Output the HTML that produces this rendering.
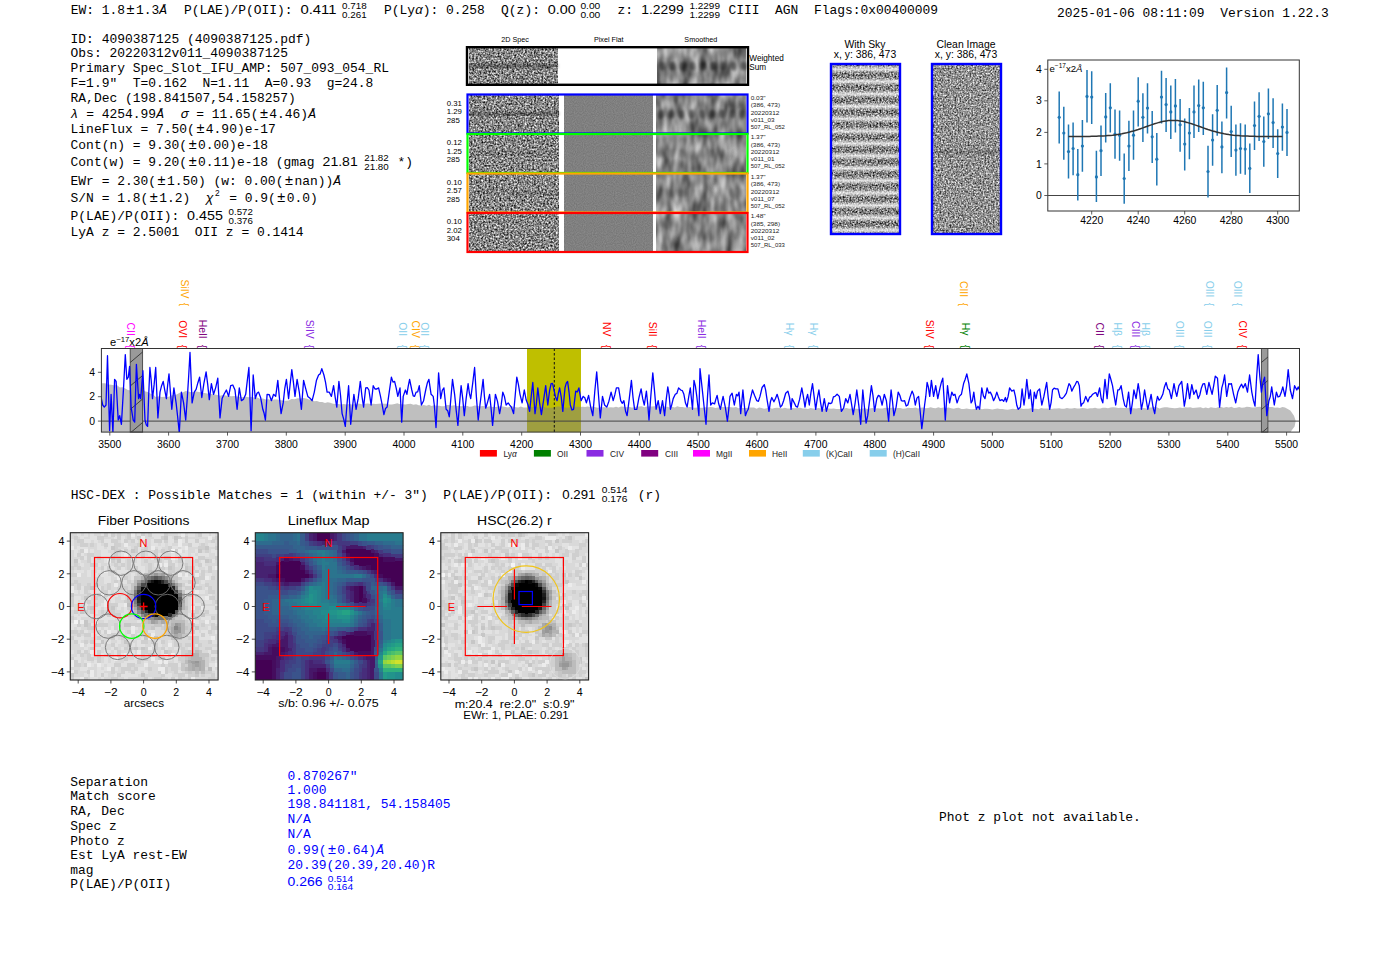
<!DOCTYPE html><html><head><meta charset="utf-8"><style>html,body{margin:0;padding:0;background:#fff;width:1400px;height:953px;overflow:hidden}svg{display:block}</style></head><body>
<svg width="1400" height="953" viewBox="0 0 1400 953">
<defs>
<filter id="nz" x="0" y="0" width="100%" height="100%" color-interpolation-filters="sRGB">
 <feTurbulence type="fractalNoise" baseFrequency="0.55" numOctaves="2" seed="3"/>
 <feGaussianBlur stdDeviation="0.45"/>
 <feColorMatrix type="matrix" values="1.45 0 0 0 -0.2  1.45 0 0 0 -0.2  1.45 0 0 0 -0.2  0 0 0 0 1"/>
</filter>
<filter id="nz2" x="0" y="0" width="100%" height="100%" color-interpolation-filters="sRGB">
 <feTurbulence type="fractalNoise" baseFrequency="0.55" numOctaves="2" seed="8"/>
 <feGaussianBlur stdDeviation="0.45"/>
 <feColorMatrix type="matrix" values="1.45 0 0 0 -0.2  1.45 0 0 0 -0.2  1.45 0 0 0 -0.2  0 0 0 0 1"/>
</filter>
<filter id="smooth" x="0" y="0" width="100%" height="100%" color-interpolation-filters="sRGB">
 <feTurbulence type="fractalNoise" baseFrequency="0.11 0.05" numOctaves="2" seed="5"/>
 <feColorMatrix type="matrix" values="0.8 0 0 0 0.13  0.8 0 0 0 0.13  0.8 0 0 0 0.13  0 0 0 0 1"/>
</filter>
<filter id="flat" x="0" y="0" width="100%" height="100%" color-interpolation-filters="sRGB">
 <feTurbulence type="fractalNoise" baseFrequency="0.9" numOctaves="1" seed="9"/>
 <feColorMatrix type="matrix" values="0.15 0 0 0 0.425  0.15 0 0 0 0.425  0.15 0 0 0 0.425  0 0 0 0 1"/>
</filter>
<filter id="bg" x="0" y="0" width="100%" height="100%" color-interpolation-filters="sRGB">
 <feTurbulence type="fractalNoise" baseFrequency="0.3" numOctaves="1" seed="11"/>
 <feColorMatrix type="matrix" values="0.5 0 0 0 0.6  0.5 0 0 0 0.6  0.5 0 0 0 0.6  0 0 0 0 1"/>
</filter>
<filter id="nzc" x="0" y="0" width="100%" height="100%" color-interpolation-filters="sRGB">
 <feTurbulence type="fractalNoise" baseFrequency="0.6" numOctaves="2" seed="13"/>
 <feGaussianBlur stdDeviation="0.5"/>
 <feColorMatrix type="matrix" values="1.3 0 0 0 -0.08  1.3 0 0 0 -0.08  1.3 0 0 0 -0.08  0 0 0 0 1"/>
</filter>
<filter id="nzs" x="0" y="0" width="100%" height="100%" color-interpolation-filters="sRGB">
 <feTurbulence type="fractalNoise" baseFrequency="0.6" numOctaves="2" seed="17"/>
 <feGaussianBlur stdDeviation="0.4"/>
 <feColorMatrix type="matrix" values="1.5 0 0 0 -0.27  1.5 0 0 0 -0.27  1.5 0 0 0 -0.27  0 0 0 0 1"/>
</filter>
<linearGradient id="stripe" x1="0" y1="0" x2="0" y2="1">
 <stop offset="0" stop-color="#fff" stop-opacity="0"/>
 <stop offset="0.3" stop-color="#fff" stop-opacity="0.05"/>
 <stop offset="0.65" stop-color="#fff" stop-opacity="0.8"/>
 <stop offset="1" stop-color="#fff" stop-opacity="0"/>
</linearGradient>
<pattern id="stripes" patternUnits="userSpaceOnUse" x="832" y="61.2" width="67" height="12.38">
 <rect x="0" y="0" width="67" height="12.38" fill="url(#stripe)"/>
</pattern>
<filter id="blur2s" x="-10%" y="-50%" width="120%" height="200%"><feGaussianBlur stdDeviation="1.6"/></filter>
<filter id="blur1"><feGaussianBlur stdDeviation="1.5"/></filter>
<filter id="blur2"><feGaussianBlur stdDeviation="2.5"/></filter>
<filter id="blur4"><feGaussianBlur stdDeviation="4"/></filter>
<filter id="blur6"><feGaussianBlur stdDeviation="6"/></filter>
<pattern id="hatch" patternUnits="userSpaceOnUse" width="12" height="12">
 <path d="M-3,15 L15,-3" stroke="#222" stroke-width="1"/>
</pattern>
</defs>
<text y="14.00" font-size="12.95" font-family='"Liberation Mono", monospace' fill="#000" xml:space="preserve"><tspan x="70.70">EW: 1.8</tspan><tspan x="130.55" text-anchor="middle" font-family='"Liberation Sans", sans-serif' font-size="14.50">±</tspan><tspan x="135.93">1.3</tspan><tspan x="159.27" font-style="italic">Å</tspan></text>
<text x="183.90" y="14.00" font-size="12.95" font-family='"Liberation Mono", monospace' fill="#000" text-anchor="start" >P(LAE)/P(OII):</text>
<text x="300.40" y="14.00" font-size="12.9" font-family='"Liberation Sans", sans-serif' fill="#000" text-anchor="start" textLength="36" lengthAdjust="spacingAndGlyphs" >0.411</text>
<text x="342.10" y="8.60" font-size="9.4" font-family='"Liberation Sans", sans-serif' fill="#000" text-anchor="start" textLength="24.6" lengthAdjust="spacingAndGlyphs" >0.718</text>
<text x="342.10" y="17.60" font-size="9.4" font-family='"Liberation Sans", sans-serif' fill="#000" text-anchor="start" textLength="24.6" lengthAdjust="spacingAndGlyphs" >0.261</text>
<text x="383.90" y="14.00" font-size="12.95" font-family='"Liberation Mono", monospace' fill="#000" text-anchor="start" >P(Ly<tspan font-style="italic">α</tspan>): 0.258</text>
<text x="501.10" y="14.00" font-size="12.95" font-family='"Liberation Mono", monospace' fill="#000" text-anchor="start" >Q(z):</text>
<text x="547.80" y="14.00" font-size="12.9" font-family='"Liberation Sans", sans-serif' fill="#000" text-anchor="start" textLength="27.9" lengthAdjust="spacingAndGlyphs" >0.00</text>
<text x="580.40" y="8.60" font-size="9.4" font-family='"Liberation Sans", sans-serif' fill="#000" text-anchor="start" textLength="19.9" lengthAdjust="spacingAndGlyphs" >0.00</text>
<text x="580.40" y="17.60" font-size="9.4" font-family='"Liberation Sans", sans-serif' fill="#000" text-anchor="start" textLength="19.9" lengthAdjust="spacingAndGlyphs" >0.00</text>
<text x="617.50" y="14.00" font-size="12.95" font-family='"Liberation Mono", monospace' fill="#000" text-anchor="start" >z:</text>
<text x="641.30" y="14.00" font-size="12.9" font-family='"Liberation Sans", sans-serif' fill="#000" text-anchor="start" textLength="42.4" lengthAdjust="spacingAndGlyphs" >1.2299</text>
<text x="689.40" y="8.60" font-size="9.4" font-family='"Liberation Sans", sans-serif' fill="#000" text-anchor="start" textLength="30.6" lengthAdjust="spacingAndGlyphs" >1.2299</text>
<text x="689.40" y="17.60" font-size="9.4" font-family='"Liberation Sans", sans-serif' fill="#000" text-anchor="start" textLength="30.6" lengthAdjust="spacingAndGlyphs" >1.2299</text>
<text x="728.50" y="14.00" font-size="12.95" font-family='"Liberation Mono", monospace' fill="#000" text-anchor="start" xml:space="preserve">CIII  AGN  Flags:0x00400009</text>
<text x="1057.10" y="16.70" font-size="12.95" font-family='"Liberation Mono", monospace' fill="#000" text-anchor="start" xml:space="preserve">2025-01-06 08:11:09  Version 1.22.3</text>
<text y="42.70" font-size="12.95" font-family='"Liberation Mono", monospace' fill="#000" xml:space="preserve"><tspan x="70.60">ID: 4090387125 (4090387125.pdf)</tspan></text>
<text y="56.80" font-size="12.95" font-family='"Liberation Mono", monospace' fill="#000" xml:space="preserve"><tspan x="70.60">Obs: 20220312v011_4090387125</tspan></text>
<text y="72.20" font-size="12.95" font-family='"Liberation Mono", monospace' fill="#000" xml:space="preserve"><tspan x="70.60">Primary Spec_Slot_IFU_AMP: 507_093_054_RL</tspan></text>
<text y="86.70" font-size="12.95" font-family='"Liberation Mono", monospace' fill="#000" xml:space="preserve"><tspan x="70.60">F=1.9"  T=0.162  N=1.11  A=0.93  g=24.8</tspan></text>
<text y="101.70" font-size="12.95" font-family='"Liberation Mono", monospace' fill="#000" xml:space="preserve"><tspan x="70.60">RA,Dec (198.841507,54.158257)</tspan></text>
<text y="117.90" font-size="12.95" font-family='"Liberation Mono", monospace' fill="#000" xml:space="preserve"><tspan x="70.60" font-style="italic">λ</tspan><tspan x="78.38"> = 4254.99</tspan><tspan x="156.18" font-style="italic">Å</tspan><tspan x="165.18">  </tspan><tspan x="180.74" font-style="italic">σ</tspan><tspan x="188.52"> = 11.65(</tspan><tspan x="263.93" text-anchor="middle" font-family='"Liberation Sans", sans-serif' font-size="14.50">±</tspan><tspan x="269.31">4.46)</tspan><tspan x="308.21" font-style="italic">Å</tspan></text>
<text y="133.30" font-size="12.95" font-family='"Liberation Mono", monospace' fill="#000" xml:space="preserve"><tspan x="70.60">LineFlux = 7.50(</tspan><tspan x="200.47" text-anchor="middle" font-family='"Liberation Sans", sans-serif' font-size="14.50">±</tspan><tspan x="205.85">4.90)e-17</tspan></text>
<text y="148.60" font-size="12.95" font-family='"Liberation Mono", monospace' fill="#000" xml:space="preserve"><tspan x="70.60">Cont(n) = 9.30(</tspan><tspan x="192.69" text-anchor="middle" font-family='"Liberation Sans", sans-serif' font-size="14.50">±</tspan><tspan x="198.07">0.00)e-18</tspan></text>
<text y="165.70" font-size="12.95" font-family='"Liberation Mono", monospace' fill="#000" xml:space="preserve"><tspan x="70.60">Cont(w) = 9.20(</tspan><tspan x="192.69" text-anchor="middle" font-family='"Liberation Sans", sans-serif' font-size="14.50">±</tspan><tspan x="198.07">0.11)e-18 (gmag</tspan></text>
<text y="184.60" font-size="12.95" font-family='"Liberation Mono", monospace' fill="#000" xml:space="preserve"><tspan x="70.60">EWr = 2.30(</tspan><tspan x="161.56" text-anchor="middle" font-family='"Liberation Sans", sans-serif' font-size="14.50">±</tspan><tspan x="166.95">1.50) (w: 0.00(</tspan><tspan x="289.03" text-anchor="middle" font-family='"Liberation Sans", sans-serif' font-size="14.50">±</tspan><tspan x="294.42">nan))</tspan><tspan x="333.32" font-style="italic">Å</tspan></text>
<text y="201.90" font-size="12.95" font-family='"Liberation Mono", monospace' fill="#000" xml:space="preserve"><tspan x="70.60">S/N = 1.8(</tspan><tspan x="153.78" text-anchor="middle" font-family='"Liberation Sans", sans-serif' font-size="14.50">±</tspan><tspan x="159.17">1.2)  </tspan><tspan x="205.85" font-style="italic">χ</tspan></text>
<text y="220.00" font-size="12.95" font-family='"Liberation Mono", monospace' fill="#000" xml:space="preserve"><tspan x="70.60">P(LAE)/P(OII):</tspan></text>
<text y="236.00" font-size="12.95" font-family='"Liberation Mono", monospace' fill="#000" xml:space="preserve"><tspan x="70.60">LyA z = 2.5001  OII z = 0.1414</tspan></text>
<text y="201.90" font-size="12.95" font-family='"Liberation Mono", monospace' fill="#000" xml:space="preserve"><tspan x="229.20">= 0.9(</tspan><tspan x="281.26" text-anchor="middle" font-family='"Liberation Sans", sans-serif' font-size="14.50">±</tspan><tspan x="286.65">0.0)</tspan></text>
<text x="215.00" y="196.00" font-size="8.4" font-family='"Liberation Sans", sans-serif' fill="#000" text-anchor="start" >2</text>
<text x="322.60" y="165.70" font-size="12.9" font-family='"Liberation Sans", sans-serif' fill="#000" text-anchor="start" textLength="35.1" lengthAdjust="spacingAndGlyphs" >21.81</text>
<text x="364.30" y="160.50" font-size="9.4" font-family='"Liberation Sans", sans-serif' fill="#000" text-anchor="start" textLength="24.4" lengthAdjust="spacingAndGlyphs" >21.82</text>
<text x="364.30" y="169.50" font-size="9.4" font-family='"Liberation Sans", sans-serif' fill="#000" text-anchor="start" textLength="24.4" lengthAdjust="spacingAndGlyphs" >21.80</text>
<text x="397.40" y="165.70" font-size="12.95" font-family='"Liberation Mono", monospace' fill="#000" text-anchor="start" >*)</text>
<text x="187.10" y="220.00" font-size="12.9" font-family='"Liberation Sans", sans-serif' fill="#000" text-anchor="start" textLength="35.8" lengthAdjust="spacingAndGlyphs" >0.455</text>
<text x="228.60" y="214.50" font-size="9.4" font-family='"Liberation Sans", sans-serif' fill="#000" text-anchor="start" textLength="24.3" lengthAdjust="spacingAndGlyphs" >0.572</text>
<text x="228.60" y="223.50" font-size="9.4" font-family='"Liberation Sans", sans-serif' fill="#000" text-anchor="start" textLength="24.3" lengthAdjust="spacingAndGlyphs" >0.376</text>
<rect x="469" y="47" width="89" height="37" filter="url(#nz)"/>
<rect x="657" y="47" width="89" height="37" filter="url(#smooth)"/>
<rect x="469" y="64" width="89" height="4" fill="#000" opacity="0.35" filter="url(#blur1)"/>
<g filter="url(#blur2s)"><ellipse cx="662.0" cy="66" rx="3.2" ry="4.5" fill="#000" opacity="0.45"/><ellipse cx="672.2" cy="66" rx="3.2" ry="4.5" fill="#000" opacity="0.45"/><ellipse cx="682.4" cy="66" rx="3.2" ry="4.5" fill="#000" opacity="0.45"/><ellipse cx="692.6" cy="66" rx="3.2" ry="4.5" fill="#000" opacity="0.45"/><ellipse cx="702.8" cy="66" rx="3.2" ry="4.5" fill="#000" opacity="0.45"/><ellipse cx="713.0" cy="66" rx="3.2" ry="4.5" fill="#000" opacity="0.45"/><ellipse cx="723.2" cy="66" rx="3.2" ry="4.5" fill="#000" opacity="0.45"/><ellipse cx="733.4" cy="66" rx="3.2" ry="4.5" fill="#000" opacity="0.45"/><ellipse cx="743.6" cy="66" rx="3.2" ry="4.5" fill="#000" opacity="0.45"/></g>
<rect x="467" y="47.2" width="281" height="37.6" fill="none" stroke="#000" stroke-width="2.4"/>
<text x="515.00" y="41.75" font-size="7.2" font-family='"Liberation Sans", sans-serif' fill="#000" text-anchor="middle" >2D Spec</text>
<text x="608.75" y="41.75" font-size="7.2" font-family='"Liberation Sans", sans-serif' fill="#000" text-anchor="middle" >Pixel Flat</text>
<text x="700.75" y="41.75" font-size="7.2" font-family='"Liberation Sans", sans-serif' fill="#000" text-anchor="middle" >Smoothed</text>
<text x="749.30" y="61.25" font-size="8.2" font-family='"Liberation Sans", sans-serif' fill="#000" text-anchor="start" >Weighted</text>
<text x="749.30" y="69.50" font-size="8.2" font-family='"Liberation Sans", sans-serif' fill="#000" text-anchor="start" >Sum</text>
<rect x="469" y="95" width="90" height="38" filter="url(#nz)"/>
<rect x="564" y="95" width="89" height="38" filter="url(#flat)"/>
<rect x="656" y="95" width="90" height="38" filter="url(#smooth)" transform="translate(0,0)"/>
<rect x="469" y="112" width="90" height="3.5" fill="#000" opacity="0.35" filter="url(#blur1)"/>
<g filter="url(#blur2s)"><ellipse cx="661.0" cy="114" rx="3.2" ry="4.5" fill="#000" opacity="0.42"/><ellipse cx="671.2" cy="114" rx="3.2" ry="4.5" fill="#000" opacity="0.42"/><ellipse cx="681.4" cy="114" rx="3.2" ry="4.5" fill="#000" opacity="0.42"/><ellipse cx="691.6" cy="114" rx="3.2" ry="4.5" fill="#000" opacity="0.42"/><ellipse cx="701.8" cy="114" rx="3.2" ry="4.5" fill="#000" opacity="0.42"/><ellipse cx="712.0" cy="114" rx="3.2" ry="4.5" fill="#000" opacity="0.42"/><ellipse cx="722.2" cy="114" rx="3.2" ry="4.5" fill="#000" opacity="0.42"/><ellipse cx="732.4" cy="114" rx="3.2" ry="4.5" fill="#000" opacity="0.42"/><ellipse cx="742.6" cy="114" rx="3.2" ry="4.5" fill="#000" opacity="0.42"/></g>
<rect x="467.5" y="94.5" width="280" height="39" fill="none" stroke="#0000ff" stroke-width="2.2"/>
<text x="446.75" y="105.75" font-size="7.8" font-family='"Liberation Sans", sans-serif' fill="#000" text-anchor="start" >0.31</text>
<text x="446.75" y="114.35" font-size="7.8" font-family='"Liberation Sans", sans-serif' fill="#000" text-anchor="start" >1.29</text>
<text x="446.75" y="122.95" font-size="7.8" font-family='"Liberation Sans", sans-serif' fill="#000" text-anchor="start" >285</text>
<text x="750.70" y="99.50" font-size="5.9" font-family='"Liberation Sans", sans-serif' fill="#222" text-anchor="start" textLength="14.9" lengthAdjust="spacingAndGlyphs" >0.03"</text>
<text x="750.70" y="107.00" font-size="5.9" font-family='"Liberation Sans", sans-serif' fill="#222" text-anchor="start" textLength="29.4" lengthAdjust="spacingAndGlyphs" >(386, 473)</text>
<text x="750.70" y="114.70" font-size="5.9" font-family='"Liberation Sans", sans-serif' fill="#222" text-anchor="start" textLength="28.7" lengthAdjust="spacingAndGlyphs" >20220312</text>
<text x="750.70" y="121.60" font-size="5.9" font-family='"Liberation Sans", sans-serif' fill="#222" text-anchor="start" textLength="23.9" lengthAdjust="spacingAndGlyphs" >v011_03</text>
<text x="750.70" y="128.90" font-size="5.9" font-family='"Liberation Sans", sans-serif' fill="#222" text-anchor="start" textLength="34.2" lengthAdjust="spacingAndGlyphs" >507_RL_052</text>
<rect x="469" y="134.5" width="90" height="38" filter="url(#nz2)"/>
<rect x="564" y="134.5" width="89" height="38" filter="url(#flat)"/>
<rect x="656" y="134.5" width="90" height="38" filter="url(#smooth)" transform="translate(0,0)"/>
<rect x="469" y="151.5" width="90" height="3.5" fill="#000" opacity="0.12" filter="url(#blur1)"/>
<g filter="url(#blur2s)"><ellipse cx="661.0" cy="153.5" rx="3.2" ry="4.5" fill="#000" opacity="0.14"/><ellipse cx="671.2" cy="153.5" rx="3.2" ry="4.5" fill="#000" opacity="0.14"/><ellipse cx="681.4" cy="153.5" rx="3.2" ry="4.5" fill="#000" opacity="0.14"/><ellipse cx="691.6" cy="153.5" rx="3.2" ry="4.5" fill="#000" opacity="0.14"/><ellipse cx="701.8" cy="153.5" rx="3.2" ry="4.5" fill="#000" opacity="0.14"/><ellipse cx="712.0" cy="153.5" rx="3.2" ry="4.5" fill="#000" opacity="0.14"/><ellipse cx="722.2" cy="153.5" rx="3.2" ry="4.5" fill="#000" opacity="0.14"/><ellipse cx="732.4" cy="153.5" rx="3.2" ry="4.5" fill="#000" opacity="0.14"/><ellipse cx="742.6" cy="153.5" rx="3.2" ry="4.5" fill="#000" opacity="0.14"/></g>
<rect x="467.5" y="134.0" width="280" height="39" fill="none" stroke="#00ff00" stroke-width="2.2"/>
<text x="446.75" y="145.25" font-size="7.8" font-family='"Liberation Sans", sans-serif' fill="#000" text-anchor="start" >0.12</text>
<text x="446.75" y="153.85" font-size="7.8" font-family='"Liberation Sans", sans-serif' fill="#000" text-anchor="start" >1.25</text>
<text x="446.75" y="162.45" font-size="7.8" font-family='"Liberation Sans", sans-serif' fill="#000" text-anchor="start" >285</text>
<text x="750.70" y="139.00" font-size="5.9" font-family='"Liberation Sans", sans-serif' fill="#222" text-anchor="start" textLength="14.9" lengthAdjust="spacingAndGlyphs" >1.37"</text>
<text x="750.70" y="146.50" font-size="5.9" font-family='"Liberation Sans", sans-serif' fill="#222" text-anchor="start" textLength="29.4" lengthAdjust="spacingAndGlyphs" >(386, 473)</text>
<text x="750.70" y="154.20" font-size="5.9" font-family='"Liberation Sans", sans-serif' fill="#222" text-anchor="start" textLength="28.7" lengthAdjust="spacingAndGlyphs" >20220312</text>
<text x="750.70" y="161.10" font-size="5.9" font-family='"Liberation Sans", sans-serif' fill="#222" text-anchor="start" textLength="23.9" lengthAdjust="spacingAndGlyphs" >v011_01</text>
<text x="750.70" y="168.40" font-size="5.9" font-family='"Liberation Sans", sans-serif' fill="#222" text-anchor="start" textLength="34.2" lengthAdjust="spacingAndGlyphs" >507_RL_052</text>
<rect x="469" y="174" width="90" height="38" filter="url(#nz)"/>
<rect x="564" y="174" width="89" height="38" filter="url(#flat)"/>
<rect x="656" y="174" width="90" height="38" filter="url(#smooth)" transform="translate(0,0)"/>
<rect x="469" y="191" width="90" height="3.5" fill="#000" opacity="0.12" filter="url(#blur1)"/>
<g filter="url(#blur2s)"><ellipse cx="661.0" cy="193" rx="3.2" ry="4.5" fill="#000" opacity="0.14"/><ellipse cx="671.2" cy="193" rx="3.2" ry="4.5" fill="#000" opacity="0.14"/><ellipse cx="681.4" cy="193" rx="3.2" ry="4.5" fill="#000" opacity="0.14"/><ellipse cx="691.6" cy="193" rx="3.2" ry="4.5" fill="#000" opacity="0.14"/><ellipse cx="701.8" cy="193" rx="3.2" ry="4.5" fill="#000" opacity="0.14"/><ellipse cx="712.0" cy="193" rx="3.2" ry="4.5" fill="#000" opacity="0.14"/><ellipse cx="722.2" cy="193" rx="3.2" ry="4.5" fill="#000" opacity="0.14"/><ellipse cx="732.4" cy="193" rx="3.2" ry="4.5" fill="#000" opacity="0.14"/><ellipse cx="742.6" cy="193" rx="3.2" ry="4.5" fill="#000" opacity="0.14"/></g>
<rect x="467.5" y="173.5" width="280" height="39" fill="none" stroke="#ffa500" stroke-width="2.2"/>
<text x="446.75" y="184.75" font-size="7.8" font-family='"Liberation Sans", sans-serif' fill="#000" text-anchor="start" >0.10</text>
<text x="446.75" y="193.35" font-size="7.8" font-family='"Liberation Sans", sans-serif' fill="#000" text-anchor="start" >2.57</text>
<text x="446.75" y="201.95" font-size="7.8" font-family='"Liberation Sans", sans-serif' fill="#000" text-anchor="start" >285</text>
<text x="750.70" y="178.50" font-size="5.9" font-family='"Liberation Sans", sans-serif' fill="#222" text-anchor="start" textLength="14.9" lengthAdjust="spacingAndGlyphs" >1.37"</text>
<text x="750.70" y="186.00" font-size="5.9" font-family='"Liberation Sans", sans-serif' fill="#222" text-anchor="start" textLength="29.4" lengthAdjust="spacingAndGlyphs" >(386, 473)</text>
<text x="750.70" y="193.70" font-size="5.9" font-family='"Liberation Sans", sans-serif' fill="#222" text-anchor="start" textLength="28.7" lengthAdjust="spacingAndGlyphs" >20220312</text>
<text x="750.70" y="200.60" font-size="5.9" font-family='"Liberation Sans", sans-serif' fill="#222" text-anchor="start" textLength="23.9" lengthAdjust="spacingAndGlyphs" >v011_07</text>
<text x="750.70" y="207.90" font-size="5.9" font-family='"Liberation Sans", sans-serif' fill="#222" text-anchor="start" textLength="34.2" lengthAdjust="spacingAndGlyphs" >507_RL_052</text>
<rect x="469" y="213.5" width="90" height="38" filter="url(#nz2)"/>
<rect x="564" y="213.5" width="89" height="38" filter="url(#flat)"/>
<rect x="656" y="213.5" width="90" height="38" filter="url(#smooth)" transform="translate(0,0)"/>
<rect x="467.5" y="213.0" width="280" height="39" fill="none" stroke="#ff0000" stroke-width="2.2"/>
<text x="446.75" y="224.25" font-size="7.8" font-family='"Liberation Sans", sans-serif' fill="#000" text-anchor="start" >0.10</text>
<text x="446.75" y="232.85" font-size="7.8" font-family='"Liberation Sans", sans-serif' fill="#000" text-anchor="start" >2.02</text>
<text x="446.75" y="241.45" font-size="7.8" font-family='"Liberation Sans", sans-serif' fill="#000" text-anchor="start" >304</text>
<text x="750.70" y="218.00" font-size="5.9" font-family='"Liberation Sans", sans-serif' fill="#222" text-anchor="start" textLength="14.9" lengthAdjust="spacingAndGlyphs" >1.48"</text>
<text x="750.70" y="225.50" font-size="5.9" font-family='"Liberation Sans", sans-serif' fill="#222" text-anchor="start" textLength="29.4" lengthAdjust="spacingAndGlyphs" >(385, 298)</text>
<text x="750.70" y="233.20" font-size="5.9" font-family='"Liberation Sans", sans-serif' fill="#222" text-anchor="start" textLength="28.7" lengthAdjust="spacingAndGlyphs" >20220312</text>
<text x="750.70" y="240.10" font-size="5.9" font-family='"Liberation Sans", sans-serif' fill="#222" text-anchor="start" textLength="23.9" lengthAdjust="spacingAndGlyphs" >v011_02</text>
<text x="750.70" y="247.40" font-size="5.9" font-family='"Liberation Sans", sans-serif' fill="#222" text-anchor="start" textLength="34.2" lengthAdjust="spacingAndGlyphs" >507_RL_033</text>
<text x="865.00" y="47.60" font-size="10.4" font-family='"Liberation Sans", sans-serif' fill="#000" text-anchor="middle" >With Sky</text>
<text x="865.00" y="58.20" font-size="10.4" font-family='"Liberation Sans", sans-serif' fill="#000" text-anchor="middle" >x, y: 386, 473</text>
<text x="966.00" y="47.60" font-size="10.4" font-family='"Liberation Sans", sans-serif' fill="#000" text-anchor="middle" >Clean Image</text>
<text x="966.00" y="58.20" font-size="10.4" font-family='"Liberation Sans", sans-serif' fill="#000" text-anchor="middle" >x, y: 386, 473</text>
<rect x="832" y="65" width="67" height="168" filter="url(#nzs)"/>
<rect x="832" y="65" width="67" height="168" fill="url(#stripes)"/>
<rect x="933" y="65" width="67" height="168" filter="url(#nzc)"/>
<rect x="933" y="150" width="67" height="4" fill="#000" opacity="0.2" filter="url(#blur1)"/>
<rect x="831" y="64" width="69" height="170" fill="none" stroke="#0000ff" stroke-width="2.4"/>
<rect x="932" y="64" width="69" height="170" fill="none" stroke="#0000ff" stroke-width="2.4"/>
<rect x="1047.8" y="60" width="251.5" height="151" fill="#fff" stroke="#333" stroke-width="1"/>
<line x1="1047.8" y1="195.5" x2="1299.3" y2="195.5" stroke="#444" stroke-width="1"/>
<path d="M1059.2,91.4V143.6 M1063.8,106.8V159.7 M1068.5,124.6V178.6 M1073.1,122.4V175.3 M1077.8,149.0V200.4 M1082.4,120.1V171.7 M1087.0,70.1V122.4 M1091.7,71.2V123.9 M1096.4,150.7V202.1 M1101.0,125.6V176.0 M1105.7,92.9V142.6 M1110.3,83.2V132.5 M1115.0,109.4V158.8 M1119.6,110.6V160.8 M1124.2,153.5V203.8 M1128.9,120.7V171.1 M1133.5,110.6V159.7 M1138.2,77.2V126.5 M1142.9,93.3V142.1 M1147.5,83.2V133.6 M1152.2,111.1V162.9 M1156.8,132.9V185.6 M1161.5,70.8V123.5 M1166.1,77.9V131.9 M1170.8,85.4V138.9 M1175.4,78.9V132.5 M1180.1,98.9V151.8 M1184.7,118.6V170.4 M1189.4,107.9V159.3 M1194.0,85.4V137.9 M1198.7,79.6V132.1 M1203.3,81.7V135.1 M1208.0,145.8V197.4 M1212.6,114.3V165.7 M1217.2,84.9V135.7 M1221.9,121.4V173.2 M1226.6,67.6V118.6 M1231.2,105.7V157.1 M1235.9,124.6V175.8 M1240.5,123.3V173.8 M1245.2,124.4V174.7 M1249.8,143.6V193.1 M1254.5,101.4V150.1 M1259.1,92.2V141.1 M1263.8,116.4V166.8 M1268.4,88.6V138.9 M1273.1,98.2V148.1 M1277.7,129.3V177.9 M1282.4,103.6V150.7 M1287.0,108.9V156.1" stroke="#1f77b4" stroke-width="1.5" fill="none"/>
<circle cx="1059.2" cy="117.3" r="1.6" fill="#1f77b4"/>
<circle cx="1063.8" cy="133.0" r="1.6" fill="#1f77b4"/>
<circle cx="1068.5" cy="151.6" r="1.6" fill="#1f77b4"/>
<circle cx="1073.1" cy="148.5" r="1.6" fill="#1f77b4"/>
<circle cx="1077.8" cy="174.7" r="1.6" fill="#1f77b4"/>
<circle cx="1082.4" cy="146.0" r="1.6" fill="#1f77b4"/>
<circle cx="1087.0" cy="96.4" r="1.6" fill="#1f77b4"/>
<circle cx="1091.7" cy="97.1" r="1.6" fill="#1f77b4"/>
<circle cx="1096.4" cy="176.9" r="1.6" fill="#1f77b4"/>
<circle cx="1101.0" cy="150.7" r="1.6" fill="#1f77b4"/>
<circle cx="1105.7" cy="116.9" r="1.6" fill="#1f77b4"/>
<circle cx="1110.3" cy="107.8" r="1.6" fill="#1f77b4"/>
<circle cx="1115.0" cy="134.0" r="1.6" fill="#1f77b4"/>
<circle cx="1119.6" cy="135.2" r="1.6" fill="#1f77b4"/>
<circle cx="1124.2" cy="178.5" r="1.6" fill="#1f77b4"/>
<circle cx="1128.9" cy="146.0" r="1.6" fill="#1f77b4"/>
<circle cx="1133.5" cy="135.2" r="1.6" fill="#1f77b4"/>
<circle cx="1138.2" cy="101.2" r="1.6" fill="#1f77b4"/>
<circle cx="1142.9" cy="117.3" r="1.6" fill="#1f77b4"/>
<circle cx="1147.5" cy="108.1" r="1.6" fill="#1f77b4"/>
<circle cx="1152.2" cy="136.8" r="1.6" fill="#1f77b4"/>
<circle cx="1156.8" cy="159.2" r="1.6" fill="#1f77b4"/>
<circle cx="1161.5" cy="97.1" r="1.6" fill="#1f77b4"/>
<circle cx="1166.1" cy="104.6" r="1.6" fill="#1f77b4"/>
<circle cx="1170.8" cy="111.9" r="1.6" fill="#1f77b4"/>
<circle cx="1175.4" cy="105.9" r="1.6" fill="#1f77b4"/>
<circle cx="1180.1" cy="124.8" r="1.6" fill="#1f77b4"/>
<circle cx="1184.7" cy="144.1" r="1.6" fill="#1f77b4"/>
<circle cx="1189.4" cy="133.0" r="1.6" fill="#1f77b4"/>
<circle cx="1194.0" cy="111.9" r="1.6" fill="#1f77b4"/>
<circle cx="1198.7" cy="105.6" r="1.6" fill="#1f77b4"/>
<circle cx="1203.3" cy="107.8" r="1.6" fill="#1f77b4"/>
<circle cx="1208.0" cy="171.5" r="1.6" fill="#1f77b4"/>
<circle cx="1212.6" cy="140.0" r="1.6" fill="#1f77b4"/>
<circle cx="1217.2" cy="110.3" r="1.6" fill="#1f77b4"/>
<circle cx="1221.9" cy="146.9" r="1.6" fill="#1f77b4"/>
<circle cx="1226.6" cy="92.6" r="1.6" fill="#1f77b4"/>
<circle cx="1231.2" cy="131.5" r="1.6" fill="#1f77b4"/>
<circle cx="1235.9" cy="150.1" r="1.6" fill="#1f77b4"/>
<circle cx="1240.5" cy="148.5" r="1.6" fill="#1f77b4"/>
<circle cx="1245.2" cy="149.1" r="1.6" fill="#1f77b4"/>
<circle cx="1249.8" cy="168.4" r="1.6" fill="#1f77b4"/>
<circle cx="1254.5" cy="125.5" r="1.6" fill="#1f77b4"/>
<circle cx="1259.1" cy="116.3" r="1.6" fill="#1f77b4"/>
<circle cx="1263.8" cy="141.5" r="1.6" fill="#1f77b4"/>
<circle cx="1268.4" cy="113.8" r="1.6" fill="#1f77b4"/>
<circle cx="1273.1" cy="122.6" r="1.6" fill="#1f77b4"/>
<circle cx="1277.7" cy="153.5" r="1.6" fill="#1f77b4"/>
<circle cx="1282.4" cy="127.0" r="1.6" fill="#1f77b4"/>
<circle cx="1287.0" cy="132.4" r="1.6" fill="#1f77b4"/>
<polyline points="1068.5,136.5 1070.8,136.5 1073.1,136.5 1075.4,136.5 1077.8,136.5 1080.1,136.5 1082.4,136.4 1084.7,136.4 1087.0,136.4 1089.4,136.4 1091.7,136.3 1094.0,136.3 1096.4,136.2 1098.7,136.1 1101.0,136.0 1103.3,135.9 1105.7,135.8 1108.0,135.6 1110.3,135.4 1112.6,135.2 1115.0,134.9 1117.3,134.6 1119.6,134.2 1121.9,133.8 1124.2,133.3 1126.6,132.8 1128.9,132.2 1131.2,131.6 1133.5,131.0 1135.9,130.2 1138.2,129.5 1140.5,128.7 1142.9,127.9 1145.2,127.0 1147.5,126.2 1149.8,125.4 1152.2,124.6 1154.5,123.8 1156.8,123.1 1159.1,122.4 1161.5,121.8 1163.8,121.3 1166.1,120.9 1168.4,120.6 1170.8,120.5 1173.1,120.4 1175.4,120.5 1177.7,120.6 1180.1,120.9 1182.4,121.3 1184.7,121.8 1187.0,122.4 1189.4,123.1 1191.7,123.8 1194.0,124.6 1196.3,125.4 1198.7,126.2 1201.0,127.0 1203.3,127.9 1205.6,128.7 1208.0,129.5 1210.3,130.2 1212.6,131.0 1214.9,131.6 1217.2,132.2 1219.6,132.8 1221.9,133.3 1224.2,133.8 1226.6,134.2 1228.9,134.6 1231.2,134.9 1233.5,135.2 1235.9,135.4 1238.2,135.6 1240.5,135.8 1242.8,135.9 1245.2,136.0 1247.5,136.1 1249.8,136.2 1252.1,136.3 1254.5,136.3 1256.8,136.4 1259.1,136.4 1261.4,136.4 1263.8,136.4 1266.1,136.5 1268.4,136.5 1270.7,136.5 1273.1,136.5 1275.4,136.5 1277.7,136.5 1280.0,136.5 1282.4,136.5" stroke="#333" stroke-width="1.5" fill="none"/>
<line x1="1044.3" y1="195.5" x2="1047.8" y2="195.5" stroke="#333" stroke-width="0.8"/>
<text x="1041.80" y="199.10" font-size="10.4" font-family='"Liberation Sans", sans-serif' fill="#000" text-anchor="end" >0</text>
<line x1="1044.3" y1="163.9" x2="1047.8" y2="163.9" stroke="#333" stroke-width="0.8"/>
<text x="1041.80" y="167.55" font-size="10.4" font-family='"Liberation Sans", sans-serif' fill="#000" text-anchor="end" >1</text>
<line x1="1044.3" y1="132.4" x2="1047.8" y2="132.4" stroke="#333" stroke-width="0.8"/>
<text x="1041.80" y="136.00" font-size="10.4" font-family='"Liberation Sans", sans-serif' fill="#000" text-anchor="end" >2</text>
<line x1="1044.3" y1="100.8" x2="1047.8" y2="100.8" stroke="#333" stroke-width="0.8"/>
<text x="1041.80" y="104.45" font-size="10.4" font-family='"Liberation Sans", sans-serif' fill="#000" text-anchor="end" >3</text>
<line x1="1044.3" y1="69.3" x2="1047.8" y2="69.3" stroke="#333" stroke-width="0.8"/>
<text x="1041.80" y="72.90" font-size="10.4" font-family='"Liberation Sans", sans-serif' fill="#000" text-anchor="end" >4</text>
<line x1="1091.7" y1="211" x2="1091.7" y2="214.5" stroke="#333" stroke-width="0.8"/>
<text x="1091.70" y="224.20" font-size="10.4" font-family='"Liberation Sans", sans-serif' fill="#000" text-anchor="middle" >4220</text>
<line x1="1138.2" y1="211" x2="1138.2" y2="214.5" stroke="#333" stroke-width="0.8"/>
<text x="1138.20" y="224.20" font-size="10.4" font-family='"Liberation Sans", sans-serif' fill="#000" text-anchor="middle" >4240</text>
<line x1="1184.7" y1="211" x2="1184.7" y2="214.5" stroke="#333" stroke-width="0.8"/>
<text x="1184.70" y="224.20" font-size="10.4" font-family='"Liberation Sans", sans-serif' fill="#000" text-anchor="middle" >4260</text>
<line x1="1231.2" y1="211" x2="1231.2" y2="214.5" stroke="#333" stroke-width="0.8"/>
<text x="1231.20" y="224.20" font-size="10.4" font-family='"Liberation Sans", sans-serif' fill="#000" text-anchor="middle" >4280</text>
<line x1="1277.7" y1="211" x2="1277.7" y2="214.5" stroke="#333" stroke-width="0.8"/>
<text x="1277.70" y="224.20" font-size="10.4" font-family='"Liberation Sans", sans-serif' fill="#000" text-anchor="middle" >4300</text>
<text x="1049.50" y="71.50" font-size="9.6" font-family='"Liberation Sans", sans-serif' fill="#000" text-anchor="start" >e<tspan font-size="6.5" dy="-4">−17</tspan><tspan dy="4">x2</tspan><tspan font-style="italic">Å</tspan></text>
<clipPath id="pc"><rect x="101.4" y="348.5" width="1198.1" height="83.60000000000002"/></clipPath>
<rect x="101.4" y="348.5" width="1198.1" height="83.60000000000002" fill="#fff"/>
<rect x="527" y="348.5" width="54" height="83.6" fill="#bfbf00"/>
<polygon points="102.1,383.2 105.1,383.2 108.1,384.4 111.1,384.7 114.1,385.3 117.1,385.3 119.8,387.4 122.5,387.2 125.2,388.6 127.9,389.9 130.9,390.4 133.9,389.6 136.9,390.5 139.9,390.7 142.9,389.5 145.4,391.4 148.0,391.9 150.6,393.7 153.1,394.5 155.7,397.1 158.7,396.3 161.7,397.1 164.7,396.8 167.7,396.9 170.7,396.0 173.7,394.8 176.7,394.4 179.7,392.7 182.7,392.5 185.7,390.9 188.4,391.4 191.1,392.2 193.7,391.9 196.4,391.6 199.1,391.9 201.8,392.7 204.5,393.0 207.1,393.4 209.7,393.5 212.3,394.3 214.8,394.4 217.4,395.1 220.0,395.7 222.8,395.1 225.7,395.5 228.6,395.9 231.4,396.3 234.3,395.9 237.1,396.5 240.0,396.8 242.8,397.3 245.7,396.8 248.6,397.3 251.4,396.9 254.3,397.5 257.1,397.4 260.0,398.8 262.8,398.5 265.7,399.4 268.6,399.2 271.4,400.2 274.3,399.6 277.1,399.6 280.0,400.1 282.8,400.6 285.7,400.7 288.6,400.4 291.6,399.1 294.6,399.3 297.6,398.3 300.6,398.4 303.6,398.0 306.2,398.4 308.9,399.5 311.6,399.6 314.3,401.2 316.9,401.0 319.6,402.0 322.3,402.0 325.0,402.9 327.7,402.2 330.3,402.7 333.0,403.8 335.7,403.9 338.4,404.0 341.1,404.4 343.7,403.9 346.4,404.4 349.1,403.9 351.8,404.5 354.4,404.2 357.1,403.4 359.8,403.7 362.5,404.4 365.2,403.7 367.8,403.5 370.5,403.9 373.2,403.8 375.9,404.1 378.6,403.8 381.2,403.6 383.9,403.8 386.6,403.8 389.3,404.5 392.0,404.6 394.6,404.1 397.3,403.3 400.0,404.3 402.7,404.3 405.4,404.6 408.0,404.1 410.7,403.8 413.4,404.8 416.1,404.2 418.7,405.2 421.4,405.4 423.9,404.9 426.5,405.7 429.0,404.7 431.5,405.9 434.0,405.3 436.6,405.7 439.1,405.8 441.6,406.2 444.1,406.2 446.6,405.0 449.2,405.0 451.7,405.8 454.2,405.2 456.7,406.1 459.2,406.0 461.8,406.2 464.3,406.0 466.9,405.8 469.4,406.8 472.0,406.5 474.6,405.5 477.1,405.7 479.7,406.5 482.3,406.1 484.9,406.3 487.4,406.8 490.0,406.3 492.6,407.1 495.1,406.9 497.7,406.7 500.3,406.2 502.8,406.6 505.4,407.1 508.0,407.5 510.6,406.2 513.1,406.4 515.7,407.3 518.3,407.4 520.8,406.4 523.4,407.5 526.0,407.5 528.6,407.4 531.1,406.9 533.7,407.1 536.3,407.0 538.8,407.6 541.4,406.9 544.0,406.9 546.6,407.7 549.1,407.7 551.7,407.8 554.3,407.6 556.8,406.6 559.4,406.6 562.0,407.2 564.6,407.6 567.1,407.7 569.7,407.3 572.3,407.8 574.8,406.7 577.4,406.7 580.0,406.9 582.6,406.8 585.1,406.9 587.7,406.6 590.3,407.0 592.8,406.5 595.4,407.2 598.0,407.7 600.6,407.0 603.1,407.2 605.7,407.2 608.3,407.6 610.8,407.3 613.4,407.5 616.0,406.8 618.6,407.5 621.1,406.5 623.7,406.8 626.3,407.2 628.8,406.7 631.4,407.4 634.0,407.4 636.6,406.4 639.1,406.5 641.7,406.2 644.3,407.3 646.8,406.6 649.4,406.6 652.0,406.4 654.6,406.2 657.1,406.6 659.6,406.4 662.2,406.8 664.7,406.4 667.2,406.8 669.7,407.5 672.3,406.7 674.8,407.5 677.3,406.3 679.8,407.0 682.3,407.1 684.9,407.6 687.4,407.6 689.9,407.1 692.4,407.4 695.0,407.8 697.5,407.4 700.0,407.8 702.6,407.8 705.1,407.2 707.7,407.5 710.3,406.9 712.9,407.3 715.4,407.9 718.0,407.5 720.6,407.2 723.1,407.0 725.7,407.2 728.3,407.1 730.9,407.3 733.4,407.5 736.0,407.1 738.6,408.3 741.1,407.7 743.7,408.0 746.3,408.1 748.9,407.4 751.4,407.4 754.0,407.6 756.6,408.8 759.1,407.6 761.7,408.1 764.3,408.7 766.9,408.3 769.4,407.6 772.0,408.8 774.6,408.1 777.1,407.8 779.7,408.1 782.3,408.5 784.9,407.7 787.4,408.6 790.0,408.5 792.6,408.0 795.1,408.3 797.7,408.0 800.3,407.8 802.8,408.6 805.4,408.4 808.0,409.0 810.6,408.1 813.1,408.5 815.7,408.8 818.3,408.0 820.8,408.4 823.4,408.9 826.0,408.3 828.6,408.4 831.1,408.7 833.7,408.5 836.3,409.1 838.8,409.1 841.4,409.0 844.0,408.4 846.6,408.1 849.1,408.7 851.7,408.4 854.3,408.5 856.8,408.7 859.4,409.0 862.0,408.8 864.6,407.9 867.1,409.0 869.7,408.6 872.3,408.1 874.8,408.7 877.4,408.3 880.0,408.4 882.6,408.4 885.1,407.8 887.7,408.1 890.3,408.1 892.8,407.6 895.4,408.5 897.9,407.9 900.4,408.1 902.9,408.7 905.4,408.6 908.0,407.7 910.5,407.9 913.0,408.1 915.5,407.5 918.1,408.4 920.6,407.7 923.1,407.4 925.6,408.2 928.1,407.9 930.7,407.2 933.2,407.9 935.7,408.2 938.3,407.2 940.8,408.1 943.4,407.6 946.0,407.9 948.6,407.5 951.1,408.2 953.7,408.8 956.3,408.0 958.8,407.7 961.4,408.9 964.0,409.1 966.6,408.5 969.1,409.1 971.7,409.2 974.3,409.0 976.9,409.2 979.4,408.3 982.0,409.3 984.6,408.8 987.1,408.7 989.7,409.1 992.3,409.6 994.9,409.1 997.4,408.6 1000.0,409.0 1002.6,408.9 1005.1,409.5 1007.7,409.8 1010.3,409.2 1012.9,408.7 1015.4,409.3 1018.0,408.5 1020.6,408.3 1023.1,409.1 1025.7,408.7 1028.3,408.7 1030.9,408.2 1033.4,408.7 1036.0,408.8 1038.6,409.3 1041.1,407.9 1043.7,408.6 1046.3,408.5 1048.9,408.6 1051.4,408.9 1054.0,408.4 1056.6,408.4 1059.1,408.3 1061.7,408.7 1064.3,408.8 1066.9,407.9 1069.4,408.5 1072.0,408.4 1074.6,408.0 1077.1,408.5 1079.7,408.4 1082.3,408.1 1084.9,408.2 1087.4,408.7 1090.0,408.2 1092.6,408.2 1095.1,407.8 1097.7,408.4 1100.3,408.5 1102.8,407.7 1105.4,407.7 1108.0,408.2 1110.6,407.6 1113.1,407.3 1115.7,407.6 1118.3,408.1 1120.8,407.8 1123.4,407.9 1126.0,408.0 1128.6,407.8 1131.1,408.4 1133.7,408.2 1136.3,408.4 1138.8,408.1 1141.4,408.2 1144.0,408.1 1146.6,408.4 1149.1,407.6 1151.7,407.5 1154.3,407.1 1156.8,407.2 1159.4,408.4 1162.0,407.7 1164.6,407.3 1167.1,407.2 1169.7,407.8 1172.3,408.0 1174.8,408.2 1177.4,407.9 1180.0,407.5 1182.6,408.1 1185.1,407.3 1187.7,407.5 1190.3,407.3 1192.8,408.0 1195.4,407.8 1198.0,407.6 1200.6,407.3 1203.1,408.2 1205.7,407.5 1208.3,408.2 1210.8,407.3 1213.4,407.8 1216.0,407.9 1218.6,407.1 1221.1,407.1 1223.7,407.8 1226.3,406.9 1228.8,407.4 1231.4,406.8 1234.0,408.0 1236.6,407.8 1239.1,406.9 1241.7,407.8 1244.3,407.6 1246.8,406.7 1249.4,406.9 1252.0,407.4 1254.6,407.5 1257.1,406.9 1259.7,406.7 1262.2,407.2 1264.7,407.6 1267.3,407.3 1269.8,406.9 1272.3,407.1 1274.9,407.8 1277.4,407.4 1279.9,407.9 1282.4,407.1 1285.0,407.6 1287.7,409.0 1290.3,410.4 1294.0,415.7 1295.7,421.1 1294.6,426.4 1291.4,430.7 1289.3,437.1 101.4,437.1" fill="#808080" fill-opacity="0.5" clip-path="url(#pc)"/>
<line x1="101.4" y1="421.1" x2="1299.5" y2="421.1" stroke="#444" stroke-width="1"/>
<line x1="554.3" y1="348.5" x2="554.3" y2="432.1" stroke="#111" stroke-width="1" stroke-dasharray="2.5,2"/>
<rect x="130.2" y="348.5" width="12.4" height="83.6" fill="#9a9a9a" stroke="#444" stroke-width="0.9"/>
<path d="M130.2,362.5L142.6,352.0M130.2,386.0L142.6,375.5M130.2,409.5L142.6,399.0M130.2,433.0L142.6,422.5" stroke="#333" stroke-width="0.9" clip-path="url(#pc)"/>
<rect x="1261.4" y="348.5" width="6.5" height="83.6" fill="#9a9a9a" stroke="#444" stroke-width="0.9"/>
<path d="M1261.4,362.5L1267.9,357.0M1261.4,386.0L1267.9,380.5M1261.4,409.5L1267.9,404.0M1261.4,433.0L1267.9,427.5" stroke="#333" stroke-width="0.9" clip-path="url(#pc)"/>
<polyline points="101.1,397.5 102.7,405.0 104.3,407.1 106.0,405.0 107.5,355.7 109.6,430.7 111.1,394.3 112.9,432.9 114.6,379.3 116.1,381.4 118.2,420.0 119.7,415.7 121.4,424.3 123.4,390.4 125.3,354.6 126.8,379.3 128.3,377.1 129.6,366.4 131.1,407.1 133.2,420.0 134.7,422.1 136.4,364.3 138.6,398.6 139.6,394.3 140.7,398.6 142.9,370.7 145.0,420.0 146.3,424.8 147.6,426.4 148.7,394.7 149.9,367.5 151.2,380.4 152.5,398.6 154.1,384.9 155.7,367.5 157.9,417.9 160.0,392.1 161.6,385.7 163.2,381.4 164.8,390.3 166.4,398.6 167.7,384.6 169.0,373.9 170.4,391.9 171.8,409.3 173.9,387.9 176.1,402.9 177.7,417.2 179.3,432.9 181.4,392.1 183.6,402.9 185.7,420.0 187.4,396.4 188.7,375.8 190.0,352.5 192.1,402.9 194.3,392.1 196.1,389.3 197.9,382.7 199.6,377.1 201.8,397.5 203.9,383.3 206.1,371.8 207.7,384.3 209.3,399.6 211.4,383.6 213.6,394.3 215.7,387.6 217.8,378.2 220.0,417.9 222.1,398.6 224.3,393.8 226.4,390.0 228.6,396.4 230.7,385.7 232.8,385.0 235.0,390.0 237.1,409.3 239.3,387.9 241.4,400.7 243.6,399.1 245.7,394.3 247.3,380.6 248.9,367.5 251.1,430.7 253.2,375.0 255.3,398.6 257.0,393.3 258.6,392.1 260.7,397.8 262.8,409.3 264.1,413.3 265.4,420.0 267.1,394.3 269.3,394.7 271.4,400.7 273.6,394.3 275.7,396.4 277.8,380.4 279.5,398.6 281.1,413.6 283.2,402.9 284.8,388.3 286.4,379.3 288.6,398.6 290.2,383.7 291.8,369.6 293.4,382.2 295.0,396.4 297.1,379.3 299.3,392.1 301.4,409.3 303.6,380.4 305.7,388.7 307.8,396.4 310.0,398.2 312.1,400.7 314.3,392.1 316.4,380.6 318.6,375.0 320.2,373.9 321.8,368.6 323.9,375.0 325.5,382.1 327.1,392.1 329.3,392.2 331.4,396.4 333.6,385.7 335.2,397.3 336.8,407.1 338.9,381.4 340.5,395.0 342.1,413.6 343.7,419.1 345.3,426.4 346.9,405.3 348.6,385.7 350.7,424.3 352.3,408.9 353.9,394.3 356.1,409.3 358.2,398.4 360.3,381.4 361.9,395.8 363.6,407.1 365.7,387.9 367.3,387.7 368.9,390.0 371.1,405.0 373.2,385.7 375.0,389.0 376.8,389.0 378.6,387.9 380.3,395.3 382.1,404.5 383.9,414.6 385.5,408.5 387.1,407.1 389.3,391.6 391.4,377.1 393.0,382.1 394.6,381.4 396.2,388.1 397.8,396.4 400.0,387.9 401.7,422.1 403.2,396.4 405.4,390.0 406.9,394.3 408.2,386.4 409.6,379.3 411.8,390.0 413.2,395.9 414.6,396.4 416.1,392.1 417.7,391.8 419.3,385.7 421.4,405.0 423.6,400.7 425.7,390.0 427.3,383.1 428.9,379.3 431.1,394.3 433.2,396.4 434.3,405.0 436.0,427.5 437.3,401.5 438.6,372.9 440.7,398.6 442.3,390.3 443.9,387.9 446.1,409.3 447.7,410.7 449.3,416.8 450.9,398.1 452.5,379.3 454.6,394.3 456.2,410.4 457.9,425.4 459.5,404.4 461.1,385.7 462.7,398.4 464.3,415.7 466.2,398.1 468.1,383.6 469.4,393.4 470.7,398.6 472.6,384.2 474.6,367.5 476.4,396.9 478.2,420.0 479.9,405.3 481.5,392.6 483.1,379.3 484.4,396.1 485.7,408.2 487.6,402.1 489.6,394.3 491.1,408.7 492.6,425.4 494.0,410.1 495.4,394.3 497.5,401.4 499.6,413.6 501.2,404.9 502.8,392.1 504.5,396.8 506.1,405.0 508.2,402.9 509.8,405.1 511.4,407.1 513.6,413.6 515.2,395.5 516.8,377.1 518.4,384.3 520.0,394.3 522.1,402.9 524.3,390.0 526.2,400.1 528.1,405.0 529.6,411.4 531.2,396.5 532.8,382.5 535.0,413.6 536.4,403.6 537.8,387.9 539.6,403.1 541.4,414.6 543.6,400.1 545.7,385.7 547.8,405.0 549.5,391.2 551.1,383.6 552.5,383.4 553.8,388.9 555.5,396.9 557.1,400.7 558.3,393.7 559.6,387.9 561.2,396.8 562.8,411.4 565.0,387.9 566.3,383.1 567.6,381.4 569.0,391.8 570.3,405.0 572.0,410.0 573.6,409.3 575.7,391.1 577.3,392.0 578.9,387.9 581.1,400.7 583.2,396.4 584.8,397.7 586.4,402.9 588.6,395.4 590.7,407.1 592.8,415.7 594.8,391.2 596.7,371.8 598.5,395.3 600.3,417.9 602.5,396.4 604.6,405.0 606.8,407.1 608.9,401.2 611.1,392.1 613.2,400.7 614.8,394.9 616.4,387.9 618.6,387.9 620.7,400.7 622.3,403.3 623.9,400.7 625.5,411.0 627.1,415.7 629.3,398.4 631.4,380.4 633.0,397.3 634.6,409.3 636.8,409.3 638.9,397.9 641.1,388.9 642.7,398.7 644.3,405.0 646.4,391.1 647.7,403.7 649.0,420.0 650.9,395.1 652.8,372.9 654.4,389.6 656.1,409.3 658.2,400.7 660.3,413.6 662.5,400.7 664.6,415.7 666.2,399.6 667.8,386.8 669.1,394.9 670.4,409.3 671.8,404.6 673.2,398.6 675.3,394.3 676.9,393.4 678.6,387.9 680.7,390.0 682.3,390.6 683.9,394.3 685.5,403.1 687.1,407.1 688.7,397.0 690.3,387.9 692.5,409.3 694.0,380.4 695.4,386.2 696.8,396.4 698.9,415.7 700.0,368.6 702.1,387.9 703.9,405.0 706.0,424.3 707.5,396.8 709.0,375.0 710.7,405.0 712.4,402.9 714.6,403.9 715.9,399.1 717.1,395.4 718.7,403.8 720.4,409.3 721.7,402.7 723.1,396.4 725.3,407.1 727.4,421.1 728.7,410.0 730.0,396.4 732.1,393.2 734.3,405.0 736.4,394.3 737.7,395.9 739.0,392.1 740.7,413.6 742.9,390.0 744.1,402.6 745.4,415.7 746.8,411.8 748.2,409.3 750.4,398.7 752.5,390.0 754.6,395.4 756.8,400.7 758.4,401.3 760.0,396.4 762.1,387.5 764.3,384.6 765.6,389.9 766.9,398.6 769.0,411.4 770.4,401.8 771.8,397.5 773.9,401.8 775.5,398.5 777.1,394.3 778.7,399.4 780.4,407.1 782.0,405.3 783.6,400.7 785.7,393.3 787.9,391.1 789.5,397.1 791.1,409.3 792.1,398.6 794.3,402.9 795.9,406.3 797.5,407.1 799.6,399.4 801.8,387.9 803.4,396.7 805.0,407.1 806.3,399.1 807.6,394.3 809.3,405.0 810.9,392.8 812.5,383.6 814.1,396.4 815.7,409.3 817.3,398.4 818.9,390.0 820.5,402.1 822.1,411.4 824.3,398.6 826.4,411.4 828.6,402.9 830.2,403.6 831.8,402.9 833.4,396.9 835.0,396.4 837.1,394.2 839.3,396.4 841.4,411.4 843.6,408.0 845.7,398.6 847.8,402.9 850.0,394.3 851.6,404.3 853.2,414.6 855.0,403.8 856.8,390.0 858.8,405.3 860.7,424.3 862.8,390.0 864.5,407.5 866.1,423.2 867.7,415.7 869.3,402.9 871.4,385.7 873.0,395.6 874.6,411.4 876.8,398.6 878.4,395.4 880.0,396.4 882.1,405.0 884.3,394.3 886.4,400.7 888.6,421.1 889.8,404.2 891.1,390.0 892.5,401.7 893.9,415.7 896.1,407.1 898.2,392.1 899.8,395.3 901.4,400.7 903.0,401.2 904.6,400.7 906.2,406.0 907.8,405.0 910.0,397.1 912.1,391.1 913.7,395.0 915.3,405.0 916.9,398.1 918.6,396.4 920.2,411.8 921.8,428.6 923.2,417.5 924.6,405.0 925.8,396.2 927.1,382.5 928.4,387.2 929.7,396.4 931.4,380.4 933.6,396.4 935.7,385.7 937.8,398.6 940.0,387.9 941.4,382.1 942.8,378.2 944.1,399.4 945.3,420.0 947.5,385.7 949.6,402.9 951.8,392.1 953.4,395.4 955.0,394.3 957.1,402.9 959.3,396.4 961.4,394.3 963.6,383.6 965.2,379.3 966.8,373.9 968.9,383.6 971.1,402.9 972.4,400.7 973.8,392.1 975.1,402.3 976.4,409.3 978.0,406.3 979.6,409.3 981.8,387.9 983.4,395.9 985.0,398.6 987.1,387.9 988.7,393.1 990.3,392.1 991.9,395.4 993.6,400.7 995.2,397.4 996.8,392.1 998.4,396.9 1000.0,400.7 1002.1,399.6 1003.7,401.3 1005.4,397.5 1006.4,401.8 1008.0,396.9 1009.6,387.9 1011.8,391.1 1013.9,390.0 1015.4,396.4 1016.8,405.3 1018.2,409.3 1020.4,407.1 1022.1,388.9 1024.0,405.0 1025.4,394.5 1026.8,379.3 1028.9,398.6 1030.4,390.0 1032.6,411.4 1034.3,392.1 1036.0,398.6 1037.5,391.1 1039.6,388.9 1041.8,405.0 1043.9,396.4 1045.3,389.2 1046.7,382.5 1048.2,397.2 1049.7,409.3 1051.1,402.6 1052.5,390.0 1054.1,388.1 1055.7,388.9 1057.9,388.9 1060.0,397.5 1062.1,398.6 1064.3,396.4 1066.4,393.2 1067.7,388.1 1069.0,383.6 1070.4,385.6 1071.8,391.1 1073.9,386.8 1075.3,384.5 1076.7,381.4 1078.0,381.9 1079.3,385.7 1081.0,406.1 1082.3,403.5 1083.6,402.9 1085.7,396.4 1087.9,401.8 1089.5,397.4 1091.1,396.4 1092.7,394.2 1094.3,393.2 1095.9,392.6 1097.5,396.4 1099.6,387.9 1101.2,398.5 1102.8,402.9 1105.0,379.3 1107.1,398.6 1109.3,373.9 1110.9,379.5 1112.5,385.7 1114.1,395.6 1115.7,405.0 1117.8,390.0 1119.5,389.6 1121.1,385.7 1123.2,398.6 1124.8,405.6 1126.4,407.1 1128.6,392.1 1130.7,413.6 1132.3,403.3 1133.9,390.0 1136.1,398.6 1138.2,383.6 1139.8,393.7 1141.4,409.3 1143.0,401.7 1144.6,390.0 1146.2,400.0 1147.8,409.3 1149.5,402.2 1151.1,394.3 1152.9,406.5 1154.7,413.6 1156.1,403.3 1157.5,396.4 1159.1,400.2 1160.7,398.6 1162.8,394.3 1164.5,386.7 1166.1,382.5 1167.7,388.7 1169.3,390.0 1171.4,398.6 1172.7,391.4 1174.0,383.6 1175.4,391.1 1176.8,396.4 1178.9,385.7 1180.3,383.6 1181.7,381.4 1183.0,393.5 1184.3,406.1 1185.9,397.1 1187.5,383.6 1189.6,398.6 1191.8,384.6 1193.9,394.3 1196.1,390.0 1198.2,398.6 1199.8,395.0 1201.4,387.9 1203.0,383.8 1204.6,383.6 1206.8,394.3 1208.9,382.5 1210.5,388.3 1212.1,394.3 1213.7,385.7 1215.3,376.1 1217.5,378.2 1219.6,407.1 1221.8,387.9 1223.2,382.8 1224.6,375.0 1226.7,396.4 1228.8,383.6 1230.1,384.1 1231.4,383.6 1233.6,394.3 1235.7,402.9 1237.8,392.1 1240.0,386.8 1241.6,384.2 1243.2,387.9 1245.3,383.6 1247.5,392.1 1249.6,375.0 1251.8,392.1 1253.4,400.4 1255.0,406.1 1256.6,377.8 1258.2,354.6 1259.8,376.4 1261.4,392.1 1263.0,382.5 1264.6,377.1 1266.8,415.7 1268.9,400.7 1270.3,396.6 1271.7,386.8 1273.0,396.1 1274.3,405.0 1276.4,392.1 1278.0,397.0 1279.6,396.4 1281.2,392.6 1282.8,386.8 1285.0,396.4 1286.6,386.1 1288.2,369.6 1290.3,390.0 1292.5,398.6 1294.6,385.7 1296.8,390.0 1298.2,386.9 1299.6,390.0" stroke="#0000ff" stroke-width="1.3" fill="none" stroke-linejoin="round" clip-path="url(#pc)"/>
<rect x="101.4" y="348.5" width="1198.1" height="83.60000000000002" fill="none" stroke="#333" stroke-width="1"/>
<line x1="97.9" y1="421.1" x2="101.4" y2="421.1" stroke="#333" stroke-width="0.8"/>
<text x="95.00" y="424.70" font-size="10.4" font-family='"Liberation Sans", sans-serif' fill="#000" text-anchor="end" >0</text>
<line x1="97.9" y1="396.7" x2="101.4" y2="396.7" stroke="#333" stroke-width="0.8"/>
<text x="95.00" y="400.30" font-size="10.4" font-family='"Liberation Sans", sans-serif' fill="#000" text-anchor="end" >2</text>
<line x1="97.9" y1="372.3" x2="101.4" y2="372.3" stroke="#333" stroke-width="0.8"/>
<text x="95.00" y="375.90" font-size="10.4" font-family='"Liberation Sans", sans-serif' fill="#000" text-anchor="end" >4</text>
<line x1="109.8" y1="432.1" x2="109.8" y2="435.6" stroke="#333" stroke-width="0.8"/>
<text x="109.80" y="447.80" font-size="10.4" font-family='"Liberation Sans", sans-serif' fill="#000" text-anchor="middle" >3500</text>
<line x1="168.6" y1="432.1" x2="168.6" y2="435.6" stroke="#333" stroke-width="0.8"/>
<text x="168.64" y="447.80" font-size="10.4" font-family='"Liberation Sans", sans-serif' fill="#000" text-anchor="middle" >3600</text>
<line x1="227.5" y1="432.1" x2="227.5" y2="435.6" stroke="#333" stroke-width="0.8"/>
<text x="227.48" y="447.80" font-size="10.4" font-family='"Liberation Sans", sans-serif' fill="#000" text-anchor="middle" >3700</text>
<line x1="286.3" y1="432.1" x2="286.3" y2="435.6" stroke="#333" stroke-width="0.8"/>
<text x="286.32" y="447.80" font-size="10.4" font-family='"Liberation Sans", sans-serif' fill="#000" text-anchor="middle" >3800</text>
<line x1="345.2" y1="432.1" x2="345.2" y2="435.6" stroke="#333" stroke-width="0.8"/>
<text x="345.16" y="447.80" font-size="10.4" font-family='"Liberation Sans", sans-serif' fill="#000" text-anchor="middle" >3900</text>
<line x1="404.0" y1="432.1" x2="404.0" y2="435.6" stroke="#333" stroke-width="0.8"/>
<text x="404.00" y="447.80" font-size="10.4" font-family='"Liberation Sans", sans-serif' fill="#000" text-anchor="middle" >4000</text>
<line x1="462.8" y1="432.1" x2="462.8" y2="435.6" stroke="#333" stroke-width="0.8"/>
<text x="462.84" y="447.80" font-size="10.4" font-family='"Liberation Sans", sans-serif' fill="#000" text-anchor="middle" >4100</text>
<line x1="521.7" y1="432.1" x2="521.7" y2="435.6" stroke="#333" stroke-width="0.8"/>
<text x="521.68" y="447.80" font-size="10.4" font-family='"Liberation Sans", sans-serif' fill="#000" text-anchor="middle" >4200</text>
<line x1="580.5" y1="432.1" x2="580.5" y2="435.6" stroke="#333" stroke-width="0.8"/>
<text x="580.52" y="447.80" font-size="10.4" font-family='"Liberation Sans", sans-serif' fill="#000" text-anchor="middle" >4300</text>
<line x1="639.4" y1="432.1" x2="639.4" y2="435.6" stroke="#333" stroke-width="0.8"/>
<text x="639.36" y="447.80" font-size="10.4" font-family='"Liberation Sans", sans-serif' fill="#000" text-anchor="middle" >4400</text>
<line x1="698.2" y1="432.1" x2="698.2" y2="435.6" stroke="#333" stroke-width="0.8"/>
<text x="698.20" y="447.80" font-size="10.4" font-family='"Liberation Sans", sans-serif' fill="#000" text-anchor="middle" >4500</text>
<line x1="757.0" y1="432.1" x2="757.0" y2="435.6" stroke="#333" stroke-width="0.8"/>
<text x="757.04" y="447.80" font-size="10.4" font-family='"Liberation Sans", sans-serif' fill="#000" text-anchor="middle" >4600</text>
<line x1="815.9" y1="432.1" x2="815.9" y2="435.6" stroke="#333" stroke-width="0.8"/>
<text x="815.88" y="447.80" font-size="10.4" font-family='"Liberation Sans", sans-serif' fill="#000" text-anchor="middle" >4700</text>
<line x1="874.7" y1="432.1" x2="874.7" y2="435.6" stroke="#333" stroke-width="0.8"/>
<text x="874.72" y="447.80" font-size="10.4" font-family='"Liberation Sans", sans-serif' fill="#000" text-anchor="middle" >4800</text>
<line x1="933.6" y1="432.1" x2="933.6" y2="435.6" stroke="#333" stroke-width="0.8"/>
<text x="933.56" y="447.80" font-size="10.4" font-family='"Liberation Sans", sans-serif' fill="#000" text-anchor="middle" >4900</text>
<line x1="992.4" y1="432.1" x2="992.4" y2="435.6" stroke="#333" stroke-width="0.8"/>
<text x="992.40" y="447.80" font-size="10.4" font-family='"Liberation Sans", sans-serif' fill="#000" text-anchor="middle" >5000</text>
<line x1="1051.2" y1="432.1" x2="1051.2" y2="435.6" stroke="#333" stroke-width="0.8"/>
<text x="1051.24" y="447.80" font-size="10.4" font-family='"Liberation Sans", sans-serif' fill="#000" text-anchor="middle" >5100</text>
<line x1="1110.1" y1="432.1" x2="1110.1" y2="435.6" stroke="#333" stroke-width="0.8"/>
<text x="1110.08" y="447.80" font-size="10.4" font-family='"Liberation Sans", sans-serif' fill="#000" text-anchor="middle" >5200</text>
<line x1="1168.9" y1="432.1" x2="1168.9" y2="435.6" stroke="#333" stroke-width="0.8"/>
<text x="1168.92" y="447.80" font-size="10.4" font-family='"Liberation Sans", sans-serif' fill="#000" text-anchor="middle" >5300</text>
<line x1="1227.8" y1="432.1" x2="1227.8" y2="435.6" stroke="#333" stroke-width="0.8"/>
<text x="1227.76" y="447.80" font-size="10.4" font-family='"Liberation Sans", sans-serif' fill="#000" text-anchor="middle" >5400</text>
<line x1="1286.6" y1="432.1" x2="1286.6" y2="435.6" stroke="#333" stroke-width="0.8"/>
<text x="1286.60" y="447.80" font-size="10.4" font-family='"Liberation Sans", sans-serif' fill="#000" text-anchor="middle" >5500</text>
<text x="110.10" y="346.20" font-size="10.4" font-family='"Liberation Sans", sans-serif' fill="#000" text-anchor="start" textLength="38.5" lengthAdjust="spacingAndGlyphs" >e<tspan font-size="7.2" dy="-4.3">−17</tspan><tspan dy="4.3">x2</tspan><tspan font-style="italic">Å</tspan></text>
<text x="0" y="0" font-size="10.4" font-family='"Liberation Sans", sans-serif' fill="#ff00ff" text-anchor="middle" transform="translate(126.8,329.2) rotate(90)">CII</text>
<text x="0" y="0" font-size="10.4" font-family='"Liberation Sans", sans-serif' fill="#ff00ff" text-anchor="middle" transform="translate(126.8,346.5) rotate(90)">{</text>
<text x="0" y="0" font-size="10.4" font-family='"Liberation Sans", sans-serif' fill="#ff0000" text-anchor="middle" transform="translate(178.8,329.2) rotate(90)">OVI</text>
<text x="0" y="0" font-size="10.4" font-family='"Liberation Sans", sans-serif' fill="#ff0000" text-anchor="middle" transform="translate(178.8,346.5) rotate(90)">{</text>
<text x="0" y="0" font-size="10.4" font-family='"Liberation Sans", sans-serif' fill="#800080" text-anchor="middle" transform="translate(199.2,329.2) rotate(90)">HeII</text>
<text x="0" y="0" font-size="10.4" font-family='"Liberation Sans", sans-serif' fill="#800080" text-anchor="middle" transform="translate(199.2,346.5) rotate(90)">{</text>
<text x="0" y="0" font-size="10.4" font-family='"Liberation Sans", sans-serif' fill="#ffa500" text-anchor="middle" transform="translate(181.2,289) rotate(90)">SiIV</text>
<text x="0" y="0" font-size="10.4" font-family='"Liberation Sans", sans-serif' fill="#ffa500" text-anchor="middle" transform="translate(181.2,304.5) rotate(90)">{</text>
<text x="0" y="0" font-size="10.4" font-family='"Liberation Sans", sans-serif' fill="#8a2be2" text-anchor="middle" transform="translate(305.8,329.2) rotate(90)">SiIV</text>
<text x="0" y="0" font-size="10.4" font-family='"Liberation Sans", sans-serif' fill="#8a2be2" text-anchor="middle" transform="translate(305.8,346.5) rotate(90)">{</text>
<text x="0" y="0" font-size="10.4" font-family='"Liberation Sans", sans-serif' fill="#87ceeb" text-anchor="middle" transform="translate(399.4,329.2) rotate(90)">OII</text>
<text x="0" y="0" font-size="10.4" font-family='"Liberation Sans", sans-serif' fill="#87ceeb" text-anchor="middle" transform="translate(399.4,346.5) rotate(90)">{</text>
<text x="0" y="0" font-size="10.4" font-family='"Liberation Sans", sans-serif' fill="#ffa500" text-anchor="middle" transform="translate(412.3,329.2) rotate(90)">CIV</text>
<text x="0" y="0" font-size="10.4" font-family='"Liberation Sans", sans-serif' fill="#ffa500" text-anchor="middle" transform="translate(412.3,346.5) rotate(90)">{</text>
<text x="0" y="0" font-size="10.4" font-family='"Liberation Sans", sans-serif' fill="#87ceeb" text-anchor="middle" transform="translate(420.5,329.2) rotate(90)">OII</text>
<text x="0" y="0" font-size="10.4" font-family='"Liberation Sans", sans-serif' fill="#87ceeb" text-anchor="middle" transform="translate(420.5,346.5) rotate(90)">{</text>
<text x="0" y="0" font-size="10.4" font-family='"Liberation Sans", sans-serif' fill="#ff0000" text-anchor="middle" transform="translate(602.6,329.2) rotate(90)">NV</text>
<text x="0" y="0" font-size="10.4" font-family='"Liberation Sans", sans-serif' fill="#ff0000" text-anchor="middle" transform="translate(602.6,346.5) rotate(90)">{</text>
<text x="0" y="0" font-size="10.4" font-family='"Liberation Sans", sans-serif' fill="#ff0000" text-anchor="middle" transform="translate(649.3,329.2) rotate(90)">SiII</text>
<text x="0" y="0" font-size="10.4" font-family='"Liberation Sans", sans-serif' fill="#ff0000" text-anchor="middle" transform="translate(649.3,346.5) rotate(90)">{</text>
<text x="0" y="0" font-size="10.4" font-family='"Liberation Sans", sans-serif' fill="#8a2be2" text-anchor="middle" transform="translate(697.7,329.2) rotate(90)">HeII</text>
<text x="0" y="0" font-size="10.4" font-family='"Liberation Sans", sans-serif' fill="#8a2be2" text-anchor="middle" transform="translate(697.7,346.5) rotate(90)">{</text>
<text x="0" y="0" font-size="10.4" font-family='"Liberation Sans", sans-serif' fill="#87ceeb" text-anchor="middle" transform="translate(785.5,329.2) rotate(90)">Hγ</text>
<text x="0" y="0" font-size="10.4" font-family='"Liberation Sans", sans-serif' fill="#87ceeb" text-anchor="middle" transform="translate(785.5,346.5) rotate(90)">{</text>
<text x="0" y="0" font-size="10.4" font-family='"Liberation Sans", sans-serif' fill="#87ceeb" text-anchor="middle" transform="translate(809.7,329.2) rotate(90)">Hγ</text>
<text x="0" y="0" font-size="10.4" font-family='"Liberation Sans", sans-serif' fill="#87ceeb" text-anchor="middle" transform="translate(809.7,346.5) rotate(90)">{</text>
<text x="0" y="0" font-size="10.4" font-family='"Liberation Sans", sans-serif' fill="#ff0000" text-anchor="middle" transform="translate(926.1,329.2) rotate(90)">SiIV</text>
<text x="0" y="0" font-size="10.4" font-family='"Liberation Sans", sans-serif' fill="#ff0000" text-anchor="middle" transform="translate(926.1,346.5) rotate(90)">{</text>
<text x="0" y="0" font-size="10.4" font-family='"Liberation Sans", sans-serif' fill="#008000" text-anchor="middle" transform="translate(961.9,329.2) rotate(90)">Hγ</text>
<text x="0" y="0" font-size="10.4" font-family='"Liberation Sans", sans-serif' fill="#008000" text-anchor="middle" transform="translate(961.9,346.5) rotate(90)">{</text>
<text x="0" y="0" font-size="10.4" font-family='"Liberation Sans", sans-serif' fill="#ffa500" text-anchor="middle" transform="translate(960.1,289) rotate(90)">CIII</text>
<text x="0" y="0" font-size="10.4" font-family='"Liberation Sans", sans-serif' fill="#ffa500" text-anchor="middle" transform="translate(960.1,304.5) rotate(90)">{</text>
<text x="0" y="0" font-size="10.4" font-family='"Liberation Sans", sans-serif' fill="#800080" text-anchor="middle" transform="translate(1095.9,329.2) rotate(90)">CII</text>
<text x="0" y="0" font-size="10.4" font-family='"Liberation Sans", sans-serif' fill="#800080" text-anchor="middle" transform="translate(1095.9,346.5) rotate(90)">{</text>
<text x="0" y="0" font-size="10.4" font-family='"Liberation Sans", sans-serif' fill="#87ceeb" text-anchor="middle" transform="translate(1114.2,329.2) rotate(90)">Hβ</text>
<text x="0" y="0" font-size="10.4" font-family='"Liberation Sans", sans-serif' fill="#87ceeb" text-anchor="middle" transform="translate(1114.2,346.5) rotate(90)">{</text>
<text x="0" y="0" font-size="10.4" font-family='"Liberation Sans", sans-serif' fill="#8a2be2" text-anchor="middle" transform="translate(1132.0,329.2) rotate(90)">CIII</text>
<text x="0" y="0" font-size="10.4" font-family='"Liberation Sans", sans-serif' fill="#8a2be2" text-anchor="middle" transform="translate(1132.0,346.5) rotate(90)">{</text>
<text x="0" y="0" font-size="10.4" font-family='"Liberation Sans", sans-serif' fill="#87ceeb" text-anchor="middle" transform="translate(1142.0,329.2) rotate(90)">Hβ</text>
<text x="0" y="0" font-size="10.4" font-family='"Liberation Sans", sans-serif' fill="#87ceeb" text-anchor="middle" transform="translate(1142.0,346.5) rotate(90)">{</text>
<text x="0" y="0" font-size="10.4" font-family='"Liberation Sans", sans-serif' fill="#87ceeb" text-anchor="middle" transform="translate(1176.3,329.2) rotate(90)">OIII</text>
<text x="0" y="0" font-size="10.4" font-family='"Liberation Sans", sans-serif' fill="#87ceeb" text-anchor="middle" transform="translate(1176.3,346.5) rotate(90)">{</text>
<text x="0" y="0" font-size="10.4" font-family='"Liberation Sans", sans-serif' fill="#87ceeb" text-anchor="middle" transform="translate(1203.9,329.2) rotate(90)">OIII</text>
<text x="0" y="0" font-size="10.4" font-family='"Liberation Sans", sans-serif' fill="#87ceeb" text-anchor="middle" transform="translate(1203.9,346.5) rotate(90)">{</text>
<text x="0" y="0" font-size="10.4" font-family='"Liberation Sans", sans-serif' fill="#ff0000" text-anchor="middle" transform="translate(1238.7,329.2) rotate(90)">CIV</text>
<text x="0" y="0" font-size="10.4" font-family='"Liberation Sans", sans-serif' fill="#ff0000" text-anchor="middle" transform="translate(1238.7,346.5) rotate(90)">{</text>
<text x="0" y="0" font-size="10.4" font-family='"Liberation Sans", sans-serif' fill="#87ceeb" text-anchor="middle" transform="translate(1206.3,289) rotate(90)">OIII</text>
<text x="0" y="0" font-size="10.4" font-family='"Liberation Sans", sans-serif' fill="#87ceeb" text-anchor="middle" transform="translate(1206.3,304.5) rotate(90)">{</text>
<text x="0" y="0" font-size="10.4" font-family='"Liberation Sans", sans-serif' fill="#87ceeb" text-anchor="middle" transform="translate(1234.3,289) rotate(90)">OIII</text>
<text x="0" y="0" font-size="10.4" font-family='"Liberation Sans", sans-serif' fill="#87ceeb" text-anchor="middle" transform="translate(1234.3,304.5) rotate(90)">{</text>
<rect x="479.9" y="450" width="17" height="6.6" fill="#ff0000"/>
<text x="503.40" y="456.80" font-size="8.4" font-family='"Liberation Sans", sans-serif' fill="#222" text-anchor="start" >Ly<tspan font-style="italic">α</tspan></text>
<rect x="533.9" y="450" width="17" height="6.6" fill="#008000"/>
<text x="557.00" y="456.80" font-size="8.4" font-family='"Liberation Sans", sans-serif' fill="#222" text-anchor="start" >OII</text>
<rect x="586.5" y="450" width="17" height="6.6" fill="#8a2be2"/>
<text x="610.00" y="456.80" font-size="8.4" font-family='"Liberation Sans", sans-serif' fill="#222" text-anchor="start" >CIV</text>
<rect x="641.2" y="450" width="17" height="6.6" fill="#800080"/>
<text x="665.00" y="456.80" font-size="8.4" font-family='"Liberation Sans", sans-serif' fill="#222" text-anchor="start" >CIII</text>
<rect x="693" y="450" width="17" height="6.6" fill="#ff00ff"/>
<text x="716.00" y="456.80" font-size="8.4" font-family='"Liberation Sans", sans-serif' fill="#222" text-anchor="start" >MgII</text>
<rect x="749" y="450" width="17" height="6.6" fill="#ffa500"/>
<text x="772.00" y="456.80" font-size="8.4" font-family='"Liberation Sans", sans-serif' fill="#222" text-anchor="start" >HeII</text>
<rect x="802.8" y="450" width="17" height="6.6" fill="#87ceeb"/>
<text x="826.00" y="456.80" font-size="8.4" font-family='"Liberation Sans", sans-serif' fill="#222" text-anchor="start" >(K)CaII</text>
<rect x="869.7" y="450" width="17" height="6.6" fill="#87ceeb"/>
<text x="893.00" y="456.80" font-size="8.4" font-family='"Liberation Sans", sans-serif' fill="#222" text-anchor="start" >(H)CaII</text>
<text x="70.70" y="498.60" font-size="12.95" font-family='"Liberation Mono", monospace' fill="#000" text-anchor="start" xml:space="preserve">HSC-DEX : Possible Matches = 1 (within +/- 3")  P(LAE)/P(OII):</text>
<text x="562.30" y="498.60" font-size="12.9" font-family='"Liberation Sans", sans-serif' fill="#000" text-anchor="start" textLength="33.1" lengthAdjust="spacingAndGlyphs" >0.291</text>
<text x="601.80" y="493.30" font-size="9.4" font-family='"Liberation Sans", sans-serif' fill="#000" text-anchor="start" textLength="25.6" lengthAdjust="spacingAndGlyphs" >0.514</text>
<text x="601.80" y="501.70" font-size="9.4" font-family='"Liberation Sans", sans-serif' fill="#000" text-anchor="start" textLength="25.6" lengthAdjust="spacingAndGlyphs" >0.176</text>
<text x="637.70" y="498.60" font-size="12.95" font-family='"Liberation Mono", monospace' fill="#000" text-anchor="start" >(r)</text>
<clipPath id="cpfib"><rect x="70.3" y="532.7" width="147.8" height="147.3"/></clipPath><g clip-path="url(#cpfib)">
<path d="M70.30,532.70h7.32v3.95h-7.32zM80.38,532.70h3.96v3.95h-3.96zM87.10,532.70h3.96v3.95h-3.96zM93.81,532.70h7.32v3.95h-7.32zM113.97,532.70h3.96v3.95h-3.96zM120.69,532.70h7.32v3.95h-7.32zM134.12,532.70h3.96v3.95h-3.96zM144.20,532.70h3.96v3.95h-3.96zM167.71,532.70h10.68v3.95h-10.68zM184.51,532.70h3.96v3.95h-3.96zM194.59,532.70h3.96v3.95h-3.96zM208.02,532.70h3.96v3.95h-3.96zM214.74,532.70h3.96v3.95h-3.96zM70.30,536.05h3.96v3.95h-3.96zM77.02,536.05h3.96v3.95h-3.96zM83.74,536.05h7.32v3.95h-7.32zM103.89,536.05h10.68v3.95h-10.68zM124.05,536.05h3.96v3.95h-3.96zM134.12,536.05h3.96v3.95h-3.96zM144.20,536.05h10.68v3.95h-10.68zM171.07,536.05h3.96v3.95h-3.96zM181.15,536.05h3.96v3.95h-3.96zM187.87,536.05h20.75v3.95h-20.75zM211.38,536.05h3.96v3.95h-3.96zM73.66,539.40h3.96v3.95h-3.96zM90.45,539.40h3.96v3.95h-3.96zM97.17,539.40h3.96v3.95h-3.96zM117.33,539.40h3.96v3.95h-3.96zM127.40,539.40h3.96v3.95h-3.96zM137.48,539.40h14.04v3.95h-14.04zM204.66,539.40h7.32v3.95h-7.32zM214.74,539.40h3.96v3.95h-3.96zM73.66,542.74h7.32v3.95h-7.32zM87.10,542.74h3.96v3.95h-3.96zM93.81,542.74h3.96v3.95h-3.96zM100.53,542.74h3.96v3.95h-3.96zM120.69,542.74h3.96v3.95h-3.96zM127.40,542.74h10.68v3.95h-10.68zM144.20,542.74h7.32v3.95h-7.32zM157.64,542.74h3.96v3.95h-3.96zM164.35,542.74h3.96v3.95h-3.96zM171.07,542.74h7.32v3.95h-7.32zM181.15,542.74h7.32v3.95h-7.32zM197.95,542.74h3.96v3.95h-3.96zM204.66,542.74h3.96v3.95h-3.96zM214.74,542.74h3.96v3.95h-3.96zM73.66,546.09h3.96v3.95h-3.96zM87.10,546.09h10.68v3.95h-10.68zM103.89,546.09h3.96v3.95h-3.96zM117.33,546.09h10.68v3.95h-10.68zM130.76,546.09h3.96v3.95h-3.96zM140.84,546.09h3.96v3.95h-3.96zM147.56,546.09h3.96v3.95h-3.96zM154.28,546.09h3.96v3.95h-3.96zM161.00,546.09h7.32v3.95h-7.32zM177.79,546.09h3.96v3.95h-3.96zM187.87,546.09h10.68v3.95h-10.68zM208.02,546.09h7.32v3.95h-7.32zM70.30,549.44h3.96v3.95h-3.96zM77.02,549.44h3.96v3.95h-3.96zM87.10,549.44h3.96v3.95h-3.96zM93.81,549.44h7.32v3.95h-7.32zM107.25,549.44h7.32v3.95h-7.32zM127.40,549.44h3.96v3.95h-3.96zM144.20,549.44h10.68v3.95h-10.68zM157.64,549.44h3.96v3.95h-3.96zM164.35,549.44h3.96v3.95h-3.96zM181.15,549.44h3.96v3.95h-3.96zM187.87,549.44h7.32v3.95h-7.32zM201.30,549.44h3.96v3.95h-3.96zM208.02,549.44h3.96v3.95h-3.96zM70.30,552.79h3.96v3.95h-3.96zM83.74,552.79h3.96v3.95h-3.96zM93.81,552.79h7.32v3.95h-7.32zM110.61,552.79h3.96v3.95h-3.96zM117.33,552.79h3.96v3.95h-3.96zM127.40,552.79h14.04v3.95h-14.04zM144.20,552.79h3.96v3.95h-3.96zM150.92,552.79h3.96v3.95h-3.96zM161.00,552.79h10.68v3.95h-10.68zM174.43,552.79h3.96v3.95h-3.96zM187.87,552.79h3.96v3.95h-3.96zM194.59,552.79h3.96v3.95h-3.96zM208.02,552.79h7.32v3.95h-7.32zM70.30,556.13h10.68v3.95h-10.68zM93.81,556.13h3.96v3.95h-3.96zM100.53,556.13h3.96v3.95h-3.96zM107.25,556.13h3.96v3.95h-3.96zM120.69,556.13h10.68v3.95h-10.68zM134.12,556.13h3.96v3.95h-3.96zM140.84,556.13h3.96v3.95h-3.96zM147.56,556.13h3.96v3.95h-3.96zM157.64,556.13h7.32v3.95h-7.32zM181.15,556.13h10.68v3.95h-10.68zM204.66,556.13h10.68v3.95h-10.68zM70.30,559.48h3.96v3.95h-3.96zM80.38,559.48h7.32v3.95h-7.32zM93.81,559.48h10.68v3.95h-10.68zM113.97,559.48h3.96v3.95h-3.96zM124.05,559.48h3.96v3.95h-3.96zM130.76,559.48h7.32v3.95h-7.32zM140.84,559.48h3.96v3.95h-3.96zM147.56,559.48h10.68v3.95h-10.68zM161.00,559.48h3.96v3.95h-3.96zM174.43,559.48h3.96v3.95h-3.96zM184.51,559.48h10.68v3.95h-10.68zM197.95,559.48h3.96v3.95h-3.96zM214.74,559.48h3.96v3.95h-3.96zM70.30,562.83h3.96v3.95h-3.96zM77.02,562.83h3.96v3.95h-3.96zM83.74,562.83h7.32v3.95h-7.32zM100.53,562.83h7.32v3.95h-7.32zM110.61,562.83h3.96v3.95h-3.96zM117.33,562.83h3.96v3.95h-3.96zM124.05,562.83h3.96v3.95h-3.96zM140.84,562.83h7.32v3.95h-7.32zM150.92,562.83h3.96v3.95h-3.96zM161.00,562.83h3.96v3.95h-3.96zM177.79,562.83h7.32v3.95h-7.32zM187.87,562.83h10.68v3.95h-10.68zM204.66,562.83h14.04v3.95h-14.04zM73.66,566.18h3.96v3.95h-3.96zM80.38,566.18h10.68v3.95h-10.68zM93.81,566.18h7.32v3.95h-7.32zM113.97,566.18h3.96v3.95h-3.96zM124.05,566.18h3.96v3.95h-3.96zM130.76,566.18h3.96v3.95h-3.96zM144.20,566.18h3.96v3.95h-3.96zM150.92,566.18h7.32v3.95h-7.32zM164.35,566.18h3.96v3.95h-3.96zM174.43,566.18h7.32v3.95h-7.32zM197.95,566.18h7.32v3.95h-7.32zM70.30,569.53h3.96v3.95h-3.96zM83.74,569.53h3.96v3.95h-3.96zM90.45,569.53h7.32v3.95h-7.32zM100.53,569.53h3.96v3.95h-3.96zM107.25,569.53h3.96v3.95h-3.96zM113.97,569.53h3.96v3.95h-3.96zM127.40,569.53h14.04v3.95h-14.04zM144.20,569.53h3.96v3.95h-3.96zM161.00,569.53h3.96v3.95h-3.96zM174.43,569.53h10.68v3.95h-10.68zM191.23,569.53h3.96v3.95h-3.96zM204.66,569.53h3.96v3.95h-3.96zM211.38,569.53h7.32v3.95h-7.32zM80.38,572.87h7.32v3.95h-7.32zM90.45,572.87h3.96v3.95h-3.96zM97.17,572.87h3.96v3.95h-3.96zM107.25,572.87h7.32v3.95h-7.32zM120.69,572.87h10.68v3.95h-10.68zM134.12,572.87h3.96v3.95h-3.96zM140.84,572.87h3.96v3.95h-3.96zM171.07,572.87h3.96v3.95h-3.96zM181.15,572.87h3.96v3.95h-3.96zM187.87,572.87h7.32v3.95h-7.32zM197.95,572.87h3.96v3.95h-3.96zM211.38,572.87h7.32v3.95h-7.32zM70.30,576.22h34.19v3.95h-34.19zM110.61,576.22h7.32v3.95h-7.32zM120.69,576.22h3.96v3.95h-3.96zM127.40,576.22h3.96v3.95h-3.96zM191.23,576.22h3.96v3.95h-3.96zM214.74,576.22h3.96v3.95h-3.96zM70.30,579.57h3.96v3.95h-3.96zM77.02,579.57h27.47v3.95h-27.47zM110.61,579.57h3.96v3.95h-3.96zM117.33,579.57h3.96v3.95h-3.96zM130.76,579.57h3.96v3.95h-3.96zM177.79,579.57h10.68v3.95h-10.68zM191.23,579.57h3.96v3.95h-3.96zM197.95,579.57h3.96v3.95h-3.96zM204.66,579.57h14.04v3.95h-14.04zM73.66,582.92h3.96v3.95h-3.96zM80.38,582.92h7.32v3.95h-7.32zM90.45,582.92h3.96v3.95h-3.96zM97.17,582.92h10.68v3.95h-10.68zM110.61,582.92h3.96v3.95h-3.96zM117.33,582.92h14.04v3.95h-14.04zM197.95,582.92h7.32v3.95h-7.32zM208.02,582.92h10.68v3.95h-10.68zM73.66,586.26h3.96v3.95h-3.96zM93.81,586.26h3.96v3.95h-3.96zM103.89,586.26h3.96v3.95h-3.96zM110.61,586.26h7.32v3.95h-7.32zM127.40,586.26h3.96v3.95h-3.96zM181.15,586.26h3.96v3.95h-3.96zM201.30,586.26h3.96v3.95h-3.96zM211.38,586.26h7.32v3.95h-7.32zM77.02,589.61h3.96v3.95h-3.96zM87.10,589.61h3.96v3.95h-3.96zM110.61,589.61h3.96v3.95h-3.96zM117.33,589.61h10.68v3.95h-10.68zM204.66,589.61h3.96v3.95h-3.96zM214.74,589.61h3.96v3.95h-3.96zM73.66,592.96h14.04v3.95h-14.04zM90.45,592.96h7.32v3.95h-7.32zM107.25,592.96h7.32v3.95h-7.32zM117.33,592.96h10.68v3.95h-10.68zM184.51,592.96h3.96v3.95h-3.96zM197.95,592.96h10.68v3.95h-10.68zM211.38,592.96h7.32v3.95h-7.32zM80.38,596.31h3.96v3.95h-3.96zM90.45,596.31h3.96v3.95h-3.96zM97.17,596.31h10.68v3.95h-10.68zM113.97,596.31h7.32v3.95h-7.32zM124.05,596.31h3.96v3.95h-3.96zM187.87,596.31h3.96v3.95h-3.96zM194.59,596.31h7.32v3.95h-7.32zM214.74,596.31h3.96v3.95h-3.96zM77.02,599.65h3.96v3.95h-3.96zM83.74,599.65h3.96v3.95h-3.96zM90.45,599.65h14.04v3.95h-14.04zM107.25,599.65h3.96v3.95h-3.96zM113.97,599.65h10.68v3.95h-10.68zM187.87,599.65h3.96v3.95h-3.96zM194.59,599.65h10.68v3.95h-10.68zM211.38,599.65h3.96v3.95h-3.96zM73.66,603.00h10.68v3.95h-10.68zM87.10,603.00h7.32v3.95h-7.32zM97.17,603.00h3.96v3.95h-3.96zM187.87,603.00h7.32v3.95h-7.32zM204.66,603.00h10.68v3.95h-10.68zM73.66,606.35h7.32v3.95h-7.32zM100.53,606.35h3.96v3.95h-3.96zM113.97,606.35h3.96v3.95h-3.96zM120.69,606.35h3.96v3.95h-3.96zM187.87,606.35h3.96v3.95h-3.96zM70.30,609.70h3.96v3.95h-3.96zM77.02,609.70h3.96v3.95h-3.96zM87.10,609.70h3.96v3.95h-3.96zM97.17,609.70h3.96v3.95h-3.96zM103.89,609.70h3.96v3.95h-3.96zM113.97,609.70h10.68v3.95h-10.68zM127.40,609.70h3.96v3.95h-3.96zM187.87,609.70h7.32v3.95h-7.32zM197.95,609.70h7.32v3.95h-7.32zM70.30,613.05h3.96v3.95h-3.96zM77.02,613.05h3.96v3.95h-3.96zM87.10,613.05h3.96v3.95h-3.96zM93.81,613.05h14.04v3.95h-14.04zM124.05,613.05h3.96v3.95h-3.96zM194.59,613.05h7.32v3.95h-7.32zM204.66,613.05h14.04v3.95h-14.04zM73.66,616.39h3.96v3.95h-3.96zM80.38,616.39h14.04v3.95h-14.04zM113.97,616.39h10.68v3.95h-10.68zM127.40,616.39h7.32v3.95h-7.32zM184.51,616.39h7.32v3.95h-7.32zM197.95,616.39h3.96v3.95h-3.96zM214.74,616.39h3.96v3.95h-3.96zM70.30,619.74h3.96v3.95h-3.96zM87.10,619.74h7.32v3.95h-7.32zM97.17,619.74h7.32v3.95h-7.32zM107.25,619.74h30.83v3.95h-30.83zM187.87,619.74h3.96v3.95h-3.96zM197.95,619.74h7.32v3.95h-7.32zM208.02,619.74h3.96v3.95h-3.96zM80.38,623.09h3.96v3.95h-3.96zM93.81,623.09h3.96v3.95h-3.96zM107.25,623.09h7.32v3.95h-7.32zM120.69,623.09h3.96v3.95h-3.96zM140.84,623.09h3.96v3.95h-3.96zM161.00,623.09h3.96v3.95h-3.96zM194.59,623.09h7.32v3.95h-7.32zM204.66,623.09h7.32v3.95h-7.32zM214.74,623.09h3.96v3.95h-3.96zM73.66,626.44h3.96v3.95h-3.96zM80.38,626.44h7.32v3.95h-7.32zM93.81,626.44h3.96v3.95h-3.96zM100.53,626.44h3.96v3.95h-3.96zM107.25,626.44h3.96v3.95h-3.96zM120.69,626.44h10.68v3.95h-10.68zM137.48,626.44h7.32v3.95h-7.32zM154.28,626.44h7.32v3.95h-7.32zM191.23,626.44h3.96v3.95h-3.96zM197.95,626.44h10.68v3.95h-10.68zM77.02,629.78h3.96v3.95h-3.96zM87.10,629.78h7.32v3.95h-7.32zM124.05,629.78h3.96v3.95h-3.96zM134.12,629.78h7.32v3.95h-7.32zM154.28,629.78h10.68v3.95h-10.68zM197.95,629.78h3.96v3.95h-3.96zM211.38,629.78h3.96v3.95h-3.96zM70.30,633.13h7.32v3.95h-7.32zM80.38,633.13h3.96v3.95h-3.96zM93.81,633.13h3.96v3.95h-3.96zM100.53,633.13h7.32v3.95h-7.32zM117.33,633.13h10.68v3.95h-10.68zM134.12,633.13h3.96v3.95h-3.96zM144.20,633.13h3.96v3.95h-3.96zM154.28,633.13h14.04v3.95h-14.04zM208.02,633.13h10.68v3.95h-10.68zM83.74,636.48h14.04v3.95h-14.04zM100.53,636.48h10.68v3.95h-10.68zM117.33,636.48h3.96v3.95h-3.96zM124.05,636.48h17.40v3.95h-17.40zM150.92,636.48h3.96v3.95h-3.96zM157.64,636.48h14.04v3.95h-14.04zM181.15,636.48h7.32v3.95h-7.32zM214.74,636.48h3.96v3.95h-3.96zM70.30,639.83h3.96v3.95h-3.96zM80.38,639.83h3.96v3.95h-3.96zM87.10,639.83h3.96v3.95h-3.96zM103.89,639.83h3.96v3.95h-3.96zM110.61,639.83h7.32v3.95h-7.32zM120.69,639.83h3.96v3.95h-3.96zM130.76,639.83h7.32v3.95h-7.32zM147.56,639.83h3.96v3.95h-3.96zM154.28,639.83h3.96v3.95h-3.96zM164.35,639.83h3.96v3.95h-3.96zM171.07,639.83h3.96v3.95h-3.96zM177.79,639.83h14.04v3.95h-14.04zM197.95,639.83h10.68v3.95h-10.68zM70.30,643.17h10.68v3.95h-10.68zM83.74,643.17h3.96v3.95h-3.96zM103.89,643.17h7.32v3.95h-7.32zM117.33,643.17h10.68v3.95h-10.68zM134.12,643.17h3.96v3.95h-3.96zM144.20,643.17h7.32v3.95h-7.32zM161.00,643.17h7.32v3.95h-7.32zM171.07,643.17h3.96v3.95h-3.96zM181.15,643.17h3.96v3.95h-3.96zM201.30,643.17h17.40v3.95h-17.40zM70.30,646.52h14.04v3.95h-14.04zM87.10,646.52h3.96v3.95h-3.96zM100.53,646.52h10.68v3.95h-10.68zM117.33,646.52h3.96v3.95h-3.96zM127.40,646.52h3.96v3.95h-3.96zM137.48,646.52h3.96v3.95h-3.96zM150.92,646.52h3.96v3.95h-3.96zM157.64,646.52h3.96v3.95h-3.96zM167.71,646.52h7.32v3.95h-7.32zM177.79,646.52h3.96v3.95h-3.96zM184.51,646.52h3.96v3.95h-3.96zM197.95,646.52h7.32v3.95h-7.32zM73.66,649.87h3.96v3.95h-3.96zM87.10,649.87h3.96v3.95h-3.96zM100.53,649.87h3.96v3.95h-3.96zM110.61,649.87h3.96v3.95h-3.96zM120.69,649.87h10.68v3.95h-10.68zM134.12,649.87h3.96v3.95h-3.96zM147.56,649.87h14.04v3.95h-14.04zM171.07,649.87h7.32v3.95h-7.32zM201.30,649.87h7.32v3.95h-7.32zM70.30,653.22h7.32v3.95h-7.32zM83.74,653.22h3.96v3.95h-3.96zM93.81,653.22h3.96v3.95h-3.96zM103.89,653.22h3.96v3.95h-3.96zM110.61,653.22h3.96v3.95h-3.96zM134.12,653.22h3.96v3.95h-3.96zM144.20,653.22h3.96v3.95h-3.96zM154.28,653.22h7.32v3.95h-7.32zM167.71,653.22h3.96v3.95h-3.96zM174.43,653.22h3.96v3.95h-3.96zM208.02,653.22h3.96v3.95h-3.96zM80.38,656.57h7.32v3.95h-7.32zM93.81,656.57h3.96v3.95h-3.96zM100.53,656.57h3.96v3.95h-3.96zM107.25,656.57h3.96v3.95h-3.96zM117.33,656.57h7.32v3.95h-7.32zM127.40,656.57h7.32v3.95h-7.32zM137.48,656.57h3.96v3.95h-3.96zM147.56,656.57h3.96v3.95h-3.96zM154.28,656.57h3.96v3.95h-3.96zM171.07,656.57h3.96v3.95h-3.96zM208.02,656.57h3.96v3.95h-3.96zM214.74,656.57h3.96v3.95h-3.96zM80.38,659.91h3.96v3.95h-3.96zM90.45,659.91h3.96v3.95h-3.96zM100.53,659.91h3.96v3.95h-3.96zM107.25,659.91h3.96v3.95h-3.96zM113.97,659.91h10.68v3.95h-10.68zM140.84,659.91h3.96v3.95h-3.96zM147.56,659.91h7.32v3.95h-7.32zM161.00,659.91h3.96v3.95h-3.96zM167.71,659.91h7.32v3.95h-7.32zM177.79,659.91h3.96v3.95h-3.96zM208.02,659.91h7.32v3.95h-7.32zM80.38,663.26h3.96v3.95h-3.96zM93.81,663.26h3.96v3.95h-3.96zM103.89,663.26h3.96v3.95h-3.96zM134.12,663.26h10.68v3.95h-10.68zM147.56,663.26h14.04v3.95h-14.04zM164.35,663.26h3.96v3.95h-3.96zM70.30,666.61h10.68v3.95h-10.68zM87.10,666.61h10.68v3.95h-10.68zM100.53,666.61h3.96v3.95h-3.96zM117.33,666.61h3.96v3.95h-3.96zM130.76,666.61h3.96v3.95h-3.96zM144.20,666.61h3.96v3.95h-3.96zM150.92,666.61h7.32v3.95h-7.32zM167.71,666.61h3.96v3.95h-3.96zM177.79,666.61h3.96v3.95h-3.96zM204.66,666.61h3.96v3.95h-3.96zM214.74,666.61h3.96v3.95h-3.96zM77.02,669.96h10.68v3.95h-10.68zM93.81,669.96h3.96v3.95h-3.96zM103.89,669.96h7.32v3.95h-7.32zM113.97,669.96h7.32v3.95h-7.32zM127.40,669.96h3.96v3.95h-3.96zM140.84,669.96h3.96v3.95h-3.96zM147.56,669.96h10.68v3.95h-10.68zM167.71,669.96h7.32v3.95h-7.32zM181.15,669.96h3.96v3.95h-3.96zM211.38,669.96h3.96v3.95h-3.96zM73.66,673.30h10.68v3.95h-10.68zM87.10,673.30h3.96v3.95h-3.96zM93.81,673.30h3.96v3.95h-3.96zM107.25,673.30h7.32v3.95h-7.32zM137.48,673.30h3.96v3.95h-3.96zM144.20,673.30h17.40v3.95h-17.40zM171.07,673.30h7.32v3.95h-7.32zM197.95,673.30h3.96v3.95h-3.96zM204.66,673.30h7.32v3.95h-7.32zM87.10,676.65h3.96v3.95h-3.96zM97.17,676.65h3.96v3.95h-3.96zM103.89,676.65h7.32v3.95h-7.32zM117.33,676.65h7.32v3.95h-7.32zM127.40,676.65h17.40v3.95h-17.40zM150.92,676.65h3.96v3.95h-3.96zM161.00,676.65h7.32v3.95h-7.32zM181.15,676.65h7.32v3.95h-7.32zM194.59,676.65h14.04v3.95h-14.04zM214.74,676.65h3.96v3.95h-3.96z" fill="rgb(217, 217, 217)" shape-rendering="crispEdges"/>
<path d="M77.02,532.70h3.96v3.95h-3.96zM83.74,532.70h3.96v3.95h-3.96zM90.45,532.70h3.96v3.95h-3.96zM100.53,532.70h3.96v3.95h-3.96zM107.25,532.70h3.96v3.95h-3.96zM137.48,532.70h3.96v3.95h-3.96zM150.92,532.70h14.04v3.95h-14.04zM177.79,532.70h3.96v3.95h-3.96zM187.87,532.70h7.32v3.95h-7.32zM201.30,532.70h7.32v3.95h-7.32zM211.38,532.70h3.96v3.95h-3.96zM80.38,536.05h3.96v3.95h-3.96zM90.45,536.05h7.32v3.95h-7.32zM113.97,536.05h3.96v3.95h-3.96zM120.69,536.05h3.96v3.95h-3.96zM130.76,536.05h3.96v3.95h-3.96zM154.28,536.05h7.32v3.95h-7.32zM167.71,536.05h3.96v3.95h-3.96zM70.30,539.40h3.96v3.95h-3.96zM83.74,539.40h7.32v3.95h-7.32zM93.81,539.40h3.96v3.95h-3.96zM103.89,539.40h7.32v3.95h-7.32zM120.69,539.40h3.96v3.95h-3.96zM134.12,539.40h3.96v3.95h-3.96zM150.92,539.40h3.96v3.95h-3.96zM161.00,539.40h3.96v3.95h-3.96zM167.71,539.40h7.32v3.95h-7.32zM181.15,539.40h3.96v3.95h-3.96zM187.87,539.40h7.32v3.95h-7.32zM197.95,539.40h7.32v3.95h-7.32zM70.30,542.74h3.96v3.95h-3.96zM97.17,542.74h3.96v3.95h-3.96zM107.25,542.74h7.32v3.95h-7.32zM150.92,542.74h7.32v3.95h-7.32zM161.00,542.74h3.96v3.95h-3.96zM167.71,542.74h3.96v3.95h-3.96zM191.23,542.74h7.32v3.95h-7.32zM208.02,542.74h7.32v3.95h-7.32zM77.02,546.09h10.68v3.95h-10.68zM97.17,546.09h7.32v3.95h-7.32zM107.25,546.09h3.96v3.95h-3.96zM127.40,546.09h3.96v3.95h-3.96zM137.48,546.09h3.96v3.95h-3.96zM157.64,546.09h3.96v3.95h-3.96zM171.07,546.09h7.32v3.95h-7.32zM181.15,546.09h3.96v3.95h-3.96zM73.66,549.44h3.96v3.95h-3.96zM90.45,549.44h3.96v3.95h-3.96zM100.53,549.44h7.32v3.95h-7.32zM120.69,549.44h3.96v3.95h-3.96zM137.48,549.44h3.96v3.95h-3.96zM167.71,549.44h3.96v3.95h-3.96zM184.51,549.44h3.96v3.95h-3.96zM194.59,549.44h3.96v3.95h-3.96zM211.38,549.44h7.32v3.95h-7.32zM73.66,552.79h3.96v3.95h-3.96zM80.38,552.79h3.96v3.95h-3.96zM100.53,552.79h10.68v3.95h-10.68zM120.69,552.79h3.96v3.95h-3.96zM147.56,552.79h3.96v3.95h-3.96zM157.64,552.79h3.96v3.95h-3.96zM171.07,552.79h3.96v3.95h-3.96zM177.79,552.79h10.68v3.95h-10.68zM191.23,552.79h3.96v3.95h-3.96zM197.95,552.79h10.68v3.95h-10.68zM214.74,552.79h3.96v3.95h-3.96zM83.74,556.13h3.96v3.95h-3.96zM90.45,556.13h3.96v3.95h-3.96zM103.89,556.13h3.96v3.95h-3.96zM137.48,556.13h3.96v3.95h-3.96zM144.20,556.13h3.96v3.95h-3.96zM150.92,556.13h3.96v3.95h-3.96zM174.43,556.13h3.96v3.95h-3.96zM191.23,556.13h7.32v3.95h-7.32zM77.02,559.48h3.96v3.95h-3.96zM90.45,559.48h3.96v3.95h-3.96zM103.89,559.48h3.96v3.95h-3.96zM120.69,559.48h3.96v3.95h-3.96zM137.48,559.48h3.96v3.95h-3.96zM164.35,559.48h3.96v3.95h-3.96zM171.07,559.48h3.96v3.95h-3.96zM181.15,559.48h3.96v3.95h-3.96zM201.30,559.48h3.96v3.95h-3.96zM211.38,559.48h3.96v3.95h-3.96zM80.38,562.83h3.96v3.95h-3.96zM97.17,562.83h3.96v3.95h-3.96zM107.25,562.83h3.96v3.95h-3.96zM130.76,562.83h10.68v3.95h-10.68zM154.28,562.83h3.96v3.95h-3.96zM174.43,562.83h3.96v3.95h-3.96zM201.30,562.83h3.96v3.95h-3.96zM90.45,566.18h3.96v3.95h-3.96zM103.89,566.18h3.96v3.95h-3.96zM110.61,566.18h3.96v3.95h-3.96zM120.69,566.18h3.96v3.95h-3.96zM137.48,566.18h7.32v3.95h-7.32zM181.15,566.18h3.96v3.95h-3.96zM194.59,566.18h3.96v3.95h-3.96zM204.66,566.18h3.96v3.95h-3.96zM211.38,566.18h3.96v3.95h-3.96zM73.66,569.53h10.68v3.95h-10.68zM87.10,569.53h3.96v3.95h-3.96zM97.17,569.53h3.96v3.95h-3.96zM117.33,569.53h10.68v3.95h-10.68zM140.84,569.53h3.96v3.95h-3.96zM164.35,569.53h3.96v3.95h-3.96zM197.95,569.53h3.96v3.95h-3.96zM87.10,572.87h3.96v3.95h-3.96zM93.81,572.87h3.96v3.95h-3.96zM100.53,572.87h7.32v3.95h-7.32zM113.97,572.87h7.32v3.95h-7.32zM130.76,572.87h3.96v3.95h-3.96zM204.66,572.87h7.32v3.95h-7.32zM103.89,576.22h7.32v3.95h-7.32zM130.76,576.22h3.96v3.95h-3.96zM181.15,576.22h10.68v3.95h-10.68zM208.02,576.22h3.96v3.95h-3.96zM103.89,579.57h7.32v3.95h-7.32zM120.69,579.57h7.32v3.95h-7.32zM201.30,579.57h3.96v3.95h-3.96zM184.51,582.92h7.32v3.95h-7.32zM194.59,582.92h3.96v3.95h-3.96zM80.38,586.26h3.96v3.95h-3.96zM97.17,586.26h3.96v3.95h-3.96zM191.23,586.26h3.96v3.95h-3.96zM204.66,586.26h3.96v3.95h-3.96zM73.66,589.61h3.96v3.95h-3.96zM80.38,589.61h3.96v3.95h-3.96zM90.45,589.61h10.68v3.95h-10.68zM107.25,589.61h3.96v3.95h-3.96zM113.97,589.61h3.96v3.95h-3.96zM184.51,589.61h10.68v3.95h-10.68zM197.95,589.61h7.32v3.95h-7.32zM113.97,592.96h3.96v3.95h-3.96zM191.23,592.96h3.96v3.95h-3.96zM208.02,592.96h3.96v3.95h-3.96zM73.66,596.31h7.32v3.95h-7.32zM87.10,596.31h3.96v3.95h-3.96zM107.25,596.31h7.32v3.95h-7.32zM120.69,596.31h3.96v3.95h-3.96zM191.23,596.31h3.96v3.95h-3.96zM201.30,596.31h3.96v3.95h-3.96zM73.66,599.65h3.96v3.95h-3.96zM80.38,599.65h3.96v3.95h-3.96zM110.61,599.65h3.96v3.95h-3.96zM191.23,599.65h3.96v3.95h-3.96zM204.66,599.65h7.32v3.95h-7.32zM83.74,603.00h3.96v3.95h-3.96zM100.53,603.00h3.96v3.95h-3.96zM117.33,603.00h7.32v3.95h-7.32zM194.59,603.00h7.32v3.95h-7.32zM214.74,603.00h3.96v3.95h-3.96zM70.30,606.35h3.96v3.95h-3.96zM83.74,606.35h3.96v3.95h-3.96zM93.81,606.35h7.32v3.95h-7.32zM103.89,606.35h3.96v3.95h-3.96zM117.33,606.35h3.96v3.95h-3.96zM124.05,606.35h3.96v3.95h-3.96zM204.66,606.35h10.68v3.95h-10.68zM93.81,609.70h3.96v3.95h-3.96zM124.05,609.70h3.96v3.95h-3.96zM208.02,609.70h10.68v3.95h-10.68zM73.66,613.05h3.96v3.95h-3.96zM80.38,613.05h7.32v3.95h-7.32zM90.45,613.05h3.96v3.95h-3.96zM110.61,613.05h3.96v3.95h-3.96zM120.69,613.05h3.96v3.95h-3.96zM187.87,613.05h3.96v3.95h-3.96zM77.02,616.39h3.96v3.95h-3.96zM93.81,616.39h20.75v3.95h-20.75zM124.05,616.39h3.96v3.95h-3.96zM191.23,616.39h3.96v3.95h-3.96zM201.30,616.39h10.68v3.95h-10.68zM103.89,619.74h3.96v3.95h-3.96zM137.48,619.74h3.96v3.95h-3.96zM194.59,619.74h3.96v3.95h-3.96zM211.38,619.74h7.32v3.95h-7.32zM70.30,623.09h7.32v3.95h-7.32zM90.45,623.09h3.96v3.95h-3.96zM117.33,623.09h3.96v3.95h-3.96zM70.30,626.44h3.96v3.95h-3.96zM77.02,626.44h3.96v3.95h-3.96zM97.17,626.44h3.96v3.95h-3.96zM103.89,626.44h3.96v3.95h-3.96zM110.61,626.44h3.96v3.95h-3.96zM117.33,626.44h3.96v3.95h-3.96zM134.12,626.44h3.96v3.95h-3.96zM208.02,626.44h3.96v3.95h-3.96zM83.74,629.78h3.96v3.95h-3.96zM93.81,629.78h3.96v3.95h-3.96zM100.53,629.78h3.96v3.95h-3.96zM110.61,629.78h7.32v3.95h-7.32zM120.69,629.78h3.96v3.95h-3.96zM147.56,629.78h7.32v3.95h-7.32zM194.59,629.78h3.96v3.95h-3.96zM201.30,629.78h7.32v3.95h-7.32zM214.74,629.78h3.96v3.95h-3.96zM90.45,633.13h3.96v3.95h-3.96zM97.17,633.13h3.96v3.95h-3.96zM127.40,633.13h3.96v3.95h-3.96zM137.48,633.13h3.96v3.95h-3.96zM187.87,633.13h14.04v3.95h-14.04zM204.66,633.13h3.96v3.95h-3.96zM73.66,636.48h10.68v3.95h-10.68zM113.97,636.48h3.96v3.95h-3.96zM140.84,636.48h3.96v3.95h-3.96zM197.95,636.48h14.04v3.95h-14.04zM77.02,639.83h3.96v3.95h-3.96zM93.81,639.83h7.32v3.95h-7.32zM107.25,639.83h3.96v3.95h-3.96zM117.33,639.83h3.96v3.95h-3.96zM127.40,639.83h3.96v3.95h-3.96zM137.48,639.83h3.96v3.95h-3.96zM157.64,639.83h3.96v3.95h-3.96zM167.71,639.83h3.96v3.95h-3.96zM211.38,639.83h7.32v3.95h-7.32zM87.10,643.17h7.32v3.95h-7.32zM100.53,643.17h3.96v3.95h-3.96zM113.97,643.17h3.96v3.95h-3.96zM130.76,643.17h3.96v3.95h-3.96zM137.48,643.17h7.32v3.95h-7.32zM150.92,643.17h3.96v3.95h-3.96zM157.64,643.17h3.96v3.95h-3.96zM194.59,643.17h3.96v3.95h-3.96zM83.74,646.52h3.96v3.95h-3.96zM93.81,646.52h7.32v3.95h-7.32zM110.61,646.52h3.96v3.95h-3.96zM120.69,646.52h3.96v3.95h-3.96zM164.35,646.52h3.96v3.95h-3.96zM174.43,646.52h3.96v3.95h-3.96zM187.87,646.52h3.96v3.95h-3.96zM211.38,646.52h7.32v3.95h-7.32zM70.30,649.87h3.96v3.95h-3.96zM80.38,649.87h3.96v3.95h-3.96zM93.81,649.87h3.96v3.95h-3.96zM103.89,649.87h7.32v3.95h-7.32zM113.97,649.87h3.96v3.95h-3.96zM130.76,649.87h3.96v3.95h-3.96zM161.00,649.87h3.96v3.95h-3.96zM177.79,649.87h3.96v3.95h-3.96zM208.02,649.87h3.96v3.95h-3.96zM77.02,653.22h3.96v3.95h-3.96zM90.45,653.22h3.96v3.95h-3.96zM100.53,653.22h3.96v3.95h-3.96zM113.97,653.22h3.96v3.95h-3.96zM120.69,653.22h3.96v3.95h-3.96zM127.40,653.22h7.32v3.95h-7.32zM137.48,653.22h3.96v3.95h-3.96zM161.00,653.22h3.96v3.95h-3.96zM177.79,653.22h3.96v3.95h-3.96zM211.38,653.22h7.32v3.95h-7.32zM73.66,656.57h7.32v3.95h-7.32zM103.89,656.57h3.96v3.95h-3.96zM110.61,656.57h3.96v3.95h-3.96zM134.12,656.57h3.96v3.95h-3.96zM164.35,656.57h7.32v3.95h-7.32zM174.43,656.57h3.96v3.95h-3.96zM77.02,659.91h3.96v3.95h-3.96zM83.74,659.91h7.32v3.95h-7.32zM93.81,659.91h3.96v3.95h-3.96zM103.89,659.91h3.96v3.95h-3.96zM110.61,659.91h3.96v3.95h-3.96zM124.05,659.91h14.04v3.95h-14.04zM144.20,659.91h3.96v3.95h-3.96zM154.28,659.91h3.96v3.95h-3.96zM174.43,659.91h3.96v3.95h-3.96zM214.74,659.91h3.96v3.95h-3.96zM90.45,663.26h3.96v3.95h-3.96zM100.53,663.26h3.96v3.95h-3.96zM107.25,663.26h7.32v3.95h-7.32zM120.69,663.26h7.32v3.95h-7.32zM177.79,663.26h3.96v3.95h-3.96zM208.02,663.26h7.32v3.95h-7.32zM80.38,666.61h7.32v3.95h-7.32zM97.17,666.61h3.96v3.95h-3.96zM103.89,666.61h3.96v3.95h-3.96zM113.97,666.61h3.96v3.95h-3.96zM137.48,666.61h7.32v3.95h-7.32zM211.38,666.61h3.96v3.95h-3.96zM97.17,669.96h7.32v3.95h-7.32zM124.05,669.96h3.96v3.95h-3.96zM134.12,669.96h7.32v3.95h-7.32zM144.20,669.96h3.96v3.95h-3.96zM177.79,669.96h3.96v3.95h-3.96zM214.74,669.96h3.96v3.95h-3.96zM83.74,673.30h3.96v3.95h-3.96zM97.17,673.30h3.96v3.95h-3.96zM103.89,673.30h3.96v3.95h-3.96zM113.97,673.30h3.96v3.95h-3.96zM120.69,673.30h17.40v3.95h-17.40zM164.35,673.30h7.32v3.95h-7.32zM184.51,673.30h3.96v3.95h-3.96zM214.74,673.30h3.96v3.95h-3.96zM73.66,676.65h7.32v3.95h-7.32zM90.45,676.65h7.32v3.95h-7.32zM100.53,676.65h3.96v3.95h-3.96zM124.05,676.65h3.96v3.95h-3.96zM147.56,676.65h3.96v3.95h-3.96zM167.71,676.65h3.96v3.95h-3.96zM174.43,676.65h3.96v3.95h-3.96z" fill="rgb(226, 226, 226)" shape-rendering="crispEdges"/>
<path d="M103.89,532.70h3.96v3.95h-3.96zM110.61,532.70h3.96v3.95h-3.96zM117.33,532.70h3.96v3.95h-3.96zM127.40,532.70h3.96v3.95h-3.96zM140.84,532.70h3.96v3.95h-3.96zM147.56,532.70h3.96v3.95h-3.96zM164.35,532.70h3.96v3.95h-3.96zM197.95,532.70h3.96v3.95h-3.96zM73.66,536.05h3.96v3.95h-3.96zM97.17,536.05h7.32v3.95h-7.32zM117.33,536.05h3.96v3.95h-3.96zM127.40,536.05h3.96v3.95h-3.96zM137.48,536.05h3.96v3.95h-3.96zM161.00,536.05h3.96v3.95h-3.96zM177.79,536.05h3.96v3.95h-3.96zM184.51,536.05h3.96v3.95h-3.96zM214.74,536.05h3.96v3.95h-3.96zM77.02,539.40h7.32v3.95h-7.32zM100.53,539.40h3.96v3.95h-3.96zM110.61,539.40h7.32v3.95h-7.32zM124.05,539.40h3.96v3.95h-3.96zM130.76,539.40h3.96v3.95h-3.96zM154.28,539.40h7.32v3.95h-7.32zM164.35,539.40h3.96v3.95h-3.96zM174.43,539.40h3.96v3.95h-3.96zM184.51,539.40h3.96v3.95h-3.96zM194.59,539.40h3.96v3.95h-3.96zM211.38,539.40h3.96v3.95h-3.96zM80.38,542.74h7.32v3.95h-7.32zM90.45,542.74h3.96v3.95h-3.96zM103.89,542.74h3.96v3.95h-3.96zM113.97,542.74h7.32v3.95h-7.32zM137.48,542.74h3.96v3.95h-3.96zM187.87,542.74h3.96v3.95h-3.96zM201.30,542.74h3.96v3.95h-3.96zM113.97,546.09h3.96v3.95h-3.96zM134.12,546.09h3.96v3.95h-3.96zM144.20,546.09h3.96v3.95h-3.96zM167.71,546.09h3.96v3.95h-3.96zM197.95,546.09h7.32v3.95h-7.32zM214.74,546.09h3.96v3.95h-3.96zM80.38,549.44h3.96v3.95h-3.96zM113.97,549.44h7.32v3.95h-7.32zM124.05,549.44h3.96v3.95h-3.96zM134.12,549.44h3.96v3.95h-3.96zM140.84,549.44h3.96v3.95h-3.96zM154.28,549.44h3.96v3.95h-3.96zM161.00,549.44h3.96v3.95h-3.96zM174.43,549.44h3.96v3.95h-3.96zM204.66,549.44h3.96v3.95h-3.96zM77.02,552.79h3.96v3.95h-3.96zM87.10,552.79h7.32v3.95h-7.32zM113.97,552.79h3.96v3.95h-3.96zM140.84,552.79h3.96v3.95h-3.96zM154.28,552.79h3.96v3.95h-3.96zM80.38,556.13h3.96v3.95h-3.96zM87.10,556.13h3.96v3.95h-3.96zM97.17,556.13h3.96v3.95h-3.96zM113.97,556.13h7.32v3.95h-7.32zM154.28,556.13h3.96v3.95h-3.96zM164.35,556.13h7.32v3.95h-7.32zM177.79,556.13h3.96v3.95h-3.96zM197.95,556.13h7.32v3.95h-7.32zM214.74,556.13h3.96v3.95h-3.96zM87.10,559.48h3.96v3.95h-3.96zM110.61,559.48h3.96v3.95h-3.96zM127.40,559.48h3.96v3.95h-3.96zM144.20,559.48h3.96v3.95h-3.96zM157.64,559.48h3.96v3.95h-3.96zM167.71,559.48h3.96v3.95h-3.96zM177.79,559.48h3.96v3.95h-3.96zM194.59,559.48h3.96v3.95h-3.96zM208.02,559.48h3.96v3.95h-3.96zM73.66,562.83h3.96v3.95h-3.96zM90.45,562.83h7.32v3.95h-7.32zM113.97,562.83h3.96v3.95h-3.96zM120.69,562.83h3.96v3.95h-3.96zM127.40,562.83h3.96v3.95h-3.96zM147.56,562.83h3.96v3.95h-3.96zM167.71,562.83h7.32v3.95h-7.32zM184.51,562.83h3.96v3.95h-3.96zM197.95,562.83h3.96v3.95h-3.96zM70.30,566.18h3.96v3.95h-3.96zM77.02,566.18h3.96v3.95h-3.96zM100.53,566.18h3.96v3.95h-3.96zM107.25,566.18h3.96v3.95h-3.96zM117.33,566.18h3.96v3.95h-3.96zM127.40,566.18h3.96v3.95h-3.96zM134.12,566.18h3.96v3.95h-3.96zM147.56,566.18h3.96v3.95h-3.96zM157.64,566.18h7.32v3.95h-7.32zM171.07,566.18h3.96v3.95h-3.96zM187.87,566.18h7.32v3.95h-7.32zM208.02,566.18h3.96v3.95h-3.96zM150.92,569.53h3.96v3.95h-3.96zM167.71,569.53h7.32v3.95h-7.32zM184.51,569.53h7.32v3.95h-7.32zM194.59,569.53h3.96v3.95h-3.96zM201.30,569.53h3.96v3.95h-3.96zM208.02,569.53h3.96v3.95h-3.96zM70.30,572.87h7.32v3.95h-7.32zM137.48,572.87h3.96v3.95h-3.96zM164.35,572.87h3.96v3.95h-3.96zM174.43,572.87h3.96v3.95h-3.96zM201.30,572.87h3.96v3.95h-3.96zM124.05,576.22h3.96v3.95h-3.96zM177.79,576.22h3.96v3.95h-3.96zM194.59,576.22h10.68v3.95h-10.68zM211.38,576.22h3.96v3.95h-3.96zM73.66,579.57h3.96v3.95h-3.96zM113.97,579.57h3.96v3.95h-3.96zM127.40,579.57h3.96v3.95h-3.96zM187.87,579.57h3.96v3.95h-3.96zM194.59,579.57h3.96v3.95h-3.96zM70.30,582.92h3.96v3.95h-3.96zM77.02,582.92h3.96v3.95h-3.96zM87.10,582.92h3.96v3.95h-3.96zM107.25,582.92h3.96v3.95h-3.96zM181.15,582.92h3.96v3.95h-3.96zM191.23,582.92h3.96v3.95h-3.96zM204.66,582.92h3.96v3.95h-3.96zM77.02,586.26h3.96v3.95h-3.96zM83.74,586.26h7.32v3.95h-7.32zM100.53,586.26h3.96v3.95h-3.96zM107.25,586.26h3.96v3.95h-3.96zM117.33,586.26h10.68v3.95h-10.68zM184.51,586.26h7.32v3.95h-7.32zM194.59,586.26h7.32v3.95h-7.32zM208.02,586.26h3.96v3.95h-3.96zM83.74,589.61h3.96v3.95h-3.96zM100.53,589.61h7.32v3.95h-7.32zM208.02,589.61h7.32v3.95h-7.32zM87.10,592.96h3.96v3.95h-3.96zM97.17,592.96h3.96v3.95h-3.96zM103.89,592.96h3.96v3.95h-3.96zM194.59,592.96h3.96v3.95h-3.96zM70.30,596.31h3.96v3.95h-3.96zM93.81,596.31h3.96v3.95h-3.96zM184.51,596.31h3.96v3.95h-3.96zM208.02,596.31h7.32v3.95h-7.32zM70.30,599.65h3.96v3.95h-3.96zM87.10,599.65h3.96v3.95h-3.96zM124.05,599.65h3.96v3.95h-3.96zM184.51,599.65h3.96v3.95h-3.96zM214.74,599.65h3.96v3.95h-3.96zM70.30,603.00h3.96v3.95h-3.96zM93.81,603.00h3.96v3.95h-3.96zM107.25,603.00h10.68v3.95h-10.68zM184.51,603.00h3.96v3.95h-3.96zM201.30,603.00h3.96v3.95h-3.96zM80.38,606.35h3.96v3.95h-3.96zM87.10,606.35h3.96v3.95h-3.96zM107.25,606.35h3.96v3.95h-3.96zM127.40,606.35h3.96v3.95h-3.96zM194.59,606.35h7.32v3.95h-7.32zM73.66,609.70h3.96v3.95h-3.96zM83.74,609.70h3.96v3.95h-3.96zM90.45,609.70h3.96v3.95h-3.96zM100.53,609.70h3.96v3.95h-3.96zM107.25,609.70h7.32v3.95h-7.32zM130.76,609.70h3.96v3.95h-3.96zM181.15,609.70h7.32v3.95h-7.32zM194.59,609.70h3.96v3.95h-3.96zM204.66,609.70h3.96v3.95h-3.96zM107.25,613.05h3.96v3.95h-3.96zM113.97,613.05h7.32v3.95h-7.32zM127.40,613.05h7.32v3.95h-7.32zM181.15,613.05h7.32v3.95h-7.32zM70.30,616.39h3.96v3.95h-3.96zM134.12,616.39h3.96v3.95h-3.96zM181.15,616.39h3.96v3.95h-3.96zM194.59,616.39h3.96v3.95h-3.96zM211.38,616.39h3.96v3.95h-3.96zM77.02,619.74h3.96v3.95h-3.96zM140.84,619.74h3.96v3.95h-3.96zM184.51,619.74h3.96v3.95h-3.96zM77.02,623.09h3.96v3.95h-3.96zM87.10,623.09h3.96v3.95h-3.96zM97.17,623.09h10.68v3.95h-10.68zM113.97,623.09h3.96v3.95h-3.96zM130.76,623.09h10.68v3.95h-10.68zM144.20,623.09h10.68v3.95h-10.68zM184.51,623.09h7.32v3.95h-7.32zM201.30,623.09h3.96v3.95h-3.96zM211.38,623.09h3.96v3.95h-3.96zM87.10,626.44h7.32v3.95h-7.32zM113.97,626.44h3.96v3.95h-3.96zM144.20,626.44h7.32v3.95h-7.32zM161.00,626.44h3.96v3.95h-3.96zM187.87,626.44h3.96v3.95h-3.96zM211.38,626.44h7.32v3.95h-7.32zM70.30,629.78h7.32v3.95h-7.32zM80.38,629.78h3.96v3.95h-3.96zM97.17,629.78h3.96v3.95h-3.96zM103.89,629.78h3.96v3.95h-3.96zM117.33,629.78h3.96v3.95h-3.96zM127.40,629.78h3.96v3.95h-3.96zM140.84,629.78h7.32v3.95h-7.32zM164.35,629.78h3.96v3.95h-3.96zM184.51,629.78h10.68v3.95h-10.68zM208.02,629.78h3.96v3.95h-3.96zM77.02,633.13h3.96v3.95h-3.96zM83.74,633.13h7.32v3.95h-7.32zM107.25,633.13h10.68v3.95h-10.68zM130.76,633.13h3.96v3.95h-3.96zM140.84,633.13h3.96v3.95h-3.96zM147.56,633.13h3.96v3.95h-3.96zM201.30,633.13h3.96v3.95h-3.96zM70.30,636.48h3.96v3.95h-3.96zM97.17,636.48h3.96v3.95h-3.96zM110.61,636.48h3.96v3.95h-3.96zM120.69,636.48h3.96v3.95h-3.96zM187.87,636.48h10.68v3.95h-10.68zM73.66,639.83h3.96v3.95h-3.96zM83.74,639.83h3.96v3.95h-3.96zM90.45,639.83h3.96v3.95h-3.96zM140.84,639.83h7.32v3.95h-7.32zM150.92,639.83h3.96v3.95h-3.96zM161.00,639.83h3.96v3.95h-3.96zM174.43,639.83h3.96v3.95h-3.96zM191.23,639.83h7.32v3.95h-7.32zM208.02,639.83h3.96v3.95h-3.96zM93.81,643.17h7.32v3.95h-7.32zM110.61,643.17h3.96v3.95h-3.96zM127.40,643.17h3.96v3.95h-3.96zM154.28,643.17h3.96v3.95h-3.96zM174.43,643.17h7.32v3.95h-7.32zM184.51,643.17h10.68v3.95h-10.68zM197.95,643.17h3.96v3.95h-3.96zM90.45,646.52h3.96v3.95h-3.96zM113.97,646.52h3.96v3.95h-3.96zM124.05,646.52h3.96v3.95h-3.96zM130.76,646.52h3.96v3.95h-3.96zM144.20,646.52h3.96v3.95h-3.96zM154.28,646.52h3.96v3.95h-3.96zM161.00,646.52h3.96v3.95h-3.96zM181.15,646.52h3.96v3.95h-3.96zM191.23,646.52h7.32v3.95h-7.32zM204.66,646.52h7.32v3.95h-7.32zM77.02,649.87h3.96v3.95h-3.96zM83.74,649.87h3.96v3.95h-3.96zM97.17,649.87h3.96v3.95h-3.96zM117.33,649.87h3.96v3.95h-3.96zM140.84,649.87h7.32v3.95h-7.32zM167.71,649.87h3.96v3.95h-3.96zM181.15,649.87h7.32v3.95h-7.32zM191.23,649.87h3.96v3.95h-3.96zM211.38,649.87h7.32v3.95h-7.32zM80.38,653.22h3.96v3.95h-3.96zM87.10,653.22h3.96v3.95h-3.96zM97.17,653.22h3.96v3.95h-3.96zM107.25,653.22h3.96v3.95h-3.96zM117.33,653.22h3.96v3.95h-3.96zM140.84,653.22h3.96v3.95h-3.96zM147.56,653.22h7.32v3.95h-7.32zM181.15,653.22h3.96v3.95h-3.96zM70.30,656.57h3.96v3.95h-3.96zM87.10,656.57h7.32v3.95h-7.32zM97.17,656.57h3.96v3.95h-3.96zM124.05,656.57h3.96v3.95h-3.96zM140.84,656.57h7.32v3.95h-7.32zM157.64,656.57h7.32v3.95h-7.32zM177.79,656.57h7.32v3.95h-7.32zM204.66,656.57h3.96v3.95h-3.96zM211.38,656.57h3.96v3.95h-3.96zM73.66,659.91h3.96v3.95h-3.96zM97.17,659.91h3.96v3.95h-3.96zM137.48,659.91h3.96v3.95h-3.96zM181.15,659.91h3.96v3.95h-3.96zM204.66,659.91h3.96v3.95h-3.96zM73.66,663.26h7.32v3.95h-7.32zM83.74,663.26h3.96v3.95h-3.96zM113.97,663.26h7.32v3.95h-7.32zM127.40,663.26h7.32v3.95h-7.32zM161.00,663.26h3.96v3.95h-3.96zM167.71,663.26h10.68v3.95h-10.68zM184.51,663.26h3.96v3.95h-3.96zM204.66,663.26h3.96v3.95h-3.96zM110.61,666.61h3.96v3.95h-3.96zM120.69,666.61h10.68v3.95h-10.68zM134.12,666.61h3.96v3.95h-3.96zM147.56,666.61h3.96v3.95h-3.96zM164.35,666.61h3.96v3.95h-3.96zM171.07,666.61h7.32v3.95h-7.32zM73.66,669.96h3.96v3.95h-3.96zM87.10,669.96h3.96v3.95h-3.96zM110.61,669.96h3.96v3.95h-3.96zM120.69,669.96h3.96v3.95h-3.96zM130.76,669.96h3.96v3.95h-3.96zM157.64,669.96h3.96v3.95h-3.96zM164.35,669.96h3.96v3.95h-3.96zM174.43,669.96h3.96v3.95h-3.96zM184.51,669.96h3.96v3.95h-3.96zM191.23,669.96h3.96v3.95h-3.96zM197.95,669.96h3.96v3.95h-3.96zM204.66,669.96h7.32v3.95h-7.32zM100.53,673.30h3.96v3.95h-3.96zM117.33,673.30h3.96v3.95h-3.96zM161.00,673.30h3.96v3.95h-3.96zM177.79,673.30h7.32v3.95h-7.32zM187.87,673.30h7.32v3.95h-7.32zM201.30,673.30h3.96v3.95h-3.96zM211.38,673.30h3.96v3.95h-3.96zM70.30,676.65h3.96v3.95h-3.96zM83.74,676.65h3.96v3.95h-3.96zM110.61,676.65h7.32v3.95h-7.32zM144.20,676.65h3.96v3.95h-3.96zM154.28,676.65h7.32v3.95h-7.32zM171.07,676.65h3.96v3.95h-3.96zM177.79,676.65h3.96v3.95h-3.96zM187.87,676.65h3.96v3.95h-3.96zM208.02,676.65h7.32v3.95h-7.32z" fill="rgb(207, 207, 207)" shape-rendering="crispEdges"/>
<path d="M130.76,532.70h3.96v3.95h-3.96zM181.15,532.70h3.96v3.95h-3.96zM140.84,536.05h3.96v3.95h-3.96zM208.02,536.05h3.96v3.95h-3.96zM177.79,539.40h3.96v3.95h-3.96zM124.05,542.74h3.96v3.95h-3.96zM140.84,542.74h3.96v3.95h-3.96zM177.79,542.74h3.96v3.95h-3.96zM70.30,546.09h3.96v3.95h-3.96zM150.92,546.09h3.96v3.95h-3.96zM184.51,546.09h3.96v3.95h-3.96zM83.74,549.44h3.96v3.95h-3.96zM177.79,549.44h3.96v3.95h-3.96zM124.05,552.79h3.96v3.95h-3.96zM130.76,556.13h3.96v3.95h-3.96zM171.07,556.13h3.96v3.95h-3.96zM107.25,559.48h3.96v3.95h-3.96zM157.64,562.83h3.96v3.95h-3.96zM164.35,562.83h3.96v3.95h-3.96zM214.74,566.18h3.96v3.95h-3.96zM103.89,569.53h3.96v3.95h-3.96zM77.02,572.87h3.96v3.95h-3.96zM177.79,572.87h3.96v3.95h-3.96zM184.51,572.87h3.96v3.95h-3.96zM194.59,572.87h3.96v3.95h-3.96zM117.33,576.22h3.96v3.95h-3.96zM204.66,576.22h3.96v3.95h-3.96zM113.97,582.92h3.96v3.95h-3.96zM70.30,586.26h3.96v3.95h-3.96zM70.30,589.61h3.96v3.95h-3.96zM194.59,589.61h3.96v3.95h-3.96zM100.53,592.96h3.96v3.95h-3.96zM204.66,596.31h3.96v3.95h-3.96zM103.89,599.65h3.96v3.95h-3.96zM103.89,603.00h3.96v3.95h-3.96zM124.05,603.00h3.96v3.95h-3.96zM191.23,606.35h3.96v3.95h-3.96zM201.30,606.35h3.96v3.95h-3.96zM80.38,619.74h3.96v3.95h-3.96zM93.81,619.74h3.96v3.95h-3.96zM191.23,619.74h3.96v3.95h-3.96zM204.66,619.74h3.96v3.95h-3.96zM130.76,626.44h3.96v3.95h-3.96zM107.25,629.78h3.96v3.95h-3.96zM130.76,629.78h3.96v3.95h-3.96zM150.92,633.13h3.96v3.95h-3.96zM147.56,636.48h3.96v3.95h-3.96zM211.38,636.48h3.96v3.95h-3.96zM80.38,643.17h3.96v3.95h-3.96zM167.71,643.17h3.96v3.95h-3.96zM147.56,646.52h3.96v3.95h-3.96zM90.45,649.87h3.96v3.95h-3.96zM137.48,649.87h3.96v3.95h-3.96zM124.05,653.22h3.96v3.95h-3.96zM164.35,653.22h3.96v3.95h-3.96zM171.07,653.22h3.96v3.95h-3.96zM113.97,656.57h3.96v3.95h-3.96zM150.92,656.57h3.96v3.95h-3.96zM70.30,659.91h3.96v3.95h-3.96zM157.64,659.91h3.96v3.95h-3.96zM164.35,659.91h3.96v3.95h-3.96zM70.30,663.26h3.96v3.95h-3.96zM87.10,663.26h3.96v3.95h-3.96zM97.17,663.26h3.96v3.95h-3.96zM144.20,663.26h3.96v3.95h-3.96zM214.74,663.26h3.96v3.95h-3.96zM107.25,666.61h3.96v3.95h-3.96zM157.64,666.61h7.32v3.95h-7.32zM70.30,669.96h3.96v3.95h-3.96zM90.45,669.96h3.96v3.95h-3.96zM161.00,669.96h3.96v3.95h-3.96zM90.45,673.30h3.96v3.95h-3.96zM80.38,676.65h3.96v3.95h-3.96zM191.23,676.65h3.96v3.95h-3.96z" fill="rgb(236, 236, 236)" shape-rendering="crispEdges"/>
<path d="M164.35,536.05h3.96v3.95h-3.96zM174.43,536.05h3.96v3.95h-3.96zM110.61,546.09h3.96v3.95h-3.96zM204.66,546.09h3.96v3.95h-3.96zM130.76,549.44h3.96v3.95h-3.96zM197.95,549.44h3.96v3.95h-3.96zM110.61,556.13h3.96v3.95h-3.96zM73.66,559.48h3.96v3.95h-3.96zM117.33,559.48h3.96v3.95h-3.96zM204.66,559.48h3.96v3.95h-3.96zM167.71,566.18h3.96v3.95h-3.96zM184.51,566.18h3.96v3.95h-3.96zM110.61,569.53h3.96v3.95h-3.96zM147.56,569.53h3.96v3.95h-3.96zM154.28,569.53h7.32v3.95h-7.32zM167.71,572.87h3.96v3.95h-3.96zM134.12,576.22h7.32v3.95h-7.32zM171.07,576.22h7.32v3.95h-7.32zM174.43,579.57h3.96v3.95h-3.96zM93.81,582.92h3.96v3.95h-3.96zM130.76,582.92h3.96v3.95h-3.96zM90.45,586.26h3.96v3.95h-3.96zM130.76,586.26h3.96v3.95h-3.96zM177.79,586.26h3.96v3.95h-3.96zM127.40,589.61h3.96v3.95h-3.96zM181.15,589.61h3.96v3.95h-3.96zM70.30,592.96h3.96v3.95h-3.96zM187.87,592.96h3.96v3.95h-3.96zM83.74,596.31h3.96v3.95h-3.96zM127.40,599.65h3.96v3.95h-3.96zM90.45,606.35h3.96v3.95h-3.96zM110.61,606.35h3.96v3.95h-3.96zM130.76,606.35h3.96v3.95h-3.96zM184.51,606.35h3.96v3.95h-3.96zM214.74,606.35h3.96v3.95h-3.96zM80.38,609.70h3.96v3.95h-3.96zM134.12,613.05h3.96v3.95h-3.96zM177.79,613.05h3.96v3.95h-3.96zM191.23,613.05h3.96v3.95h-3.96zM201.30,613.05h3.96v3.95h-3.96zM137.48,616.39h3.96v3.95h-3.96zM174.43,616.39h7.32v3.95h-7.32zM83.74,619.74h3.96v3.95h-3.96zM144.20,619.74h3.96v3.95h-3.96zM167.71,619.74h3.96v3.95h-3.96zM83.74,623.09h3.96v3.95h-3.96zM124.05,623.09h7.32v3.95h-7.32zM154.28,623.09h7.32v3.95h-7.32zM164.35,623.09h7.32v3.95h-7.32zM191.23,623.09h3.96v3.95h-3.96zM150.92,626.44h3.96v3.95h-3.96zM164.35,626.44h3.96v3.95h-3.96zM184.51,626.44h3.96v3.95h-3.96zM194.59,626.44h3.96v3.95h-3.96zM167.71,629.78h3.96v3.95h-3.96zM167.71,633.13h3.96v3.95h-3.96zM181.15,633.13h7.32v3.95h-7.32zM144.20,636.48h3.96v3.95h-3.96zM154.28,636.48h3.96v3.95h-3.96zM171.07,636.48h3.96v3.95h-3.96zM177.79,636.48h3.96v3.95h-3.96zM100.53,639.83h3.96v3.95h-3.96zM124.05,639.83h3.96v3.95h-3.96zM134.12,646.52h3.96v3.95h-3.96zM140.84,646.52h3.96v3.95h-3.96zM164.35,649.87h3.96v3.95h-3.96zM187.87,649.87h3.96v3.95h-3.96zM197.95,649.87h3.96v3.95h-3.96zM184.51,653.22h7.32v3.95h-7.32zM197.95,653.22h10.68v3.95h-10.68zM184.51,656.57h3.96v3.95h-3.96zM201.30,656.57h3.96v3.95h-3.96zM181.15,663.26h3.96v3.95h-3.96zM181.15,666.61h3.96v3.95h-3.96zM187.87,669.96h3.96v3.95h-3.96zM70.30,673.30h3.96v3.95h-3.96zM140.84,673.30h3.96v3.95h-3.96zM194.59,673.30h3.96v3.95h-3.96z" fill="rgb(198, 198, 198)" shape-rendering="crispEdges"/>
<path d="M171.07,549.44h3.96v3.95h-3.96zM73.66,619.74h3.96v3.95h-3.96z" fill="rgb(245, 245, 245)" shape-rendering="crispEdges"/>
<path d="M144.20,572.87h7.32v3.95h-7.32zM134.12,579.57h3.96v3.95h-3.96zM134.12,582.92h3.96v3.95h-3.96zM177.79,582.92h3.96v3.95h-3.96zM130.76,589.61h3.96v3.95h-3.96zM127.40,592.96h7.32v3.95h-7.32zM181.15,592.96h3.96v3.95h-3.96zM127.40,596.31h3.96v3.95h-3.96zM127.40,603.00h3.96v3.95h-3.96zM134.12,609.70h3.96v3.95h-3.96zM137.48,613.05h3.96v3.95h-3.96zM140.84,616.39h3.96v3.95h-3.96zM147.56,619.74h3.96v3.95h-3.96zM157.64,619.74h3.96v3.95h-3.96zM164.35,619.74h3.96v3.95h-3.96zM171.07,619.74h14.04v3.95h-14.04zM167.71,626.44h3.96v3.95h-3.96zM171.07,633.13h3.96v3.95h-3.96zM174.43,636.48h3.96v3.95h-3.96zM194.59,649.87h3.96v3.95h-3.96zM187.87,656.57h3.96v3.95h-3.96zM184.51,659.91h3.96v3.95h-3.96zM184.51,666.61h3.96v3.95h-3.96zM208.02,666.61h3.96v3.95h-3.96zM194.59,669.96h3.96v3.95h-3.96zM201.30,669.96h3.96v3.95h-3.96z" fill="rgb(188, 188, 188)" shape-rendering="crispEdges"/>
<path d="M150.92,572.87h3.96v3.95h-3.96zM157.64,572.87h3.96v3.95h-3.96zM167.71,576.22h3.96v3.95h-3.96zM171.07,579.57h3.96v3.95h-3.96zM181.15,599.65h3.96v3.95h-3.96zM134.12,606.35h3.96v3.95h-3.96zM177.79,609.70h3.96v3.95h-3.96zM144.20,616.39h3.96v3.95h-3.96zM154.28,619.74h3.96v3.95h-3.96zM161.00,619.74h3.96v3.95h-3.96zM171.07,626.44h3.96v3.95h-3.96zM171.07,629.78h3.96v3.95h-3.96zM174.43,633.13h3.96v3.95h-3.96zM187.87,659.91h3.96v3.95h-3.96zM197.95,659.91h3.96v3.95h-3.96zM191.23,663.26h3.96v3.95h-3.96zM197.95,663.26h3.96v3.95h-3.96zM191.23,666.61h3.96v3.95h-3.96zM197.95,666.61h3.96v3.95h-3.96z" fill="rgb(170, 170, 170)" shape-rendering="crispEdges"/>
<path d="M154.28,572.87h3.96v3.95h-3.96zM134.12,586.26h3.96v3.95h-3.96zM177.79,589.61h3.96v3.95h-3.96zM174.43,623.09h3.96v3.95h-3.96zM177.79,626.44h3.96v3.95h-3.96zM174.43,629.78h7.32v3.95h-7.32zM194.59,659.91h3.96v3.95h-3.96z" fill="rgb(151, 151, 151)" shape-rendering="crispEdges"/>
<path d="M161.00,572.87h3.96v3.95h-3.96zM137.48,579.57h3.96v3.95h-3.96zM174.43,582.92h3.96v3.95h-3.96zM174.43,613.05h3.96v3.95h-3.96zM150.92,619.74h3.96v3.95h-3.96zM177.79,623.09h3.96v3.95h-3.96zM191.23,659.91h3.96v3.95h-3.96zM194.59,663.26h3.96v3.95h-3.96z" fill="rgb(160, 160, 160)" shape-rendering="crispEdges"/>
<path d="M140.84,576.22h3.96v3.95h-3.96zM130.76,596.31h3.96v3.95h-3.96zM181.15,596.31h3.96v3.95h-3.96zM130.76,599.65h3.96v3.95h-3.96zM130.76,603.00h3.96v3.95h-3.96zM181.15,603.00h3.96v3.95h-3.96zM181.15,606.35h3.96v3.95h-3.96zM171.07,616.39h3.96v3.95h-3.96zM171.07,623.09h3.96v3.95h-3.96zM181.15,623.09h3.96v3.95h-3.96zM181.15,626.44h3.96v3.95h-3.96zM181.15,629.78h3.96v3.95h-3.96zM177.79,633.13h3.96v3.95h-3.96zM191.23,653.22h7.32v3.95h-7.32zM191.23,656.57h10.68v3.95h-10.68zM201.30,659.91h3.96v3.95h-3.96zM187.87,663.26h3.96v3.95h-3.96zM201.30,663.26h3.96v3.95h-3.96zM187.87,666.61h3.96v3.95h-3.96zM194.59,666.61h3.96v3.95h-3.96zM201.30,666.61h3.96v3.95h-3.96z" fill="rgb(179, 179, 179)" shape-rendering="crispEdges"/>
<path d="M144.20,576.22h3.96v3.95h-3.96zM164.35,576.22h3.96v3.95h-3.96zM134.12,603.00h3.96v3.95h-3.96zM137.48,609.70h3.96v3.95h-3.96zM140.84,613.05h3.96v3.95h-3.96zM147.56,616.39h7.32v3.95h-7.32zM167.71,616.39h3.96v3.95h-3.96z" fill="rgb(141, 141, 141)" shape-rendering="crispEdges"/>
<path d="M147.56,576.22h3.96v3.95h-3.96zM161.00,576.22h3.96v3.95h-3.96zM171.07,582.92h3.96v3.95h-3.96zM134.12,589.61h3.96v3.95h-3.96zM134.12,599.65h3.96v3.95h-3.96zM177.79,606.35h3.96v3.95h-3.96zM154.28,616.39h3.96v3.95h-3.96z" fill="rgb(122, 122, 122)" shape-rendering="crispEdges"/>
<path d="M150.92,576.22h3.96v3.95h-3.96zM157.64,576.22h3.96v3.95h-3.96zM134.12,596.31h3.96v3.95h-3.96zM171.07,613.05h3.96v3.95h-3.96z" fill="rgb(103, 103, 103)" shape-rendering="crispEdges"/>
<path d="M154.28,576.22h3.96v3.95h-3.96zM144.20,579.57h3.96v3.95h-3.96zM177.79,596.31h3.96v3.95h-3.96zM177.79,603.00h3.96v3.95h-3.96zM174.43,609.70h3.96v3.95h-3.96z" fill="rgb(85, 85, 85)" shape-rendering="crispEdges"/>
<path d="M140.84,579.57h3.96v3.95h-3.96zM167.71,579.57h3.96v3.95h-3.96zM137.48,582.92h3.96v3.95h-3.96zM174.43,586.26h3.96v3.95h-3.96zM174.43,626.44h3.96v3.95h-3.96z" fill="rgb(132, 132, 132)" shape-rendering="crispEdges"/>
<path d="M147.56,579.57h3.96v3.95h-3.96z" fill="rgb(47, 47, 47)" shape-rendering="crispEdges"/>
<path d="M150.92,579.57h3.96v3.95h-3.96z" fill="rgb(18, 18, 18)" shape-rendering="crispEdges"/>
<path d="M154.28,579.57h3.96v3.95h-3.96zM147.56,582.92h20.75v3.95h-20.75zM144.20,586.26h27.47v3.95h-27.47zM140.84,589.61h34.19v3.95h-34.19zM140.84,592.96h37.55v3.95h-37.55zM140.84,596.31h37.55v3.95h-37.55zM140.84,599.65h37.55v3.95h-37.55zM140.84,603.00h37.55v3.95h-37.55zM144.20,606.35h34.19v3.95h-34.19zM147.56,609.70h27.47v3.95h-27.47zM157.64,613.05h10.68v3.95h-10.68z" fill="rgb(0, 0, 0)" shape-rendering="crispEdges"/>
<path d="M157.64,579.57h3.96v3.95h-3.96zM144.20,582.92h3.96v3.95h-3.96zM140.84,586.26h3.96v3.95h-3.96zM154.28,613.05h3.96v3.95h-3.96z" fill="rgb(9, 9, 9)" shape-rendering="crispEdges"/>
<path d="M161.00,579.57h3.96v3.95h-3.96zM171.07,586.26h3.96v3.95h-3.96zM137.48,599.65h3.96v3.95h-3.96zM140.84,606.35h3.96v3.95h-3.96zM144.20,609.70h3.96v3.95h-3.96zM150.92,613.05h3.96v3.95h-3.96zM167.71,613.05h3.96v3.95h-3.96z" fill="rgb(37, 37, 37)" shape-rendering="crispEdges"/>
<path d="M164.35,579.57h3.96v3.95h-3.96zM140.84,582.92h3.96v3.95h-3.96zM147.56,613.05h3.96v3.95h-3.96z" fill="rgb(75, 75, 75)" shape-rendering="crispEdges"/>
<path d="M167.71,582.92h3.96v3.95h-3.96zM137.48,589.61h3.96v3.95h-3.96z" fill="rgb(56, 56, 56)" shape-rendering="crispEdges"/>
<path d="M137.48,586.26h3.96v3.95h-3.96zM140.84,609.70h3.96v3.95h-3.96z" fill="rgb(94, 94, 94)" shape-rendering="crispEdges"/>
<path d="M174.43,589.61h3.96v3.95h-3.96zM177.79,599.65h3.96v3.95h-3.96zM137.48,603.00h3.96v3.95h-3.96z" fill="rgb(66, 66, 66)" shape-rendering="crispEdges"/>
<path d="M134.12,592.96h3.96v3.95h-3.96zM177.79,592.96h3.96v3.95h-3.96zM137.48,606.35h3.96v3.95h-3.96zM144.20,613.05h3.96v3.95h-3.96zM157.64,616.39h10.68v3.95h-10.68z" fill="rgb(113, 113, 113)" shape-rendering="crispEdges"/>
<path d="M137.48,592.96h3.96v3.95h-3.96zM137.48,596.31h3.96v3.95h-3.96z" fill="rgb(28, 28, 28)" shape-rendering="crispEdges"/>
</g>
<rect x="70.3" y="532.7" width="147.8" height="147.3" fill="none" stroke="#222" stroke-width="1.1"/>
<rect x="94.5" y="557.5" width="98.1" height="98.1" fill="none" stroke="#ff0000" stroke-width="1.2"/>
<text x="143.60" y="546.50" font-size="11" font-family='"Liberation Sans", sans-serif' fill="#ff0000" text-anchor="middle" >N</text>
<text x="80.80" y="610.50" font-size="11" font-family='"Liberation Sans", sans-serif' fill="#ff0000" text-anchor="middle" >E</text>
<line x1="78.2" y1="680.0" x2="78.2" y2="683.5" stroke="#222" stroke-width="0.8"/>
<line x1="66.8" y1="671.9" x2="70.3" y2="671.9" stroke="#222" stroke-width="0.8"/>
<text x="78.20" y="695.70" font-size="10.6" font-family='"Liberation Sans", sans-serif' fill="#000" text-anchor="middle" textLength="13.6" lengthAdjust="spacingAndGlyphs" >−4</text>
<text x="64.30" y="675.70" font-size="10.6" font-family='"Liberation Sans", sans-serif' fill="#000" text-anchor="end" textLength="13.6" lengthAdjust="spacingAndGlyphs" >−4</text>
<line x1="110.9" y1="680.0" x2="110.9" y2="683.5" stroke="#222" stroke-width="0.8"/>
<line x1="66.8" y1="639.2" x2="70.3" y2="639.2" stroke="#222" stroke-width="0.8"/>
<text x="110.90" y="695.70" font-size="10.6" font-family='"Liberation Sans", sans-serif' fill="#000" text-anchor="middle" textLength="13.6" lengthAdjust="spacingAndGlyphs" >−2</text>
<text x="64.30" y="643.00" font-size="10.6" font-family='"Liberation Sans", sans-serif' fill="#000" text-anchor="end" textLength="13.6" lengthAdjust="spacingAndGlyphs" >−2</text>
<line x1="143.6" y1="680.0" x2="143.6" y2="683.5" stroke="#222" stroke-width="0.8"/>
<line x1="66.8" y1="606.5" x2="70.3" y2="606.5" stroke="#222" stroke-width="0.8"/>
<text x="143.60" y="695.70" font-size="10.6" font-family='"Liberation Sans", sans-serif' fill="#000" text-anchor="middle" >0</text>
<text x="64.30" y="610.30" font-size="10.6" font-family='"Liberation Sans", sans-serif' fill="#000" text-anchor="end" >0</text>
<line x1="176.3" y1="680.0" x2="176.3" y2="683.5" stroke="#222" stroke-width="0.8"/>
<line x1="66.8" y1="573.8" x2="70.3" y2="573.8" stroke="#222" stroke-width="0.8"/>
<text x="176.30" y="695.70" font-size="10.6" font-family='"Liberation Sans", sans-serif' fill="#000" text-anchor="middle" >2</text>
<text x="64.30" y="577.60" font-size="10.6" font-family='"Liberation Sans", sans-serif' fill="#000" text-anchor="end" >2</text>
<line x1="209.0" y1="680.0" x2="209.0" y2="683.5" stroke="#222" stroke-width="0.8"/>
<line x1="66.8" y1="541.1" x2="70.3" y2="541.1" stroke="#222" stroke-width="0.8"/>
<text x="209.00" y="695.70" font-size="10.6" font-family='"Liberation Sans", sans-serif' fill="#000" text-anchor="middle" >4</text>
<text x="64.30" y="544.90" font-size="10.6" font-family='"Liberation Sans", sans-serif' fill="#000" text-anchor="end" >4</text>
<text x="143.60" y="525.30" font-size="12.6" font-family='"Liberation Sans", sans-serif' fill="#000" text-anchor="middle" textLength="91.8" lengthAdjust="spacingAndGlyphs" >Fiber Positions</text>
<clipPath id="cplf"><rect x="255.3" y="532.7" width="147.8" height="147.3"/></clipPath><g clip-path="url(#cplf)">
<path d="M255.30,532.70h8.81v4.69h-8.81zM255.30,536.79h8.81v4.69h-8.81zM312.78,585.89h8.81v4.69h-8.81zM316.88,589.98h4.71v4.69h-4.71zM304.57,594.08h4.71v4.69h-4.71zM316.88,594.08h4.71v4.69h-4.71zM300.46,598.17h4.71v4.69h-4.71zM316.88,598.17h4.71v4.69h-4.71zM300.46,602.26h8.81v4.69h-8.81zM316.88,602.26h12.92v4.69h-12.92zM386.68,602.26h4.71v4.69h-4.71zM304.57,606.35h25.23v4.69h-25.23zM337.41,606.35h12.92v4.69h-12.92zM382.57,606.35h8.81v4.69h-8.81zM312.78,610.44h8.81v4.69h-8.81zM353.83,610.44h4.71v4.69h-4.71zM316.88,614.53h8.81v4.69h-8.81zM349.73,614.53h4.71v4.69h-4.71zM320.99,618.62h21.13v4.69h-21.13zM386.68,639.08h4.71v4.69h-4.71zM378.47,651.36h4.71v4.69h-4.71zM378.47,667.73h4.71v4.69h-4.71z" fill="rgb(37, 132, 141)" shape-rendering="crispEdges"/>
<path d="M263.51,532.70h4.71v4.69h-4.71zM366.15,532.70h37.55v4.69h-37.55zM263.51,536.79h4.71v4.69h-4.71zM366.15,536.79h37.55v4.69h-37.55zM316.88,549.07h8.81v4.69h-8.81zM320.99,553.16h4.71v4.69h-4.71zM320.99,557.25h4.71v4.69h-4.71zM320.99,561.34h8.81v4.69h-8.81zM320.99,565.43h4.71v4.69h-4.71zM353.83,573.62h8.81v4.69h-8.81zM320.99,581.80h4.71v4.69h-4.71zM320.99,585.89h4.71v4.69h-4.71zM304.57,589.98h4.71v4.69h-4.71zM320.99,589.98h4.71v4.69h-4.71zM382.57,589.98h4.71v4.69h-4.71zM300.46,594.08h4.71v4.69h-4.71zM320.99,594.08h4.71v4.69h-4.71zM386.68,594.08h4.71v4.69h-4.71zM292.25,598.17h8.81v4.69h-8.81zM320.99,598.17h8.81v4.69h-8.81zM378.47,598.17h4.71v4.69h-4.71zM390.78,598.17h4.71v4.69h-4.71zM296.36,602.26h4.71v4.69h-4.71zM329.20,602.26h8.81v4.69h-8.81zM390.78,602.26h4.71v4.69h-4.71zM300.46,606.35h4.71v4.69h-4.71zM390.78,606.35h12.92v4.69h-12.92zM304.57,610.44h8.81v4.69h-8.81zM382.57,610.44h21.13v4.69h-21.13zM308.67,614.53h8.81v4.69h-8.81zM382.57,614.53h21.13v4.69h-21.13zM312.78,618.62h8.81v4.69h-8.81zM349.73,618.62h4.71v4.69h-4.71zM390.78,618.62h12.92v4.69h-12.92zM316.88,622.72h33.44v4.69h-33.44zM390.78,622.72h12.92v4.69h-12.92zM390.78,626.81h12.92v4.69h-12.92zM390.78,630.90h12.92v4.69h-12.92zM390.78,634.99h12.92v4.69h-12.92zM382.57,639.08h4.71v4.69h-4.71zM333.31,659.54h17.02v4.69h-17.02z" fill="rgb(40, 124, 142)" shape-rendering="crispEdges"/>
<path d="M267.62,532.70h8.81v4.69h-8.81zM296.36,532.70h4.71v4.69h-4.71zM357.94,532.70h8.81v4.69h-8.81zM267.62,536.79h8.81v4.69h-8.81zM296.36,536.79h4.71v4.69h-4.71zM357.94,536.79h8.81v4.69h-8.81zM394.89,540.88h8.81v4.69h-8.81zM308.67,549.07h8.81v4.69h-8.81zM325.09,549.07h4.71v4.69h-4.71zM316.88,553.16h4.71v4.69h-4.71zM325.09,553.16h4.71v4.69h-4.71zM316.88,557.25h4.71v4.69h-4.71zM325.09,557.25h8.81v4.69h-8.81zM316.88,561.34h4.71v4.69h-4.71zM329.20,561.34h8.81v4.69h-8.81zM325.09,565.43h12.92v4.69h-12.92zM320.99,569.53h17.02v4.69h-17.02zM320.99,573.62h33.44v4.69h-33.44zM320.99,577.71h8.81v4.69h-8.81zM316.88,581.80h4.71v4.69h-4.71zM325.09,581.80h4.71v4.69h-4.71zM304.57,585.89h4.71v4.69h-4.71zM325.09,585.89h4.71v4.69h-4.71zM382.57,585.89h4.71v4.69h-4.71zM325.09,589.98h4.71v4.69h-4.71zM378.47,589.98h4.71v4.69h-4.71zM325.09,594.08h8.81v4.69h-8.81zM378.47,594.08h4.71v4.69h-4.71zM284.04,598.17h8.81v4.69h-8.81zM329.20,598.17h8.81v4.69h-8.81zM394.89,598.17h8.81v4.69h-8.81zM288.14,602.26h8.81v4.69h-8.81zM337.41,602.26h4.71v4.69h-4.71zM378.47,602.26h4.71v4.69h-4.71zM394.89,602.26h8.81v4.69h-8.81zM292.25,606.35h8.81v4.69h-8.81zM349.73,606.35h4.71v4.69h-4.71zM378.47,606.35h4.71v4.69h-4.71zM296.36,610.44h8.81v4.69h-8.81zM357.94,610.44h4.71v4.69h-4.71zM378.47,610.44h4.71v4.69h-4.71zM300.46,614.53h8.81v4.69h-8.81zM353.83,614.53h4.71v4.69h-4.71zM304.57,618.62h8.81v4.69h-8.81zM382.57,618.62h8.81v4.69h-8.81zM308.67,622.72h8.81v4.69h-8.81zM349.73,622.72h4.71v4.69h-4.71zM382.57,622.72h8.81v4.69h-8.81zM320.99,626.81h4.71v4.69h-4.71zM382.57,626.81h8.81v4.69h-8.81zM382.57,630.90h8.81v4.69h-8.81zM382.57,634.99h8.81v4.69h-8.81zM378.47,647.27h4.71v4.69h-4.71zM333.31,655.45h4.71v4.69h-4.71zM333.31,663.63h17.02v4.69h-17.02zM378.47,671.82h4.71v4.69h-4.71zM378.47,675.91h4.71v4.69h-4.71z" fill="rgb(43, 116, 142)" shape-rendering="crispEdges"/>
<path d="M275.83,532.70h4.71v4.69h-4.71zM292.25,532.70h4.71v4.69h-4.71zM275.83,536.79h4.71v4.69h-4.71zM292.25,536.79h4.71v4.69h-4.71zM255.30,540.88h17.02v4.69h-17.02zM296.36,540.88h4.71v4.69h-4.71zM382.57,540.88h12.92v4.69h-12.92zM304.57,549.07h4.71v4.69h-4.71zM329.20,549.07h4.71v4.69h-4.71zM312.78,553.16h4.71v4.69h-4.71zM329.20,553.16h4.71v4.69h-4.71zM312.78,557.25h4.71v4.69h-4.71zM333.31,557.25h4.71v4.69h-4.71zM337.41,569.53h4.71v4.69h-4.71zM362.04,573.62h4.71v4.69h-4.71zM329.20,577.71h8.81v4.69h-8.81zM312.78,581.80h4.71v4.69h-4.71zM329.20,581.80h4.71v4.69h-4.71zM329.20,585.89h4.71v4.69h-4.71zM378.47,585.89h4.71v4.69h-4.71zM300.46,589.98h4.71v4.69h-4.71zM329.20,589.98h4.71v4.69h-4.71zM296.36,594.08h4.71v4.69h-4.71zM333.31,594.08h4.71v4.69h-4.71zM279.93,598.17h4.71v4.69h-4.71zM279.93,602.26h8.81v4.69h-8.81zM341.52,602.26h4.71v4.69h-4.71zM288.14,606.35h4.71v4.69h-4.71zM292.25,610.44h4.71v4.69h-4.71zM296.36,614.53h4.71v4.69h-4.71zM378.47,614.53h4.71v4.69h-4.71zM300.46,618.62h4.71v4.69h-4.71zM353.83,618.62h4.71v4.69h-4.71zM304.57,622.72h4.71v4.69h-4.71zM308.67,626.81h12.92v4.69h-12.92zM325.09,626.81h4.71v4.69h-4.71zM337.41,655.45h4.71v4.69h-4.71zM349.73,659.54h4.71v4.69h-4.71zM341.52,667.73h8.81v4.69h-8.81z" fill="rgb(46, 108, 142)" shape-rendering="crispEdges"/>
<path d="M279.93,532.70h12.92v4.69h-12.92zM353.83,532.70h4.71v4.69h-4.71zM279.93,536.79h12.92v4.69h-12.92zM353.83,536.79h4.71v4.69h-4.71zM271.72,540.88h12.92v4.69h-12.92zM288.14,540.88h8.81v4.69h-8.81zM374.36,540.88h8.81v4.69h-8.81zM292.25,544.98h12.92v4.69h-12.92zM390.78,544.98h12.92v4.69h-12.92zM296.36,549.07h8.81v4.69h-8.81zM333.31,549.07h4.71v4.69h-4.71zM308.67,553.16h4.71v4.69h-4.71zM333.31,553.16h4.71v4.69h-4.71zM312.78,561.34h4.71v4.69h-4.71zM316.88,565.43h4.71v4.69h-4.71zM337.41,565.43h4.71v4.69h-4.71zM341.52,569.53h4.71v4.69h-4.71zM316.88,577.71h4.71v4.69h-4.71zM337.41,577.71h8.81v4.69h-8.81zM308.67,581.80h4.71v4.69h-4.71zM333.31,581.80h4.71v4.69h-4.71zM333.31,585.89h4.71v4.69h-4.71zM370.26,585.89h8.81v4.69h-8.81zM333.31,589.98h4.71v4.69h-4.71zM374.36,589.98h4.71v4.69h-4.71zM386.68,589.98h4.71v4.69h-4.71zM288.14,594.08h8.81v4.69h-8.81zM390.78,594.08h4.71v4.69h-4.71zM271.72,598.17h8.81v4.69h-8.81zM271.72,602.26h8.81v4.69h-8.81zM271.72,606.35h17.02v4.69h-17.02zM353.83,606.35h4.71v4.69h-4.71zM374.36,606.35h4.71v4.69h-4.71zM271.72,610.44h21.13v4.69h-21.13zM362.04,610.44h4.71v4.69h-4.71zM374.36,610.44h4.71v4.69h-4.71zM288.14,614.53h8.81v4.69h-8.81zM357.94,614.53h4.71v4.69h-4.71zM292.25,618.62h8.81v4.69h-8.81zM378.47,618.62h4.71v4.69h-4.71zM296.36,622.72h8.81v4.69h-8.81zM353.83,622.72h4.71v4.69h-4.71zM300.46,626.81h8.81v4.69h-8.81zM329.20,626.81h8.81v4.69h-8.81zM304.57,630.90h21.13v4.69h-21.13zM308.67,634.99h4.71v4.69h-4.71zM378.47,643.17h4.71v4.69h-4.71zM333.31,651.36h4.71v4.69h-4.71zM341.52,655.45h4.71v4.69h-4.71zM329.20,659.54h4.71v4.69h-4.71zM374.36,659.54h4.71v4.69h-4.71zM349.73,663.63h4.71v4.69h-4.71zM333.31,667.73h8.81v4.69h-8.81zM345.62,671.82h4.71v4.69h-4.71zM345.62,675.91h4.71v4.69h-4.71z" fill="rgb(50, 100, 141)" shape-rendering="crispEdges"/>
<path d="M300.46,532.70h4.71v4.69h-4.71zM349.73,532.70h4.71v4.69h-4.71zM300.46,536.79h4.71v4.69h-4.71zM349.73,536.79h4.71v4.69h-4.71zM284.04,540.88h4.71v4.69h-4.71zM300.46,540.88h4.71v4.69h-4.71zM366.15,540.88h8.81v4.69h-8.81zM255.30,544.98h37.55v4.69h-37.55zM304.57,544.98h12.92v4.69h-12.92zM382.57,544.98h8.81v4.69h-8.81zM288.14,549.07h8.81v4.69h-8.81zM304.57,553.16h4.71v4.69h-4.71zM308.67,557.25h4.71v4.69h-4.71zM337.41,561.34h4.71v4.69h-4.71zM341.52,565.43h4.71v4.69h-4.71zM316.88,569.53h4.71v4.69h-4.71zM345.62,569.53h12.92v4.69h-12.92zM366.15,573.62h4.71v4.69h-4.71zM345.62,577.71h17.02v4.69h-17.02zM337.41,581.80h4.71v4.69h-4.71zM370.26,581.80h4.71v4.69h-4.71zM300.46,585.89h4.71v4.69h-4.71zM296.36,589.98h4.71v4.69h-4.71zM267.62,594.08h21.13v4.69h-21.13zM337.41,594.08h4.71v4.69h-4.71zM374.36,594.08h4.71v4.69h-4.71zM263.51,598.17h8.81v4.69h-8.81zM337.41,598.17h4.71v4.69h-4.71zM374.36,598.17h4.71v4.69h-4.71zM263.51,602.26h8.81v4.69h-8.81zM345.62,602.26h4.71v4.69h-4.71zM374.36,602.26h4.71v4.69h-4.71zM263.51,606.35h8.81v4.69h-8.81zM263.51,610.44h8.81v4.69h-8.81zM366.15,610.44h4.71v4.69h-4.71zM267.62,614.53h21.13v4.69h-21.13zM362.04,614.53h4.71v4.69h-4.71zM374.36,614.53h4.71v4.69h-4.71zM271.72,618.62h4.71v4.69h-4.71zM288.14,618.62h4.71v4.69h-4.71zM357.94,618.62h4.71v4.69h-4.71zM292.25,622.72h4.71v4.69h-4.71zM378.47,622.72h4.71v4.69h-4.71zM296.36,626.81h4.71v4.69h-4.71zM337.41,626.81h8.81v4.69h-8.81zM378.47,626.81h4.71v4.69h-4.71zM296.36,630.90h8.81v4.69h-8.81zM325.09,630.90h4.71v4.69h-4.71zM300.46,634.99h8.81v4.69h-8.81zM312.78,634.99h8.81v4.69h-8.81zM304.57,639.08h12.92v4.69h-12.92zM378.47,639.08h4.71v4.69h-4.71zM308.67,643.17h4.71v4.69h-4.71zM329.20,655.45h4.71v4.69h-4.71zM345.62,655.45h4.71v4.69h-4.71zM374.36,655.45h4.71v4.69h-4.71zM353.83,659.54h4.71v4.69h-4.71zM329.20,663.63h4.71v4.69h-4.71zM374.36,663.63h4.71v4.69h-4.71zM349.73,667.73h4.71v4.69h-4.71zM337.41,671.82h8.81v4.69h-8.81zM337.41,675.91h8.81v4.69h-8.81z" fill="rgb(54, 91, 140)" shape-rendering="crispEdges"/>
<path d="M304.57,532.70h4.71v4.69h-4.71zM304.57,536.79h4.71v4.69h-4.71zM308.67,540.88h4.71v4.69h-4.71zM333.31,540.88h4.71v4.69h-4.71zM349.73,540.88h8.81v4.69h-8.81zM337.41,544.98h4.71v4.69h-4.71zM370.26,544.98h4.71v4.69h-4.71zM337.41,549.07h4.71v4.69h-4.71zM255.30,553.16h17.02v4.69h-17.02zM275.83,553.16h8.81v4.69h-8.81zM292.25,553.16h4.71v4.69h-4.71zM341.52,557.25h4.71v4.69h-4.71zM304.57,561.34h4.71v4.69h-4.71zM308.67,565.43h4.71v4.69h-4.71zM349.73,565.43h4.71v4.69h-4.71zM308.67,577.71h4.71v4.69h-4.71zM374.36,577.71h4.71v4.69h-4.71zM263.51,581.80h8.81v4.69h-8.81zM300.46,581.80h4.71v4.69h-4.71zM345.62,581.80h8.81v4.69h-8.81zM362.04,581.80h4.71v4.69h-4.71zM275.83,585.89h8.81v4.69h-8.81zM288.14,585.89h8.81v4.69h-8.81zM341.52,585.89h4.71v4.69h-4.71zM341.52,589.98h4.71v4.69h-4.71zM366.15,589.98h4.71v4.69h-4.71zM370.26,602.26h4.71v4.69h-4.71zM366.15,618.62h4.71v4.69h-4.71zM374.36,622.72h4.71v4.69h-4.71zM275.83,626.81h8.81v4.69h-8.81zM288.14,626.81h4.71v4.69h-4.71zM353.83,626.81h4.71v4.69h-4.71zM374.36,626.81h4.71v4.69h-4.71zM263.51,630.90h12.92v4.69h-12.92zM263.51,634.99h8.81v4.69h-8.81zM292.25,634.99h4.71v4.69h-4.71zM255.30,639.08h8.81v4.69h-8.81zM292.25,639.08h4.71v4.69h-4.71zM325.09,639.08h8.81v4.69h-8.81zM374.36,639.08h4.71v4.69h-4.71zM255.30,643.17h8.81v4.69h-8.81zM320.99,643.17h12.92v4.69h-12.92zM374.36,643.17h4.71v4.69h-4.71zM316.88,647.27h4.71v4.69h-4.71zM325.09,647.27h4.71v4.69h-4.71zM337.41,647.27h4.71v4.69h-4.71zM312.78,651.36h8.81v4.69h-8.81zM345.62,651.36h4.71v4.69h-4.71zM292.25,655.45h4.71v4.69h-4.71zM300.46,655.45h8.81v4.69h-8.81zM353.83,655.45h4.71v4.69h-4.71zM288.14,659.54h8.81v4.69h-8.81zM300.46,659.54h4.71v4.69h-4.71zM284.04,663.63h8.81v4.69h-8.81zM300.46,663.63h4.71v4.69h-4.71zM325.09,663.63h4.71v4.69h-4.71zM357.94,663.63h4.71v4.69h-4.71zM284.04,667.73h4.71v4.69h-4.71zM300.46,667.73h4.71v4.69h-4.71zM357.94,667.73h4.71v4.69h-4.71zM300.46,671.82h4.71v4.69h-4.71zM300.46,675.91h4.71v4.69h-4.71z" fill="rgb(64, 64, 131)" shape-rendering="crispEdges"/>
<path d="M308.67,532.70h4.71v4.69h-4.71zM333.31,532.70h4.71v4.69h-4.71zM308.67,536.79h4.71v4.69h-4.71zM333.31,536.79h4.71v4.69h-4.71zM320.99,540.88h4.71v4.69h-4.71zM362.04,544.98h4.71v4.69h-4.71zM374.36,549.07h4.71v4.69h-4.71zM378.47,553.16h4.71v4.69h-4.71zM279.93,557.25h4.71v4.69h-4.71zM292.25,557.25h8.81v4.69h-8.81zM345.62,557.25h4.71v4.69h-4.71zM255.30,561.34h8.81v4.69h-8.81zM300.46,561.34h4.71v4.69h-4.71zM349.73,561.34h4.71v4.69h-4.71zM255.30,565.43h21.13v4.69h-21.13zM357.94,565.43h4.71v4.69h-4.71zM255.30,569.53h21.13v4.69h-21.13zM370.26,569.53h4.71v4.69h-4.71zM255.30,573.62h12.92v4.69h-12.92zM271.72,577.71h4.71v4.69h-4.71zM279.93,581.80h4.71v4.69h-4.71zM288.14,581.80h12.92v4.69h-12.92zM345.62,585.89h4.71v4.69h-4.71zM362.04,585.89h4.71v4.69h-4.71zM349.73,589.98h4.71v4.69h-4.71zM362.04,589.98h4.71v4.69h-4.71zM349.73,594.08h4.71v4.69h-4.71zM349.73,598.17h4.71v4.69h-4.71zM366.15,598.17h4.71v4.69h-4.71zM370.26,622.72h4.71v4.69h-4.71zM366.15,626.81h8.81v4.69h-8.81zM284.04,630.90h4.71v4.69h-4.71zM345.62,630.90h4.71v4.69h-4.71zM279.93,634.99h4.71v4.69h-4.71zM333.31,634.99h4.71v4.69h-4.71zM275.83,639.08h4.71v4.69h-4.71zM337.41,639.08h4.71v4.69h-4.71zM267.62,643.17h4.71v4.69h-4.71zM341.52,643.17h4.71v4.69h-4.71zM288.14,647.27h4.71v4.69h-4.71zM255.30,651.36h8.81v4.69h-8.81zM284.04,651.36h4.71v4.69h-4.71zM279.93,655.45h4.71v4.69h-4.71zM362.04,655.45h4.71v4.69h-4.71zM308.67,659.54h4.71v4.69h-4.71zM366.15,659.54h4.71v4.69h-4.71zM308.67,663.63h17.02v4.69h-17.02zM366.15,663.63h4.71v4.69h-4.71zM275.83,667.73h4.71v4.69h-4.71zM366.15,667.73h4.71v4.69h-4.71zM275.83,671.82h4.71v4.69h-4.71zM366.15,671.82h4.71v4.69h-4.71zM275.83,675.91h4.71v4.69h-4.71zM366.15,675.91h4.71v4.69h-4.71z" fill="rgb(70, 34, 113)" shape-rendering="crispEdges"/>
<path d="M312.78,532.70h4.71v4.69h-4.71zM329.20,532.70h4.71v4.69h-4.71zM312.78,536.79h4.71v4.69h-4.71zM329.20,536.79h4.71v4.69h-4.71zM345.62,544.98h17.02v4.69h-17.02zM341.52,549.07h4.71v4.69h-4.71zM370.26,549.07h4.71v4.69h-4.71zM288.14,557.25h4.71v4.69h-4.71zM394.89,557.25h8.81v4.69h-8.81zM275.83,561.34h4.71v4.69h-4.71zM362.04,565.43h4.71v4.69h-4.71zM304.57,569.53h4.71v4.69h-4.71zM374.36,569.53h4.71v4.69h-4.71zM267.62,573.62h8.81v4.69h-8.81zM308.67,573.62h4.71v4.69h-4.71zM275.83,577.71h4.71v4.69h-4.71zM300.46,577.71h4.71v4.69h-4.71zM382.57,577.71h4.71v4.69h-4.71zM284.04,581.80h4.71v4.69h-4.71zM390.78,581.80h4.71v4.69h-4.71zM349.73,585.89h4.71v4.69h-4.71zM394.89,585.89h8.81v4.69h-8.81zM362.04,594.08h4.71v4.69h-4.71zM349.73,630.90h4.71v4.69h-4.71zM366.15,630.90h8.81v4.69h-8.81zM284.04,634.99h4.71v4.69h-4.71zM337.41,634.99h4.71v4.69h-4.71zM370.26,634.99h4.71v4.69h-4.71zM279.93,639.08h8.81v4.69h-8.81zM370.26,639.08h4.71v4.69h-4.71zM271.72,643.17h17.02v4.69h-17.02zM370.26,643.17h4.71v4.69h-4.71zM267.62,647.27h4.71v4.69h-4.71zM284.04,647.27h4.71v4.69h-4.71zM345.62,647.27h4.71v4.69h-4.71zM370.26,647.27h4.71v4.69h-4.71zM263.51,651.36h8.81v4.69h-8.81zM279.93,651.36h4.71v4.69h-4.71zM353.83,651.36h4.71v4.69h-4.71zM370.26,651.36h4.71v4.69h-4.71zM275.83,655.45h4.71v4.69h-4.71zM366.15,655.45h8.81v4.69h-8.81zM275.83,659.54h4.71v4.69h-4.71zM370.26,659.54h4.71v4.69h-4.71zM275.83,663.63h4.71v4.69h-4.71zM370.26,663.63h4.71v4.69h-4.71zM308.67,667.73h8.81v4.69h-8.81zM370.26,667.73h4.71v4.69h-4.71zM308.67,671.82h4.71v4.69h-4.71zM325.09,671.82h4.71v4.69h-4.71zM370.26,671.82h4.71v4.69h-4.71zM308.67,675.91h4.71v4.69h-4.71zM325.09,675.91h4.71v4.69h-4.71zM370.26,675.91h4.71v4.69h-4.71z" fill="rgb(70, 23, 104)" shape-rendering="crispEdges"/>
<path d="M316.88,532.70h12.92v4.69h-12.92zM316.88,536.79h12.92v4.69h-12.92zM345.62,549.07h25.23v4.69h-25.23zM349.73,553.16h25.23v4.69h-25.23zM353.83,557.25h29.34v4.69h-29.34zM279.93,561.34h21.13v4.69h-21.13zM353.83,561.34h49.87v4.69h-49.87zM279.93,565.43h21.13v4.69h-21.13zM370.26,565.43h33.44v4.69h-33.44zM279.93,569.53h25.23v4.69h-25.23zM378.47,569.53h25.23v4.69h-25.23zM275.83,573.62h33.44v4.69h-33.44zM382.57,573.62h21.13v4.69h-21.13zM284.04,577.71h17.02v4.69h-17.02zM390.78,577.71h12.92v4.69h-12.92zM394.89,581.80h8.81v4.69h-8.81zM357.94,585.89h4.71v4.69h-4.71zM357.94,589.98h4.71v4.69h-4.71zM357.94,594.08h4.71v4.69h-4.71zM357.94,598.17h4.71v4.69h-4.71zM341.52,634.99h29.34v4.69h-29.34zM345.62,639.08h25.23v4.69h-25.23zM345.62,643.17h25.23v4.69h-25.23zM349.73,647.27h21.13v4.69h-21.13zM255.30,659.54h17.02v4.69h-17.02zM255.30,663.63h17.02v4.69h-17.02zM255.30,667.73h17.02v4.69h-17.02zM255.30,671.82h17.02v4.69h-17.02zM316.88,671.82h8.81v4.69h-8.81zM255.30,675.91h17.02v4.69h-17.02zM316.88,675.91h8.81v4.69h-8.81z" fill="rgb(68, 1, 84)" shape-rendering="crispEdges"/>
<path d="M337.41,532.70h4.71v4.69h-4.71zM337.41,536.79h4.71v4.69h-4.71zM312.78,540.88h4.71v4.69h-4.71zM329.20,540.88h4.71v4.69h-4.71zM337.41,540.88h12.92v4.69h-12.92zM366.15,544.98h4.71v4.69h-4.71zM378.47,549.07h4.71v4.69h-4.71zM284.04,553.16h8.81v4.69h-8.81zM390.78,553.16h12.92v4.69h-12.92zM263.51,557.25h12.92v4.69h-12.92zM300.46,557.25h4.71v4.69h-4.71zM345.62,561.34h4.71v4.69h-4.71zM366.15,569.53h4.71v4.69h-4.71zM312.78,573.62h4.71v4.69h-4.71zM255.30,577.71h8.81v4.69h-8.81zM271.72,581.80h4.71v4.69h-4.71zM353.83,581.80h4.71v4.69h-4.71zM386.68,581.80h4.71v4.69h-4.71zM284.04,585.89h4.71v4.69h-4.71zM390.78,585.89h4.71v4.69h-4.71zM394.89,589.98h8.81v4.69h-8.81zM345.62,598.17h4.71v4.69h-4.71zM370.26,598.17h4.71v4.69h-4.71zM353.83,602.26h4.71v4.69h-4.71zM366.15,602.26h4.71v4.69h-4.71zM370.26,618.62h4.71v4.69h-4.71zM366.15,622.72h4.71v4.69h-4.71zM284.04,626.81h4.71v4.69h-4.71zM275.83,630.90h4.71v4.69h-4.71zM288.14,630.90h4.71v4.69h-4.71zM337.41,630.90h4.71v4.69h-4.71zM374.36,630.90h4.71v4.69h-4.71zM271.72,634.99h4.71v4.69h-4.71zM329.20,634.99h4.71v4.69h-4.71zM374.36,634.99h4.71v4.69h-4.71zM263.51,639.08h4.71v4.69h-4.71zM333.31,639.08h4.71v4.69h-4.71zM292.25,643.17h4.71v4.69h-4.71zM337.41,643.17h4.71v4.69h-4.71zM255.30,647.27h8.81v4.69h-8.81zM292.25,647.27h4.71v4.69h-4.71zM320.99,647.27h4.71v4.69h-4.71zM292.25,651.36h4.71v4.69h-4.71zM320.99,651.36h4.71v4.69h-4.71zM288.14,655.45h4.71v4.69h-4.71zM308.67,655.45h17.02v4.69h-17.02zM284.04,659.54h4.71v4.69h-4.71zM320.99,659.54h4.71v4.69h-4.71zM362.04,659.54h4.71v4.69h-4.71zM362.04,663.63h4.71v4.69h-4.71zM279.93,671.82h4.71v4.69h-4.71zM329.20,671.82h4.71v4.69h-4.71zM357.94,671.82h4.71v4.69h-4.71zM279.93,675.91h4.71v4.69h-4.71zM329.20,675.91h4.71v4.69h-4.71zM357.94,675.91h4.71v4.69h-4.71z" fill="rgb(68, 55, 127)" shape-rendering="crispEdges"/>
<path d="M341.52,532.70h4.71v4.69h-4.71zM341.52,536.79h4.71v4.69h-4.71zM357.94,540.88h4.71v4.69h-4.71zM374.36,544.98h4.71v4.69h-4.71zM255.30,549.07h12.92v4.69h-12.92zM382.57,549.07h8.81v4.69h-8.81zM271.72,553.16h4.71v4.69h-4.71zM296.36,553.16h4.71v4.69h-4.71zM337.41,553.16h4.71v4.69h-4.71zM304.57,557.25h4.71v4.69h-4.71zM341.52,561.34h4.71v4.69h-4.71zM345.62,565.43h4.71v4.69h-4.71zM312.78,569.53h4.71v4.69h-4.71zM362.04,569.53h4.71v4.69h-4.71zM370.26,573.62h4.71v4.69h-4.71zM255.30,581.80h8.81v4.69h-8.81zM366.15,581.80h4.71v4.69h-4.71zM382.57,581.80h4.71v4.69h-4.71zM267.62,585.89h8.81v4.69h-8.81zM296.36,585.89h4.71v4.69h-4.71zM366.15,585.89h4.71v4.69h-4.71zM279.93,589.98h8.81v4.69h-8.81zM341.52,594.08h4.71v4.69h-4.71zM370.26,594.08h4.71v4.69h-4.71zM341.52,598.17h4.71v4.69h-4.71zM349.73,602.26h4.71v4.69h-4.71zM362.04,606.35h12.92v4.69h-12.92zM370.26,614.53h4.71v4.69h-4.71zM255.30,618.62h8.81v4.69h-8.81zM374.36,618.62h4.71v4.69h-4.71zM255.30,622.72h12.92v4.69h-12.92zM279.93,622.72h8.81v4.69h-8.81zM362.04,622.72h4.71v4.69h-4.71zM255.30,626.81h21.13v4.69h-21.13zM349.73,626.81h4.71v4.69h-4.71zM255.30,630.90h8.81v4.69h-8.81zM292.25,630.90h4.71v4.69h-4.71zM333.31,630.90h4.71v4.69h-4.71zM255.30,634.99h8.81v4.69h-8.81zM325.09,634.99h4.71v4.69h-4.71zM320.99,639.08h4.71v4.69h-4.71zM296.36,643.17h4.71v4.69h-4.71zM316.88,643.17h4.71v4.69h-4.71zM333.31,643.17h4.71v4.69h-4.71zM296.36,647.27h8.81v4.69h-8.81zM312.78,647.27h4.71v4.69h-4.71zM329.20,647.27h4.71v4.69h-4.71zM374.36,647.27h4.71v4.69h-4.71zM296.36,651.36h17.02v4.69h-17.02zM325.09,651.36h4.71v4.69h-4.71zM341.52,651.36h4.71v4.69h-4.71zM296.36,655.45h4.71v4.69h-4.71zM325.09,655.45h4.71v4.69h-4.71zM349.73,655.45h4.71v4.69h-4.71zM296.36,659.54h4.71v4.69h-4.71zM357.94,659.54h4.71v4.69h-4.71zM292.25,663.63h8.81v4.69h-8.81zM288.14,667.73h8.81v4.69h-8.81zM329.20,667.73h4.71v4.69h-4.71zM353.83,667.73h4.71v4.69h-4.71zM284.04,671.82h8.81v4.69h-8.81zM353.83,671.82h4.71v4.69h-4.71zM374.36,671.82h4.71v4.69h-4.71zM284.04,675.91h8.81v4.69h-8.81zM353.83,675.91h4.71v4.69h-4.71zM374.36,675.91h4.71v4.69h-4.71z" fill="rgb(61, 74, 136)" shape-rendering="crispEdges"/>
<path d="M345.62,532.70h4.71v4.69h-4.71zM345.62,536.79h4.71v4.69h-4.71zM304.57,540.88h4.71v4.69h-4.71zM362.04,540.88h4.71v4.69h-4.71zM316.88,544.98h21.13v4.69h-21.13zM378.47,544.98h4.71v4.69h-4.71zM267.62,549.07h21.13v4.69h-21.13zM390.78,549.07h12.92v4.69h-12.92zM300.46,553.16h4.71v4.69h-4.71zM337.41,557.25h4.71v4.69h-4.71zM308.67,561.34h4.71v4.69h-4.71zM312.78,565.43h4.71v4.69h-4.71zM357.94,569.53h4.71v4.69h-4.71zM316.88,573.62h4.71v4.69h-4.71zM312.78,577.71h4.71v4.69h-4.71zM362.04,577.71h12.92v4.69h-12.92zM304.57,581.80h4.71v4.69h-4.71zM341.52,581.80h4.71v4.69h-4.71zM374.36,581.80h8.81v4.69h-8.81zM255.30,585.89h12.92v4.69h-12.92zM337.41,585.89h4.71v4.69h-4.71zM386.68,585.89h4.71v4.69h-4.71zM255.30,589.98h25.23v4.69h-25.23zM288.14,589.98h8.81v4.69h-8.81zM337.41,589.98h4.71v4.69h-4.71zM370.26,589.98h4.71v4.69h-4.71zM390.78,589.98h4.71v4.69h-4.71zM255.30,594.08h12.92v4.69h-12.92zM394.89,594.08h8.81v4.69h-8.81zM255.30,598.17h8.81v4.69h-8.81zM255.30,602.26h8.81v4.69h-8.81zM255.30,606.35h8.81v4.69h-8.81zM357.94,606.35h4.71v4.69h-4.71zM255.30,610.44h8.81v4.69h-8.81zM370.26,610.44h4.71v4.69h-4.71zM255.30,614.53h12.92v4.69h-12.92zM366.15,614.53h4.71v4.69h-4.71zM263.51,618.62h8.81v4.69h-8.81zM275.83,618.62h12.92v4.69h-12.92zM362.04,618.62h4.71v4.69h-4.71zM267.62,622.72h12.92v4.69h-12.92zM288.14,622.72h4.71v4.69h-4.71zM357.94,622.72h4.71v4.69h-4.71zM292.25,626.81h4.71v4.69h-4.71zM345.62,626.81h4.71v4.69h-4.71zM329.20,630.90h4.71v4.69h-4.71zM378.47,630.90h4.71v4.69h-4.71zM296.36,634.99h4.71v4.69h-4.71zM320.99,634.99h4.71v4.69h-4.71zM378.47,634.99h4.71v4.69h-4.71zM296.36,639.08h8.81v4.69h-8.81zM316.88,639.08h4.71v4.69h-4.71zM300.46,643.17h8.81v4.69h-8.81zM312.78,643.17h4.71v4.69h-4.71zM304.57,647.27h8.81v4.69h-8.81zM333.31,647.27h4.71v4.69h-4.71zM329.20,651.36h4.71v4.69h-4.71zM337.41,651.36h4.71v4.69h-4.71zM374.36,651.36h4.71v4.69h-4.71zM325.09,659.54h4.71v4.69h-4.71zM353.83,663.63h4.71v4.69h-4.71zM296.36,667.73h4.71v4.69h-4.71zM374.36,667.73h4.71v4.69h-4.71zM292.25,671.82h8.81v4.69h-8.81zM333.31,671.82h4.71v4.69h-4.71zM349.73,671.82h4.71v4.69h-4.71zM292.25,675.91h8.81v4.69h-8.81zM333.31,675.91h4.71v4.69h-4.71zM349.73,675.91h4.71v4.69h-4.71z" fill="rgb(58, 83, 139)" shape-rendering="crispEdges"/>
<path d="M316.88,540.88h4.71v4.69h-4.71zM325.09,540.88h4.71v4.69h-4.71zM341.52,544.98h4.71v4.69h-4.71zM341.52,553.16h4.71v4.69h-4.71zM382.57,553.16h8.81v4.69h-8.81zM255.30,557.25h8.81v4.69h-8.81zM275.83,557.25h4.71v4.69h-4.71zM263.51,561.34h12.92v4.69h-12.92zM304.57,565.43h4.71v4.69h-4.71zM353.83,565.43h4.71v4.69h-4.71zM308.67,569.53h4.71v4.69h-4.71zM374.36,573.62h4.71v4.69h-4.71zM263.51,577.71h8.81v4.69h-8.81zM304.57,577.71h4.71v4.69h-4.71zM378.47,577.71h4.71v4.69h-4.71zM275.83,581.80h4.71v4.69h-4.71zM357.94,581.80h4.71v4.69h-4.71zM345.62,589.98h4.71v4.69h-4.71zM345.62,594.08h4.71v4.69h-4.71zM366.15,594.08h4.71v4.69h-4.71zM357.94,602.26h8.81v4.69h-8.81zM357.94,626.81h8.81v4.69h-8.81zM279.93,630.90h4.71v4.69h-4.71zM341.52,630.90h4.71v4.69h-4.71zM275.83,634.99h4.71v4.69h-4.71zM288.14,634.99h4.71v4.69h-4.71zM267.62,639.08h8.81v4.69h-8.81zM288.14,639.08h4.71v4.69h-4.71zM263.51,643.17h4.71v4.69h-4.71zM288.14,643.17h4.71v4.69h-4.71zM263.51,647.27h4.71v4.69h-4.71zM341.52,647.27h4.71v4.69h-4.71zM288.14,651.36h4.71v4.69h-4.71zM349.73,651.36h4.71v4.69h-4.71zM284.04,655.45h4.71v4.69h-4.71zM357.94,655.45h4.71v4.69h-4.71zM279.93,659.54h4.71v4.69h-4.71zM304.57,659.54h4.71v4.69h-4.71zM312.78,659.54h8.81v4.69h-8.81zM279.93,663.63h4.71v4.69h-4.71zM304.57,663.63h4.71v4.69h-4.71zM279.93,667.73h4.71v4.69h-4.71zM304.57,667.73h4.71v4.69h-4.71zM325.09,667.73h4.71v4.69h-4.71zM362.04,667.73h4.71v4.69h-4.71zM304.57,671.82h4.71v4.69h-4.71zM362.04,671.82h4.71v4.69h-4.71zM304.57,675.91h4.71v4.69h-4.71zM362.04,675.91h4.71v4.69h-4.71z" fill="rgb(71, 45, 123)" shape-rendering="crispEdges"/>
<path d="M345.62,553.16h4.71v4.69h-4.71zM374.36,553.16h4.71v4.69h-4.71zM284.04,557.25h4.71v4.69h-4.71zM349.73,557.25h4.71v4.69h-4.71zM382.57,557.25h12.92v4.69h-12.92zM275.83,565.43h4.71v4.69h-4.71zM300.46,565.43h4.71v4.69h-4.71zM366.15,565.43h4.71v4.69h-4.71zM275.83,569.53h4.71v4.69h-4.71zM378.47,573.62h4.71v4.69h-4.71zM279.93,577.71h4.71v4.69h-4.71zM386.68,577.71h4.71v4.69h-4.71zM353.83,585.89h4.71v4.69h-4.71zM353.83,589.98h4.71v4.69h-4.71zM353.83,594.08h4.71v4.69h-4.71zM353.83,598.17h4.71v4.69h-4.71zM362.04,598.17h4.71v4.69h-4.71zM353.83,630.90h12.92v4.69h-12.92zM341.52,639.08h4.71v4.69h-4.71zM271.72,647.27h12.92v4.69h-12.92zM271.72,651.36h8.81v4.69h-8.81zM357.94,651.36h12.92v4.69h-12.92zM255.30,655.45h21.13v4.69h-21.13zM271.72,659.54h4.71v4.69h-4.71zM271.72,663.63h4.71v4.69h-4.71zM271.72,667.73h4.71v4.69h-4.71zM316.88,667.73h8.81v4.69h-8.81zM271.72,671.82h4.71v4.69h-4.71zM312.78,671.82h4.71v4.69h-4.71zM271.72,675.91h4.71v4.69h-4.71zM312.78,675.91h4.71v4.69h-4.71z" fill="rgb(69, 12, 94)" shape-rendering="crispEdges"/>
<path d="M308.67,585.89h4.71v4.69h-4.71zM308.67,589.98h8.81v4.69h-8.81zM312.78,594.08h4.71v4.69h-4.71zM382.57,594.08h4.71v4.69h-4.71zM304.57,598.17h4.71v4.69h-4.71zM312.78,598.17h4.71v4.69h-4.71zM386.68,598.17h4.71v4.69h-4.71zM308.67,602.26h8.81v4.69h-8.81zM382.57,602.26h4.71v4.69h-4.71zM329.20,606.35h8.81v4.69h-8.81zM320.99,610.44h8.81v4.69h-8.81zM325.09,614.53h12.92v4.69h-12.92zM341.52,618.62h8.81v4.69h-8.81zM390.78,639.08h4.71v4.69h-4.71zM382.57,643.17h4.71v4.69h-4.71zM394.89,671.82h8.81v4.69h-8.81zM394.89,675.91h8.81v4.69h-8.81z" fill="rgb(34, 140, 141)" shape-rendering="crispEdges"/>
<path d="M308.67,594.08h4.71v4.69h-4.71zM308.67,598.17h4.71v4.69h-4.71zM382.57,598.17h4.71v4.69h-4.71zM329.20,610.44h8.81v4.69h-8.81zM349.73,610.44h4.71v4.69h-4.71zM337.41,614.53h12.92v4.69h-12.92zM394.89,639.08h8.81v4.69h-8.81zM386.68,643.17h4.71v4.69h-4.71zM382.57,647.27h4.71v4.69h-4.71zM378.47,655.45h4.71v4.69h-4.71zM378.47,663.63h4.71v4.69h-4.71zM386.68,671.82h8.81v4.69h-8.81zM386.68,675.91h8.81v4.69h-8.81z" fill="rgb(34, 148, 139)" shape-rendering="crispEdges"/>
<path d="M337.41,610.44h4.71v4.69h-4.71zM390.78,643.17h4.71v4.69h-4.71zM382.57,671.82h4.71v4.69h-4.71zM382.57,675.91h4.71v4.69h-4.71z" fill="rgb(35, 155, 136)" shape-rendering="crispEdges"/>
<path d="M341.52,610.44h8.81v4.69h-8.81zM394.89,643.17h8.81v4.69h-8.81zM386.68,647.27h4.71v4.69h-4.71zM378.47,659.54h4.71v4.69h-4.71z" fill="rgb(37, 163, 133)" shape-rendering="crispEdges"/>
<path d="M390.78,647.27h4.71v4.69h-4.71zM382.57,651.36h4.71v4.69h-4.71z" fill="rgb(38, 170, 130)" shape-rendering="crispEdges"/>
<path d="M394.89,647.27h8.81v4.69h-8.81zM382.57,667.73h21.13v4.69h-21.13z" fill="rgb(48, 177, 124)" shape-rendering="crispEdges"/>
<path d="M386.68,651.36h4.71v4.69h-4.71z" fill="rgb(61, 184, 116)" shape-rendering="crispEdges"/>
<path d="M390.78,651.36h4.71v4.69h-4.71z" fill="rgb(75, 191, 109)" shape-rendering="crispEdges"/>
<path d="M394.89,651.36h8.81v4.69h-8.81zM382.57,655.45h4.71v4.69h-4.71zM382.57,663.63h8.81v4.69h-8.81z" fill="rgb(89, 198, 101)" shape-rendering="crispEdges"/>
<path d="M386.68,655.45h4.71v4.69h-4.71zM390.78,663.63h4.71v4.69h-4.71z" fill="rgb(107, 204, 90)" shape-rendering="crispEdges"/>
<path d="M390.78,655.45h4.71v4.69h-4.71zM394.89,663.63h8.81v4.69h-8.81z" fill="rgb(127, 209, 77)" shape-rendering="crispEdges"/>
<path d="M394.89,655.45h8.81v4.69h-8.81zM382.57,659.54h4.71v4.69h-4.71z" fill="rgb(147, 214, 64)" shape-rendering="crispEdges"/>
<path d="M386.68,659.54h4.71v4.69h-4.71z" fill="rgb(167, 219, 52)" shape-rendering="crispEdges"/>
<path d="M390.78,659.54h4.71v4.69h-4.71z" fill="rgb(189, 222, 47)" shape-rendering="crispEdges"/>
<path d="M394.89,659.54h8.81v4.69h-8.81z" fill="rgb(210, 225, 44)" shape-rendering="crispEdges"/>
</g>
<rect x="255.3" y="532.7" width="147.8" height="147.3" fill="none" stroke="#222" stroke-width="1.1"/>
<rect x="279.6" y="557.5" width="98.1" height="98.1" fill="none" stroke="#ff0000" stroke-width="1.2"/>
<text x="328.60" y="546.50" font-size="11" font-family='"Liberation Sans", sans-serif' fill="#ff0000" text-anchor="middle" >N</text>
<text x="265.80" y="610.50" font-size="11" font-family='"Liberation Sans", sans-serif' fill="#ff0000" text-anchor="middle" >E</text>
<line x1="263.2" y1="680.0" x2="263.2" y2="683.5" stroke="#222" stroke-width="0.8"/>
<line x1="251.8" y1="671.9" x2="255.3" y2="671.9" stroke="#222" stroke-width="0.8"/>
<text x="263.20" y="695.70" font-size="10.6" font-family='"Liberation Sans", sans-serif' fill="#000" text-anchor="middle" textLength="13.6" lengthAdjust="spacingAndGlyphs" >−4</text>
<text x="249.30" y="675.70" font-size="10.6" font-family='"Liberation Sans", sans-serif' fill="#000" text-anchor="end" textLength="13.6" lengthAdjust="spacingAndGlyphs" >−4</text>
<line x1="295.9" y1="680.0" x2="295.9" y2="683.5" stroke="#222" stroke-width="0.8"/>
<line x1="251.8" y1="639.2" x2="255.3" y2="639.2" stroke="#222" stroke-width="0.8"/>
<text x="295.90" y="695.70" font-size="10.6" font-family='"Liberation Sans", sans-serif' fill="#000" text-anchor="middle" textLength="13.6" lengthAdjust="spacingAndGlyphs" >−2</text>
<text x="249.30" y="643.00" font-size="10.6" font-family='"Liberation Sans", sans-serif' fill="#000" text-anchor="end" textLength="13.6" lengthAdjust="spacingAndGlyphs" >−2</text>
<line x1="328.6" y1="680.0" x2="328.6" y2="683.5" stroke="#222" stroke-width="0.8"/>
<line x1="251.8" y1="606.5" x2="255.3" y2="606.5" stroke="#222" stroke-width="0.8"/>
<text x="328.60" y="695.70" font-size="10.6" font-family='"Liberation Sans", sans-serif' fill="#000" text-anchor="middle" >0</text>
<text x="249.30" y="610.30" font-size="10.6" font-family='"Liberation Sans", sans-serif' fill="#000" text-anchor="end" >0</text>
<line x1="361.3" y1="680.0" x2="361.3" y2="683.5" stroke="#222" stroke-width="0.8"/>
<line x1="251.8" y1="573.8" x2="255.3" y2="573.8" stroke="#222" stroke-width="0.8"/>
<text x="361.30" y="695.70" font-size="10.6" font-family='"Liberation Sans", sans-serif' fill="#000" text-anchor="middle" >2</text>
<text x="249.30" y="577.60" font-size="10.6" font-family='"Liberation Sans", sans-serif' fill="#000" text-anchor="end" >2</text>
<line x1="394.0" y1="680.0" x2="394.0" y2="683.5" stroke="#222" stroke-width="0.8"/>
<line x1="251.8" y1="541.1" x2="255.3" y2="541.1" stroke="#222" stroke-width="0.8"/>
<text x="394.00" y="695.70" font-size="10.6" font-family='"Liberation Sans", sans-serif' fill="#000" text-anchor="middle" >4</text>
<text x="249.30" y="544.90" font-size="10.6" font-family='"Liberation Sans", sans-serif' fill="#000" text-anchor="end" >4</text>
<text x="328.60" y="525.30" font-size="12.6" font-family='"Liberation Sans", sans-serif' fill="#000" text-anchor="middle" textLength="81.9" lengthAdjust="spacingAndGlyphs" >Lineflux Map</text>
<clipPath id="cphsc"><rect x="440.8" y="532.7" width="147.8" height="147.3"/></clipPath><g clip-path="url(#cphsc)">
<path d="M440.80,532.70h7.32v3.95h-7.32zM460.95,532.70h7.32v3.95h-7.32zM471.03,532.70h7.32v3.95h-7.32zM491.19,532.70h10.68v3.95h-10.68zM504.62,532.70h3.96v3.95h-3.96zM514.70,532.70h3.96v3.95h-3.96zM524.78,532.70h3.96v3.95h-3.96zM534.85,532.70h3.96v3.95h-3.96zM555.01,532.70h3.96v3.95h-3.96zM561.73,532.70h3.96v3.95h-3.96zM568.45,532.70h17.40v3.95h-17.40zM444.16,536.05h7.32v3.95h-7.32zM460.95,536.05h3.96v3.95h-3.96zM481.11,536.05h3.96v3.95h-3.96zM487.83,536.05h3.96v3.95h-3.96zM494.55,536.05h3.96v3.95h-3.96zM501.26,536.05h10.68v3.95h-10.68zM514.70,536.05h7.32v3.95h-7.32zM528.14,536.05h7.32v3.95h-7.32zM541.57,536.05h3.96v3.95h-3.96zM558.37,536.05h3.96v3.95h-3.96zM571.80,536.05h3.96v3.95h-3.96zM440.80,539.40h3.96v3.95h-3.96zM447.52,539.40h3.96v3.95h-3.96zM454.24,539.40h3.96v3.95h-3.96zM460.95,539.40h7.32v3.95h-7.32zM518.06,539.40h7.32v3.95h-7.32zM528.14,539.40h3.96v3.95h-3.96zM534.85,539.40h10.68v3.95h-10.68zM558.37,539.40h3.96v3.95h-3.96zM571.80,539.40h7.32v3.95h-7.32zM581.88,539.40h3.96v3.95h-3.96zM450.88,542.74h3.96v3.95h-3.96zM457.60,542.74h7.32v3.95h-7.32zM471.03,542.74h3.96v3.95h-3.96zM484.47,542.74h3.96v3.95h-3.96zM497.90,542.74h3.96v3.95h-3.96zM514.70,542.74h3.96v3.95h-3.96zM538.21,542.74h7.32v3.95h-7.32zM551.65,542.74h10.68v3.95h-10.68zM568.45,542.74h10.68v3.95h-10.68zM585.24,542.74h3.96v3.95h-3.96zM447.52,546.09h7.32v3.95h-7.32zM460.95,546.09h3.96v3.95h-3.96zM471.03,546.09h3.96v3.95h-3.96zM477.75,546.09h14.04v3.95h-14.04zM501.26,546.09h14.04v3.95h-14.04zM518.06,546.09h3.96v3.95h-3.96zM524.78,546.09h7.32v3.95h-7.32zM538.21,546.09h7.32v3.95h-7.32zM551.65,546.09h3.96v3.95h-3.96zM561.73,546.09h3.96v3.95h-3.96zM581.88,546.09h7.32v3.95h-7.32zM440.80,549.44h10.68v3.95h-10.68zM454.24,549.44h3.96v3.95h-3.96zM464.31,549.44h7.32v3.95h-7.32zM474.39,549.44h3.96v3.95h-3.96zM481.11,549.44h3.96v3.95h-3.96zM497.90,549.44h3.96v3.95h-3.96zM511.34,549.44h17.40v3.95h-17.40zM534.85,549.44h3.96v3.95h-3.96zM558.37,549.44h7.32v3.95h-7.32zM568.45,549.44h7.32v3.95h-7.32zM578.52,549.44h10.68v3.95h-10.68zM440.80,552.79h3.96v3.95h-3.96zM454.24,552.79h3.96v3.95h-3.96zM471.03,552.79h17.40v3.95h-17.40zM491.19,552.79h10.68v3.95h-10.68zM507.98,552.79h3.96v3.95h-3.96zM514.70,552.79h3.96v3.95h-3.96zM528.14,552.79h3.96v3.95h-3.96zM544.93,552.79h3.96v3.95h-3.96zM551.65,552.79h3.96v3.95h-3.96zM558.37,552.79h3.96v3.95h-3.96zM578.52,552.79h7.32v3.95h-7.32zM444.16,556.13h3.96v3.95h-3.96zM450.88,556.13h3.96v3.95h-3.96zM457.60,556.13h3.96v3.95h-3.96zM467.67,556.13h3.96v3.95h-3.96zM474.39,556.13h3.96v3.95h-3.96zM491.19,556.13h7.32v3.95h-7.32zM514.70,556.13h3.96v3.95h-3.96zM534.85,556.13h3.96v3.95h-3.96zM541.57,556.13h3.96v3.95h-3.96zM548.29,556.13h7.32v3.95h-7.32zM558.37,556.13h7.32v3.95h-7.32zM440.80,559.48h7.32v3.95h-7.32zM477.75,559.48h7.32v3.95h-7.32zM497.90,559.48h10.68v3.95h-10.68zM514.70,559.48h17.40v3.95h-17.40zM534.85,559.48h20.75v3.95h-20.75zM561.73,559.48h7.32v3.95h-7.32zM571.80,559.48h10.68v3.95h-10.68zM444.16,562.83h7.32v3.95h-7.32zM457.60,562.83h3.96v3.95h-3.96zM471.03,562.83h3.96v3.95h-3.96zM477.75,562.83h3.96v3.95h-3.96zM484.47,562.83h3.96v3.95h-3.96zM491.19,562.83h3.96v3.95h-3.96zM497.90,562.83h3.96v3.95h-3.96zM507.98,562.83h3.96v3.95h-3.96zM514.70,562.83h3.96v3.95h-3.96zM524.78,562.83h3.96v3.95h-3.96zM551.65,562.83h7.32v3.95h-7.32zM561.73,562.83h14.04v3.95h-14.04zM450.88,566.18h7.32v3.95h-7.32zM464.31,566.18h10.68v3.95h-10.68zM481.11,566.18h3.96v3.95h-3.96zM494.55,566.18h3.96v3.95h-3.96zM501.26,566.18h7.32v3.95h-7.32zM511.34,566.18h3.96v3.95h-3.96zM518.06,566.18h3.96v3.95h-3.96zM538.21,566.18h3.96v3.95h-3.96zM548.29,566.18h3.96v3.95h-3.96zM558.37,566.18h3.96v3.95h-3.96zM565.09,566.18h14.04v3.95h-14.04zM581.88,566.18h7.32v3.95h-7.32zM440.80,569.53h3.96v3.95h-3.96zM447.52,569.53h3.96v3.95h-3.96zM460.95,569.53h7.32v3.95h-7.32zM471.03,569.53h3.96v3.95h-3.96zM481.11,569.53h3.96v3.95h-3.96zM487.83,569.53h3.96v3.95h-3.96zM494.55,569.53h7.32v3.95h-7.32zM504.62,569.53h3.96v3.95h-3.96zM544.93,569.53h3.96v3.95h-3.96zM555.01,569.53h17.40v3.95h-17.40zM581.88,569.53h3.96v3.95h-3.96zM444.16,572.87h3.96v3.95h-3.96zM460.95,572.87h3.96v3.95h-3.96zM467.67,572.87h10.68v3.95h-10.68zM487.83,572.87h7.32v3.95h-7.32zM497.90,572.87h3.96v3.95h-3.96zM544.93,572.87h3.96v3.95h-3.96zM551.65,572.87h3.96v3.95h-3.96zM558.37,572.87h3.96v3.95h-3.96zM571.80,572.87h3.96v3.95h-3.96zM578.52,572.87h3.96v3.95h-3.96zM440.80,576.22h3.96v3.95h-3.96zM447.52,576.22h7.32v3.95h-7.32zM460.95,576.22h3.96v3.95h-3.96zM467.67,576.22h3.96v3.95h-3.96zM481.11,576.22h10.68v3.95h-10.68zM494.55,576.22h3.96v3.95h-3.96zM548.29,576.22h3.96v3.95h-3.96zM558.37,576.22h3.96v3.95h-3.96zM565.09,576.22h10.68v3.95h-10.68zM581.88,576.22h3.96v3.95h-3.96zM444.16,579.57h7.32v3.95h-7.32zM457.60,579.57h7.32v3.95h-7.32zM477.75,579.57h3.96v3.95h-3.96zM494.55,579.57h3.96v3.95h-3.96zM548.29,579.57h3.96v3.95h-3.96zM555.01,579.57h7.32v3.95h-7.32zM568.45,579.57h14.04v3.95h-14.04zM585.24,579.57h3.96v3.95h-3.96zM444.16,582.92h3.96v3.95h-3.96zM460.95,582.92h7.32v3.95h-7.32zM474.39,582.92h7.32v3.95h-7.32zM491.19,582.92h10.68v3.95h-10.68zM561.73,582.92h3.96v3.95h-3.96zM575.16,582.92h14.04v3.95h-14.04zM444.16,586.26h7.32v3.95h-7.32zM457.60,586.26h3.96v3.95h-3.96zM481.11,586.26h7.32v3.95h-7.32zM494.55,586.26h3.96v3.95h-3.96zM551.65,586.26h10.68v3.95h-10.68zM585.24,586.26h3.96v3.95h-3.96zM440.80,589.61h3.96v3.95h-3.96zM460.95,589.61h10.68v3.95h-10.68zM474.39,589.61h7.32v3.95h-7.32zM484.47,589.61h3.96v3.95h-3.96zM491.19,589.61h7.32v3.95h-7.32zM555.01,589.61h7.32v3.95h-7.32zM565.09,589.61h7.32v3.95h-7.32zM575.16,589.61h7.32v3.95h-7.32zM440.80,592.96h3.96v3.95h-3.96zM447.52,592.96h3.96v3.95h-3.96zM454.24,592.96h3.96v3.95h-3.96zM460.95,592.96h3.96v3.95h-3.96zM467.67,592.96h10.68v3.95h-10.68zM494.55,592.96h3.96v3.95h-3.96zM565.09,592.96h14.04v3.95h-14.04zM581.88,592.96h3.96v3.95h-3.96zM440.80,596.31h7.32v3.95h-7.32zM457.60,596.31h3.96v3.95h-3.96zM471.03,596.31h3.96v3.95h-3.96zM477.75,596.31h10.68v3.95h-10.68zM491.19,596.31h3.96v3.95h-3.96zM561.73,596.31h7.32v3.95h-7.32zM571.80,596.31h10.68v3.95h-10.68zM444.16,599.65h7.32v3.95h-7.32zM454.24,599.65h3.96v3.95h-3.96zM464.31,599.65h10.68v3.95h-10.68zM477.75,599.65h7.32v3.95h-7.32zM491.19,599.65h3.96v3.95h-3.96zM558.37,599.65h3.96v3.95h-3.96zM565.09,599.65h7.32v3.95h-7.32zM450.88,603.00h7.32v3.95h-7.32zM474.39,603.00h17.40v3.95h-17.40zM494.55,603.00h3.96v3.95h-3.96zM555.01,603.00h3.96v3.95h-3.96zM565.09,603.00h3.96v3.95h-3.96zM578.52,603.00h3.96v3.95h-3.96zM440.80,606.35h3.96v3.95h-3.96zM450.88,606.35h3.96v3.95h-3.96zM464.31,606.35h10.68v3.95h-10.68zM477.75,606.35h7.32v3.95h-7.32zM491.19,606.35h7.32v3.95h-7.32zM578.52,606.35h3.96v3.95h-3.96zM585.24,606.35h3.96v3.95h-3.96zM444.16,609.70h3.96v3.95h-3.96zM477.75,609.70h3.96v3.95h-3.96zM491.19,609.70h14.04v3.95h-14.04zM558.37,609.70h3.96v3.95h-3.96zM565.09,609.70h7.32v3.95h-7.32zM578.52,609.70h3.96v3.95h-3.96zM450.88,613.05h3.96v3.95h-3.96zM460.95,613.05h3.96v3.95h-3.96zM467.67,613.05h3.96v3.95h-3.96zM477.75,613.05h3.96v3.95h-3.96zM487.83,613.05h3.96v3.95h-3.96zM501.26,613.05h3.96v3.95h-3.96zM561.73,613.05h3.96v3.95h-3.96zM568.45,613.05h7.32v3.95h-7.32zM578.52,613.05h3.96v3.95h-3.96zM585.24,613.05h3.96v3.95h-3.96zM440.80,616.39h3.96v3.95h-3.96zM471.03,616.39h3.96v3.95h-3.96zM491.19,616.39h3.96v3.95h-3.96zM558.37,616.39h7.32v3.95h-7.32zM571.80,616.39h3.96v3.95h-3.96zM578.52,616.39h10.68v3.95h-10.68zM444.16,619.74h14.04v3.95h-14.04zM460.95,619.74h7.32v3.95h-7.32zM477.75,619.74h3.96v3.95h-3.96zM491.19,619.74h3.96v3.95h-3.96zM497.90,619.74h10.68v3.95h-10.68zM555.01,619.74h20.75v3.95h-20.75zM581.88,619.74h7.32v3.95h-7.32zM444.16,623.09h3.96v3.95h-3.96zM457.60,623.09h3.96v3.95h-3.96zM464.31,623.09h3.96v3.95h-3.96zM474.39,623.09h3.96v3.95h-3.96zM491.19,623.09h17.40v3.95h-17.40zM511.34,623.09h3.96v3.95h-3.96zM561.73,623.09h3.96v3.95h-3.96zM575.16,623.09h3.96v3.95h-3.96zM581.88,623.09h7.32v3.95h-7.32zM444.16,626.44h10.68v3.95h-10.68zM464.31,626.44h3.96v3.95h-3.96zM471.03,626.44h3.96v3.95h-3.96zM484.47,626.44h3.96v3.95h-3.96zM501.26,626.44h7.32v3.95h-7.32zM524.78,626.44h3.96v3.95h-3.96zM531.50,626.44h3.96v3.95h-3.96zM561.73,626.44h3.96v3.95h-3.96zM568.45,626.44h3.96v3.95h-3.96zM575.16,626.44h3.96v3.95h-3.96zM581.88,626.44h7.32v3.95h-7.32zM447.52,629.78h3.96v3.95h-3.96zM481.11,629.78h3.96v3.95h-3.96zM491.19,629.78h3.96v3.95h-3.96zM497.90,629.78h10.68v3.95h-10.68zM511.34,629.78h3.96v3.95h-3.96zM518.06,629.78h3.96v3.95h-3.96zM531.50,629.78h3.96v3.95h-3.96zM575.16,629.78h3.96v3.95h-3.96zM444.16,633.13h7.32v3.95h-7.32zM457.60,633.13h3.96v3.95h-3.96zM464.31,633.13h17.40v3.95h-17.40zM484.47,633.13h20.75v3.95h-20.75zM511.34,633.13h7.32v3.95h-7.32zM524.78,633.13h7.32v3.95h-7.32zM534.85,633.13h3.96v3.95h-3.96zM555.01,633.13h3.96v3.95h-3.96zM561.73,633.13h3.96v3.95h-3.96zM568.45,633.13h3.96v3.95h-3.96zM585.24,633.13h3.96v3.95h-3.96zM447.52,636.48h7.32v3.95h-7.32zM457.60,636.48h17.40v3.95h-17.40zM484.47,636.48h3.96v3.95h-3.96zM501.26,636.48h3.96v3.95h-3.96zM521.42,636.48h7.32v3.95h-7.32zM538.21,636.48h7.32v3.95h-7.32zM558.37,636.48h20.75v3.95h-20.75zM447.52,639.83h10.68v3.95h-10.68zM464.31,639.83h7.32v3.95h-7.32zM474.39,639.83h3.96v3.95h-3.96zM484.47,639.83h3.96v3.95h-3.96zM491.19,639.83h3.96v3.95h-3.96zM497.90,639.83h3.96v3.95h-3.96zM507.98,639.83h7.32v3.95h-7.32zM518.06,639.83h3.96v3.95h-3.96zM538.21,639.83h3.96v3.95h-3.96zM544.93,639.83h10.68v3.95h-10.68zM558.37,639.83h3.96v3.95h-3.96zM571.80,639.83h3.96v3.95h-3.96zM444.16,643.17h3.96v3.95h-3.96zM454.24,643.17h10.68v3.95h-10.68zM467.67,643.17h10.68v3.95h-10.68zM484.47,643.17h3.96v3.95h-3.96zM491.19,643.17h7.32v3.95h-7.32zM504.62,643.17h7.32v3.95h-7.32zM514.70,643.17h7.32v3.95h-7.32zM531.50,643.17h10.68v3.95h-10.68zM565.09,643.17h3.96v3.95h-3.96zM578.52,643.17h3.96v3.95h-3.96zM440.80,646.52h3.96v3.95h-3.96zM450.88,646.52h7.32v3.95h-7.32zM460.95,646.52h10.68v3.95h-10.68zM477.75,646.52h3.96v3.95h-3.96zM494.55,646.52h3.96v3.95h-3.96zM504.62,646.52h10.68v3.95h-10.68zM518.06,646.52h3.96v3.95h-3.96zM524.78,646.52h3.96v3.95h-3.96zM531.50,646.52h10.68v3.95h-10.68zM544.93,646.52h3.96v3.95h-3.96zM551.65,646.52h3.96v3.95h-3.96zM558.37,646.52h3.96v3.95h-3.96zM568.45,646.52h3.96v3.95h-3.96zM575.16,646.52h10.68v3.95h-10.68zM440.80,649.87h3.96v3.95h-3.96zM447.52,649.87h7.32v3.95h-7.32zM460.95,649.87h3.96v3.95h-3.96zM471.03,649.87h3.96v3.95h-3.96zM477.75,649.87h7.32v3.95h-7.32zM501.26,649.87h3.96v3.95h-3.96zM514.70,649.87h7.32v3.95h-7.32zM538.21,649.87h3.96v3.95h-3.96zM548.29,649.87h3.96v3.95h-3.96zM571.80,649.87h3.96v3.95h-3.96zM578.52,649.87h7.32v3.95h-7.32zM440.80,653.22h3.96v3.95h-3.96zM450.88,653.22h3.96v3.95h-3.96zM460.95,653.22h10.68v3.95h-10.68zM474.39,653.22h3.96v3.95h-3.96zM491.19,653.22h7.32v3.95h-7.32zM511.34,653.22h3.96v3.95h-3.96zM524.78,653.22h7.32v3.95h-7.32zM534.85,653.22h10.68v3.95h-10.68zM578.52,653.22h7.32v3.95h-7.32zM447.52,656.57h7.32v3.95h-7.32zM460.95,656.57h3.96v3.95h-3.96zM467.67,656.57h3.96v3.95h-3.96zM474.39,656.57h3.96v3.95h-3.96zM481.11,656.57h24.11v3.95h-24.11zM507.98,656.57h10.68v3.95h-10.68zM524.78,656.57h7.32v3.95h-7.32zM534.85,656.57h3.96v3.95h-3.96zM541.57,656.57h7.32v3.95h-7.32zM585.24,656.57h3.96v3.95h-3.96zM444.16,659.91h3.96v3.95h-3.96zM454.24,659.91h3.96v3.95h-3.96zM464.31,659.91h3.96v3.95h-3.96zM481.11,659.91h3.96v3.95h-3.96zM487.83,659.91h3.96v3.95h-3.96zM507.98,659.91h3.96v3.95h-3.96zM514.70,659.91h7.32v3.95h-7.32zM534.85,659.91h3.96v3.95h-3.96zM581.88,659.91h3.96v3.95h-3.96zM457.60,663.26h7.32v3.95h-7.32zM467.67,663.26h10.68v3.95h-10.68zM481.11,663.26h3.96v3.95h-3.96zM487.83,663.26h3.96v3.95h-3.96zM494.55,663.26h3.96v3.95h-3.96zM504.62,663.26h14.04v3.95h-14.04zM521.42,663.26h3.96v3.95h-3.96zM531.50,663.26h7.32v3.95h-7.32zM544.93,663.26h3.96v3.95h-3.96zM578.52,663.26h7.32v3.95h-7.32zM454.24,666.61h3.96v3.95h-3.96zM460.95,666.61h10.68v3.95h-10.68zM477.75,666.61h7.32v3.95h-7.32zM494.55,666.61h3.96v3.95h-3.96zM501.26,666.61h3.96v3.95h-3.96zM507.98,666.61h10.68v3.95h-10.68zM524.78,666.61h3.96v3.95h-3.96zM531.50,666.61h3.96v3.95h-3.96zM551.65,666.61h3.96v3.95h-3.96zM585.24,666.61h3.96v3.95h-3.96zM440.80,669.96h3.96v3.95h-3.96zM447.52,669.96h3.96v3.95h-3.96zM454.24,669.96h3.96v3.95h-3.96zM474.39,669.96h3.96v3.95h-3.96zM481.11,669.96h3.96v3.95h-3.96zM504.62,669.96h3.96v3.95h-3.96zM511.34,669.96h3.96v3.95h-3.96zM521.42,669.96h10.68v3.95h-10.68zM534.85,669.96h3.96v3.95h-3.96zM541.57,669.96h3.96v3.95h-3.96zM548.29,669.96h7.32v3.95h-7.32zM585.24,669.96h3.96v3.95h-3.96zM440.80,673.30h3.96v3.95h-3.96zM447.52,673.30h3.96v3.95h-3.96zM457.60,673.30h3.96v3.95h-3.96zM464.31,673.30h3.96v3.95h-3.96zM474.39,673.30h10.68v3.95h-10.68zM487.83,673.30h7.32v3.95h-7.32zM497.90,673.30h3.96v3.95h-3.96zM511.34,673.30h3.96v3.95h-3.96zM521.42,673.30h7.32v3.95h-7.32zM534.85,673.30h3.96v3.95h-3.96zM548.29,673.30h3.96v3.95h-3.96zM565.09,673.30h3.96v3.95h-3.96zM575.16,673.30h3.96v3.95h-3.96zM581.88,673.30h3.96v3.95h-3.96zM447.52,676.65h3.96v3.95h-3.96zM454.24,676.65h3.96v3.95h-3.96zM471.03,676.65h3.96v3.95h-3.96zM477.75,676.65h3.96v3.95h-3.96zM487.83,676.65h3.96v3.95h-3.96zM494.55,676.65h7.32v3.95h-7.32zM511.34,676.65h3.96v3.95h-3.96zM528.14,676.65h14.04v3.95h-14.04zM544.93,676.65h3.96v3.95h-3.96zM555.01,676.65h3.96v3.95h-3.96zM568.45,676.65h3.96v3.95h-3.96zM581.88,676.65h3.96v3.95h-3.96z" fill="rgb(217, 217, 217)" shape-rendering="crispEdges"/>
<path d="M447.52,532.70h3.96v3.95h-3.96zM454.24,532.70h3.96v3.95h-3.96zM467.67,532.70h3.96v3.95h-3.96zM477.75,532.70h7.32v3.95h-7.32zM487.83,532.70h3.96v3.95h-3.96zM528.14,532.70h7.32v3.95h-7.32zM538.21,532.70h10.68v3.95h-10.68zM558.37,532.70h3.96v3.95h-3.96zM565.09,532.70h3.96v3.95h-3.96zM440.80,536.05h3.96v3.95h-3.96zM454.24,536.05h3.96v3.95h-3.96zM464.31,536.05h10.68v3.95h-10.68zM477.75,536.05h3.96v3.95h-3.96zM484.47,536.05h3.96v3.95h-3.96zM497.90,536.05h3.96v3.95h-3.96zM511.34,536.05h3.96v3.95h-3.96zM521.42,536.05h7.32v3.95h-7.32zM555.01,536.05h3.96v3.95h-3.96zM561.73,536.05h3.96v3.95h-3.96zM575.16,536.05h14.04v3.95h-14.04zM481.11,539.40h3.96v3.95h-3.96zM491.19,539.40h10.68v3.95h-10.68zM504.62,539.40h3.96v3.95h-3.96zM551.65,539.40h3.96v3.95h-3.96zM578.52,539.40h3.96v3.95h-3.96zM444.16,542.74h7.32v3.95h-7.32zM464.31,542.74h3.96v3.95h-3.96zM477.75,542.74h7.32v3.95h-7.32zM487.83,542.74h3.96v3.95h-3.96zM494.55,542.74h3.96v3.95h-3.96zM504.62,542.74h3.96v3.95h-3.96zM518.06,542.74h3.96v3.95h-3.96zM528.14,542.74h3.96v3.95h-3.96zM544.93,542.74h3.96v3.95h-3.96zM561.73,542.74h7.32v3.95h-7.32zM464.31,546.09h3.96v3.95h-3.96zM474.39,546.09h3.96v3.95h-3.96zM491.19,546.09h3.96v3.95h-3.96zM514.70,546.09h3.96v3.95h-3.96zM534.85,546.09h3.96v3.95h-3.96zM555.01,546.09h3.96v3.95h-3.96zM565.09,546.09h3.96v3.95h-3.96zM571.80,546.09h7.32v3.95h-7.32zM450.88,549.44h3.96v3.95h-3.96zM457.60,549.44h7.32v3.95h-7.32zM477.75,549.44h3.96v3.95h-3.96zM487.83,549.44h3.96v3.95h-3.96zM494.55,549.44h3.96v3.95h-3.96zM507.98,549.44h3.96v3.95h-3.96zM528.14,549.44h7.32v3.95h-7.32zM538.21,549.44h7.32v3.95h-7.32zM548.29,549.44h7.32v3.95h-7.32zM460.95,552.79h3.96v3.95h-3.96zM501.26,552.79h3.96v3.95h-3.96zM531.50,552.79h7.32v3.95h-7.32zM541.57,552.79h3.96v3.95h-3.96zM548.29,552.79h3.96v3.95h-3.96zM555.01,552.79h3.96v3.95h-3.96zM568.45,552.79h3.96v3.95h-3.96zM585.24,552.79h3.96v3.95h-3.96zM447.52,556.13h3.96v3.95h-3.96zM454.24,556.13h3.96v3.95h-3.96zM464.31,556.13h3.96v3.95h-3.96zM471.03,556.13h3.96v3.95h-3.96zM477.75,556.13h3.96v3.95h-3.96zM484.47,556.13h7.32v3.95h-7.32zM497.90,556.13h3.96v3.95h-3.96zM504.62,556.13h3.96v3.95h-3.96zM511.34,556.13h3.96v3.95h-3.96zM521.42,556.13h7.32v3.95h-7.32zM531.50,556.13h3.96v3.95h-3.96zM555.01,556.13h3.96v3.95h-3.96zM565.09,556.13h7.32v3.95h-7.32zM575.16,556.13h7.32v3.95h-7.32zM585.24,556.13h3.96v3.95h-3.96zM450.88,559.48h3.96v3.95h-3.96zM471.03,559.48h3.96v3.95h-3.96zM484.47,559.48h3.96v3.95h-3.96zM511.34,559.48h3.96v3.95h-3.96zM555.01,559.48h7.32v3.95h-7.32zM568.45,559.48h3.96v3.95h-3.96zM585.24,559.48h3.96v3.95h-3.96zM440.80,562.83h3.96v3.95h-3.96zM450.88,562.83h3.96v3.95h-3.96zM464.31,562.83h3.96v3.95h-3.96zM474.39,562.83h3.96v3.95h-3.96zM481.11,562.83h3.96v3.95h-3.96zM487.83,562.83h3.96v3.95h-3.96zM504.62,562.83h3.96v3.95h-3.96zM528.14,562.83h7.32v3.95h-7.32zM541.57,562.83h3.96v3.95h-3.96zM558.37,562.83h3.96v3.95h-3.96zM575.16,562.83h3.96v3.95h-3.96zM440.80,566.18h7.32v3.95h-7.32zM457.60,566.18h7.32v3.95h-7.32zM474.39,566.18h7.32v3.95h-7.32zM487.83,566.18h3.96v3.95h-3.96zM524.78,566.18h10.68v3.95h-10.68zM544.93,566.18h3.96v3.95h-3.96zM555.01,566.18h3.96v3.95h-3.96zM561.73,566.18h3.96v3.95h-3.96zM578.52,566.18h3.96v3.95h-3.96zM450.88,569.53h3.96v3.95h-3.96zM457.60,569.53h3.96v3.95h-3.96zM467.67,569.53h3.96v3.95h-3.96zM491.19,569.53h3.96v3.95h-3.96zM571.80,569.53h3.96v3.95h-3.96zM585.24,569.53h3.96v3.95h-3.96zM454.24,572.87h7.32v3.95h-7.32zM464.31,572.87h3.96v3.95h-3.96zM477.75,572.87h3.96v3.95h-3.96zM484.47,572.87h3.96v3.95h-3.96zM494.55,572.87h3.96v3.95h-3.96zM565.09,572.87h3.96v3.95h-3.96zM581.88,572.87h7.32v3.95h-7.32zM471.03,576.22h7.32v3.95h-7.32zM575.16,576.22h3.96v3.95h-3.96zM585.24,576.22h3.96v3.95h-3.96zM464.31,579.57h3.96v3.95h-3.96zM481.11,579.57h3.96v3.95h-3.96zM440.80,582.92h3.96v3.95h-3.96zM471.03,582.92h3.96v3.95h-3.96zM487.83,582.92h3.96v3.95h-3.96zM565.09,582.92h3.96v3.95h-3.96zM571.80,582.92h3.96v3.95h-3.96zM440.80,586.26h3.96v3.95h-3.96zM460.95,586.26h10.68v3.95h-10.68zM477.75,586.26h3.96v3.95h-3.96zM561.73,586.26h24.11v3.95h-24.11zM444.16,589.61h3.96v3.95h-3.96zM457.60,589.61h3.96v3.95h-3.96zM481.11,589.61h3.96v3.95h-3.96zM487.83,589.61h3.96v3.95h-3.96zM561.73,589.61h3.96v3.95h-3.96zM444.16,592.96h3.96v3.95h-3.96zM450.88,592.96h3.96v3.95h-3.96zM464.31,592.96h3.96v3.95h-3.96zM481.11,592.96h3.96v3.95h-3.96zM491.19,592.96h3.96v3.95h-3.96zM558.37,592.96h3.96v3.95h-3.96zM454.24,596.31h3.96v3.95h-3.96zM464.31,596.31h7.32v3.95h-7.32zM474.39,596.31h3.96v3.95h-3.96zM487.83,596.31h3.96v3.95h-3.96zM555.01,596.31h3.96v3.95h-3.96zM568.45,596.31h3.96v3.95h-3.96zM450.88,599.65h3.96v3.95h-3.96zM457.60,599.65h3.96v3.95h-3.96zM474.39,599.65h3.96v3.95h-3.96zM484.47,599.65h7.32v3.95h-7.32zM494.55,599.65h3.96v3.95h-3.96zM571.80,599.65h7.32v3.95h-7.32zM581.88,599.65h7.32v3.95h-7.32zM457.60,603.00h3.96v3.95h-3.96zM464.31,603.00h3.96v3.95h-3.96zM471.03,603.00h3.96v3.95h-3.96zM558.37,603.00h3.96v3.95h-3.96zM571.80,603.00h7.32v3.95h-7.32zM585.24,603.00h3.96v3.95h-3.96zM484.47,606.35h7.32v3.95h-7.32zM555.01,606.35h3.96v3.95h-3.96zM561.73,606.35h3.96v3.95h-3.96zM568.45,606.35h7.32v3.95h-7.32zM581.88,606.35h3.96v3.95h-3.96zM447.52,609.70h3.96v3.95h-3.96zM454.24,609.70h3.96v3.95h-3.96zM474.39,609.70h3.96v3.95h-3.96zM487.83,609.70h3.96v3.95h-3.96zM575.16,609.70h3.96v3.95h-3.96zM581.88,609.70h3.96v3.95h-3.96zM444.16,613.05h3.96v3.95h-3.96zM454.24,613.05h7.32v3.95h-7.32zM471.03,613.05h3.96v3.95h-3.96zM481.11,613.05h7.32v3.95h-7.32zM494.55,613.05h7.32v3.95h-7.32zM548.29,613.05h3.96v3.95h-3.96zM555.01,613.05h7.32v3.95h-7.32zM565.09,613.05h3.96v3.95h-3.96zM575.16,613.05h3.96v3.95h-3.96zM581.88,613.05h3.96v3.95h-3.96zM447.52,616.39h10.68v3.95h-10.68zM460.95,616.39h7.32v3.95h-7.32zM477.75,616.39h3.96v3.95h-3.96zM484.47,616.39h3.96v3.95h-3.96zM497.90,616.39h3.96v3.95h-3.96zM551.65,616.39h3.96v3.95h-3.96zM568.45,616.39h3.96v3.95h-3.96zM575.16,616.39h3.96v3.95h-3.96zM440.80,619.74h3.96v3.95h-3.96zM457.60,619.74h3.96v3.95h-3.96zM481.11,619.74h7.32v3.95h-7.32zM494.55,619.74h3.96v3.95h-3.96zM578.52,619.74h3.96v3.95h-3.96zM447.52,623.09h7.32v3.95h-7.32zM460.95,623.09h3.96v3.95h-3.96zM467.67,623.09h3.96v3.95h-3.96zM477.75,623.09h3.96v3.95h-3.96zM484.47,623.09h3.96v3.95h-3.96zM440.80,626.44h3.96v3.95h-3.96zM457.60,626.44h7.32v3.95h-7.32zM467.67,626.44h3.96v3.95h-3.96zM477.75,626.44h3.96v3.95h-3.96zM518.06,626.44h3.96v3.95h-3.96zM528.14,626.44h3.96v3.95h-3.96zM558.37,626.44h3.96v3.95h-3.96zM571.80,626.44h3.96v3.95h-3.96zM578.52,626.44h3.96v3.95h-3.96zM444.16,629.78h3.96v3.95h-3.96zM450.88,629.78h14.04v3.95h-14.04zM477.75,629.78h3.96v3.95h-3.96zM484.47,629.78h7.32v3.95h-7.32zM494.55,629.78h3.96v3.95h-3.96zM528.14,629.78h3.96v3.95h-3.96zM558.37,629.78h3.96v3.95h-3.96zM565.09,629.78h3.96v3.95h-3.96zM571.80,629.78h3.96v3.95h-3.96zM578.52,629.78h3.96v3.95h-3.96zM460.95,633.13h3.96v3.95h-3.96zM504.62,633.13h3.96v3.95h-3.96zM521.42,633.13h3.96v3.95h-3.96zM531.50,633.13h3.96v3.95h-3.96zM565.09,633.13h3.96v3.95h-3.96zM581.88,633.13h3.96v3.95h-3.96zM440.80,636.48h3.96v3.95h-3.96zM474.39,636.48h3.96v3.95h-3.96zM481.11,636.48h3.96v3.95h-3.96zM494.55,636.48h7.32v3.95h-7.32zM504.62,636.48h3.96v3.95h-3.96zM518.06,636.48h3.96v3.95h-3.96zM528.14,636.48h7.32v3.95h-7.32zM551.65,636.48h3.96v3.95h-3.96zM578.52,636.48h10.68v3.95h-10.68zM440.80,639.83h3.96v3.95h-3.96zM457.60,639.83h3.96v3.95h-3.96zM481.11,639.83h3.96v3.95h-3.96zM494.55,639.83h3.96v3.95h-3.96zM514.70,639.83h3.96v3.95h-3.96zM521.42,639.83h3.96v3.95h-3.96zM528.14,639.83h3.96v3.95h-3.96zM541.57,639.83h3.96v3.95h-3.96zM561.73,639.83h3.96v3.95h-3.96zM568.45,639.83h3.96v3.95h-3.96zM575.16,639.83h14.04v3.95h-14.04zM447.52,643.17h7.32v3.95h-7.32zM464.31,643.17h3.96v3.95h-3.96zM487.83,643.17h3.96v3.95h-3.96zM548.29,643.17h3.96v3.95h-3.96zM571.80,643.17h3.96v3.95h-3.96zM447.52,646.52h3.96v3.95h-3.96zM471.03,646.52h7.32v3.95h-7.32zM497.90,646.52h3.96v3.95h-3.96zM528.14,646.52h3.96v3.95h-3.96zM541.57,646.52h3.96v3.95h-3.96zM555.01,646.52h3.96v3.95h-3.96zM454.24,649.87h7.32v3.95h-7.32zM464.31,649.87h3.96v3.95h-3.96zM474.39,649.87h3.96v3.95h-3.96zM484.47,649.87h3.96v3.95h-3.96zM491.19,649.87h3.96v3.95h-3.96zM497.90,649.87h3.96v3.95h-3.96zM504.62,649.87h7.32v3.95h-7.32zM541.57,649.87h3.96v3.95h-3.96zM444.16,653.22h3.96v3.95h-3.96zM457.60,653.22h3.96v3.95h-3.96zM471.03,653.22h3.96v3.95h-3.96zM487.83,653.22h3.96v3.95h-3.96zM501.26,653.22h10.68v3.95h-10.68zM521.42,653.22h3.96v3.95h-3.96zM531.50,653.22h3.96v3.95h-3.96zM544.93,653.22h3.96v3.95h-3.96zM440.80,656.57h7.32v3.95h-7.32zM504.62,656.57h3.96v3.95h-3.96zM531.50,656.57h3.96v3.95h-3.96zM538.21,656.57h3.96v3.95h-3.96zM581.88,656.57h3.96v3.95h-3.96zM440.80,659.91h3.96v3.95h-3.96zM447.52,659.91h7.32v3.95h-7.32zM477.75,659.91h3.96v3.95h-3.96zM494.55,659.91h3.96v3.95h-3.96zM511.34,659.91h3.96v3.95h-3.96zM521.42,659.91h3.96v3.95h-3.96zM528.14,659.91h3.96v3.95h-3.96zM585.24,659.91h3.96v3.95h-3.96zM450.88,663.26h3.96v3.95h-3.96zM477.75,663.26h3.96v3.95h-3.96zM491.19,663.26h3.96v3.95h-3.96zM518.06,663.26h3.96v3.95h-3.96zM524.78,663.26h3.96v3.95h-3.96zM538.21,663.26h3.96v3.95h-3.96zM444.16,666.61h10.68v3.95h-10.68zM487.83,666.61h3.96v3.95h-3.96zM497.90,666.61h3.96v3.95h-3.96zM521.42,666.61h3.96v3.95h-3.96zM581.88,666.61h3.96v3.95h-3.96zM450.88,669.96h3.96v3.95h-3.96zM467.67,669.96h7.32v3.95h-7.32zM477.75,669.96h3.96v3.95h-3.96zM484.47,669.96h3.96v3.95h-3.96zM497.90,669.96h7.32v3.95h-7.32zM518.06,669.96h3.96v3.95h-3.96zM531.50,669.96h3.96v3.95h-3.96zM444.16,673.30h3.96v3.95h-3.96zM450.88,673.30h7.32v3.95h-7.32zM494.55,673.30h3.96v3.95h-3.96zM518.06,673.30h3.96v3.95h-3.96zM544.93,673.30h3.96v3.95h-3.96zM585.24,673.30h3.96v3.95h-3.96zM440.80,676.65h7.32v3.95h-7.32zM450.88,676.65h3.96v3.95h-3.96zM457.60,676.65h3.96v3.95h-3.96zM481.11,676.65h7.32v3.95h-7.32zM521.42,676.65h7.32v3.95h-7.32zM541.57,676.65h3.96v3.95h-3.96zM551.65,676.65h3.96v3.95h-3.96zM575.16,676.65h7.32v3.95h-7.32z" fill="rgb(226, 226, 226)" shape-rendering="crispEdges"/>
<path d="M450.88,532.70h3.96v3.95h-3.96zM457.60,532.70h3.96v3.95h-3.96zM484.47,532.70h3.96v3.95h-3.96zM501.26,532.70h3.96v3.95h-3.96zM507.98,532.70h7.32v3.95h-7.32zM521.42,532.70h3.96v3.95h-3.96zM548.29,532.70h7.32v3.95h-7.32zM450.88,536.05h3.96v3.95h-3.96zM457.60,536.05h3.96v3.95h-3.96zM474.39,536.05h3.96v3.95h-3.96zM534.85,536.05h7.32v3.95h-7.32zM565.09,536.05h3.96v3.95h-3.96zM444.16,539.40h3.96v3.95h-3.96zM450.88,539.40h3.96v3.95h-3.96zM467.67,539.40h3.96v3.95h-3.96zM477.75,539.40h3.96v3.95h-3.96zM484.47,539.40h7.32v3.95h-7.32zM501.26,539.40h3.96v3.95h-3.96zM507.98,539.40h10.68v3.95h-10.68zM524.78,539.40h3.96v3.95h-3.96zM531.50,539.40h3.96v3.95h-3.96zM544.93,539.40h7.32v3.95h-7.32zM561.73,539.40h10.68v3.95h-10.68zM585.24,539.40h3.96v3.95h-3.96zM440.80,542.74h3.96v3.95h-3.96zM467.67,542.74h3.96v3.95h-3.96zM474.39,542.74h3.96v3.95h-3.96zM491.19,542.74h3.96v3.95h-3.96zM501.26,542.74h3.96v3.95h-3.96zM524.78,542.74h3.96v3.95h-3.96zM531.50,542.74h7.32v3.95h-7.32zM548.29,542.74h3.96v3.95h-3.96zM578.52,542.74h7.32v3.95h-7.32zM440.80,546.09h7.32v3.95h-7.32zM454.24,546.09h7.32v3.95h-7.32zM467.67,546.09h3.96v3.95h-3.96zM494.55,546.09h7.32v3.95h-7.32zM531.50,546.09h3.96v3.95h-3.96zM544.93,546.09h3.96v3.95h-3.96zM558.37,546.09h3.96v3.95h-3.96zM578.52,546.09h3.96v3.95h-3.96zM491.19,549.44h3.96v3.95h-3.96zM501.26,549.44h7.32v3.95h-7.32zM544.93,549.44h3.96v3.95h-3.96zM565.09,549.44h3.96v3.95h-3.96zM575.16,549.44h3.96v3.95h-3.96zM444.16,552.79h10.68v3.95h-10.68zM457.60,552.79h3.96v3.95h-3.96zM464.31,552.79h3.96v3.95h-3.96zM487.83,552.79h3.96v3.95h-3.96zM511.34,552.79h3.96v3.95h-3.96zM521.42,552.79h7.32v3.95h-7.32zM538.21,552.79h3.96v3.95h-3.96zM561.73,552.79h7.32v3.95h-7.32zM571.80,552.79h7.32v3.95h-7.32zM440.80,556.13h3.96v3.95h-3.96zM460.95,556.13h3.96v3.95h-3.96zM507.98,556.13h3.96v3.95h-3.96zM528.14,556.13h3.96v3.95h-3.96zM538.21,556.13h3.96v3.95h-3.96zM544.93,556.13h3.96v3.95h-3.96zM571.80,556.13h3.96v3.95h-3.96zM581.88,556.13h3.96v3.95h-3.96zM447.52,559.48h3.96v3.95h-3.96zM454.24,559.48h3.96v3.95h-3.96zM460.95,559.48h10.68v3.95h-10.68zM474.39,559.48h3.96v3.95h-3.96zM487.83,559.48h3.96v3.95h-3.96zM494.55,559.48h3.96v3.95h-3.96zM507.98,559.48h3.96v3.95h-3.96zM531.50,559.48h3.96v3.95h-3.96zM581.88,559.48h3.96v3.95h-3.96zM467.67,562.83h3.96v3.95h-3.96zM494.55,562.83h3.96v3.95h-3.96zM501.26,562.83h3.96v3.95h-3.96zM518.06,562.83h3.96v3.95h-3.96zM534.85,562.83h7.32v3.95h-7.32zM544.93,562.83h7.32v3.95h-7.32zM578.52,562.83h3.96v3.95h-3.96zM585.24,562.83h3.96v3.95h-3.96zM447.52,566.18h3.96v3.95h-3.96zM484.47,566.18h3.96v3.95h-3.96zM491.19,566.18h3.96v3.95h-3.96zM497.90,566.18h3.96v3.95h-3.96zM507.98,566.18h3.96v3.95h-3.96zM514.70,566.18h3.96v3.95h-3.96zM534.85,566.18h3.96v3.95h-3.96zM541.57,566.18h3.96v3.95h-3.96zM551.65,566.18h3.96v3.95h-3.96zM444.16,569.53h3.96v3.95h-3.96zM454.24,569.53h3.96v3.95h-3.96zM474.39,569.53h7.32v3.95h-7.32zM484.47,569.53h3.96v3.95h-3.96zM501.26,569.53h3.96v3.95h-3.96zM511.34,569.53h3.96v3.95h-3.96zM521.42,569.53h3.96v3.95h-3.96zM534.85,569.53h10.68v3.95h-10.68zM551.65,569.53h3.96v3.95h-3.96zM575.16,569.53h7.32v3.95h-7.32zM450.88,572.87h3.96v3.95h-3.96zM481.11,572.87h3.96v3.95h-3.96zM504.62,572.87h7.32v3.95h-7.32zM538.21,572.87h3.96v3.95h-3.96zM548.29,572.87h3.96v3.95h-3.96zM555.01,572.87h3.96v3.95h-3.96zM568.45,572.87h3.96v3.95h-3.96zM575.16,572.87h3.96v3.95h-3.96zM444.16,576.22h3.96v3.95h-3.96zM457.60,576.22h3.96v3.95h-3.96zM464.31,576.22h3.96v3.95h-3.96zM491.19,576.22h3.96v3.95h-3.96zM501.26,576.22h7.32v3.95h-7.32zM551.65,576.22h7.32v3.95h-7.32zM561.73,576.22h3.96v3.95h-3.96zM450.88,579.57h3.96v3.95h-3.96zM467.67,579.57h10.68v3.95h-10.68zM484.47,579.57h3.96v3.95h-3.96zM491.19,579.57h3.96v3.95h-3.96zM497.90,579.57h3.96v3.95h-3.96zM551.65,579.57h3.96v3.95h-3.96zM561.73,579.57h3.96v3.95h-3.96zM447.52,582.92h10.68v3.95h-10.68zM467.67,582.92h3.96v3.95h-3.96zM481.11,582.92h7.32v3.95h-7.32zM501.26,582.92h3.96v3.95h-3.96zM551.65,582.92h10.68v3.95h-10.68zM450.88,586.26h7.32v3.95h-7.32zM471.03,586.26h3.96v3.95h-3.96zM487.83,586.26h7.32v3.95h-7.32zM497.90,586.26h3.96v3.95h-3.96zM447.52,589.61h10.68v3.95h-10.68zM471.03,589.61h3.96v3.95h-3.96zM571.80,589.61h3.96v3.95h-3.96zM581.88,589.61h7.32v3.95h-7.32zM457.60,592.96h3.96v3.95h-3.96zM487.83,592.96h3.96v3.95h-3.96zM497.90,592.96h3.96v3.95h-3.96zM551.65,592.96h7.32v3.95h-7.32zM561.73,592.96h3.96v3.95h-3.96zM578.52,592.96h3.96v3.95h-3.96zM585.24,592.96h3.96v3.95h-3.96zM447.52,596.31h3.96v3.95h-3.96zM460.95,596.31h3.96v3.95h-3.96zM494.55,596.31h7.32v3.95h-7.32zM558.37,596.31h3.96v3.95h-3.96zM585.24,596.31h3.96v3.95h-3.96zM440.80,599.65h3.96v3.95h-3.96zM551.65,599.65h7.32v3.95h-7.32zM578.52,599.65h3.96v3.95h-3.96zM440.80,603.00h10.68v3.95h-10.68zM460.95,603.00h3.96v3.95h-3.96zM491.19,603.00h3.96v3.95h-3.96zM551.65,603.00h3.96v3.95h-3.96zM561.73,603.00h3.96v3.95h-3.96zM568.45,603.00h3.96v3.95h-3.96zM581.88,603.00h3.96v3.95h-3.96zM444.16,606.35h7.32v3.95h-7.32zM454.24,606.35h3.96v3.95h-3.96zM460.95,606.35h3.96v3.95h-3.96zM474.39,606.35h3.96v3.95h-3.96zM497.90,606.35h3.96v3.95h-3.96zM548.29,606.35h7.32v3.95h-7.32zM558.37,606.35h3.96v3.95h-3.96zM440.80,609.70h3.96v3.95h-3.96zM450.88,609.70h3.96v3.95h-3.96zM460.95,609.70h10.68v3.95h-10.68zM481.11,609.70h7.32v3.95h-7.32zM548.29,609.70h10.68v3.95h-10.68zM585.24,609.70h3.96v3.95h-3.96zM440.80,613.05h3.96v3.95h-3.96zM447.52,613.05h3.96v3.95h-3.96zM464.31,613.05h3.96v3.95h-3.96zM474.39,613.05h3.96v3.95h-3.96zM491.19,613.05h3.96v3.95h-3.96zM551.65,613.05h3.96v3.95h-3.96zM444.16,616.39h3.96v3.95h-3.96zM457.60,616.39h3.96v3.95h-3.96zM474.39,616.39h3.96v3.95h-3.96zM481.11,616.39h3.96v3.95h-3.96zM494.55,616.39h3.96v3.95h-3.96zM501.26,616.39h7.32v3.95h-7.32zM548.29,616.39h3.96v3.95h-3.96zM555.01,616.39h3.96v3.95h-3.96zM565.09,616.39h3.96v3.95h-3.96zM467.67,619.74h10.68v3.95h-10.68zM487.83,619.74h3.96v3.95h-3.96zM511.34,619.74h7.32v3.95h-7.32zM544.93,619.74h3.96v3.95h-3.96zM575.16,619.74h3.96v3.95h-3.96zM454.24,623.09h3.96v3.95h-3.96zM471.03,623.09h3.96v3.95h-3.96zM481.11,623.09h3.96v3.95h-3.96zM487.83,623.09h3.96v3.95h-3.96zM507.98,623.09h3.96v3.95h-3.96zM514.70,623.09h7.32v3.95h-7.32zM524.78,623.09h17.40v3.95h-17.40zM555.01,623.09h7.32v3.95h-7.32zM565.09,623.09h3.96v3.95h-3.96zM571.80,623.09h3.96v3.95h-3.96zM578.52,623.09h3.96v3.95h-3.96zM454.24,626.44h3.96v3.95h-3.96zM474.39,626.44h3.96v3.95h-3.96zM487.83,626.44h3.96v3.95h-3.96zM494.55,626.44h7.32v3.95h-7.32zM507.98,626.44h10.68v3.95h-10.68zM521.42,626.44h3.96v3.95h-3.96zM534.85,626.44h3.96v3.95h-3.96zM565.09,626.44h3.96v3.95h-3.96zM440.80,629.78h3.96v3.95h-3.96zM474.39,629.78h3.96v3.95h-3.96zM507.98,629.78h3.96v3.95h-3.96zM514.70,629.78h3.96v3.95h-3.96zM521.42,629.78h7.32v3.95h-7.32zM538.21,629.78h3.96v3.95h-3.96zM568.45,629.78h3.96v3.95h-3.96zM581.88,629.78h7.32v3.95h-7.32zM440.80,633.13h3.96v3.95h-3.96zM450.88,633.13h7.32v3.95h-7.32zM507.98,633.13h3.96v3.95h-3.96zM518.06,633.13h3.96v3.95h-3.96zM558.37,633.13h3.96v3.95h-3.96zM571.80,633.13h3.96v3.95h-3.96zM578.52,633.13h3.96v3.95h-3.96zM444.16,636.48h3.96v3.95h-3.96zM454.24,636.48h3.96v3.95h-3.96zM487.83,636.48h7.32v3.95h-7.32zM507.98,636.48h10.68v3.95h-10.68zM555.01,636.48h3.96v3.95h-3.96zM444.16,639.83h3.96v3.95h-3.96zM460.95,639.83h3.96v3.95h-3.96zM487.83,639.83h3.96v3.95h-3.96zM501.26,639.83h7.32v3.95h-7.32zM524.78,639.83h3.96v3.95h-3.96zM534.85,639.83h3.96v3.95h-3.96zM555.01,639.83h3.96v3.95h-3.96zM477.75,643.17h3.96v3.95h-3.96zM497.90,643.17h7.32v3.95h-7.32zM511.34,643.17h3.96v3.95h-3.96zM521.42,643.17h10.68v3.95h-10.68zM541.57,643.17h7.32v3.95h-7.32zM551.65,643.17h10.68v3.95h-10.68zM568.45,643.17h3.96v3.95h-3.96zM575.16,643.17h3.96v3.95h-3.96zM581.88,643.17h3.96v3.95h-3.96zM457.60,646.52h3.96v3.95h-3.96zM481.11,646.52h10.68v3.95h-10.68zM501.26,646.52h3.96v3.95h-3.96zM514.70,646.52h3.96v3.95h-3.96zM548.29,646.52h3.96v3.95h-3.96zM561.73,646.52h7.32v3.95h-7.32zM571.80,646.52h3.96v3.95h-3.96zM585.24,646.52h3.96v3.95h-3.96zM494.55,649.87h3.96v3.95h-3.96zM511.34,649.87h3.96v3.95h-3.96zM521.42,649.87h7.32v3.95h-7.32zM531.50,649.87h7.32v3.95h-7.32zM544.93,649.87h3.96v3.95h-3.96zM551.65,649.87h7.32v3.95h-7.32zM561.73,649.87h10.68v3.95h-10.68zM575.16,649.87h3.96v3.95h-3.96zM585.24,649.87h3.96v3.95h-3.96zM454.24,653.22h3.96v3.95h-3.96zM481.11,653.22h7.32v3.95h-7.32zM497.90,653.22h3.96v3.95h-3.96zM514.70,653.22h7.32v3.95h-7.32zM548.29,653.22h7.32v3.95h-7.32zM575.16,653.22h3.96v3.95h-3.96zM585.24,653.22h3.96v3.95h-3.96zM454.24,656.57h7.32v3.95h-7.32zM464.31,656.57h3.96v3.95h-3.96zM471.03,656.57h3.96v3.95h-3.96zM477.75,656.57h3.96v3.95h-3.96zM518.06,656.57h7.32v3.95h-7.32zM548.29,656.57h7.32v3.95h-7.32zM575.16,656.57h3.96v3.95h-3.96zM457.60,659.91h3.96v3.95h-3.96zM471.03,659.91h7.32v3.95h-7.32zM484.47,659.91h3.96v3.95h-3.96zM497.90,659.91h10.68v3.95h-10.68zM524.78,659.91h3.96v3.95h-3.96zM531.50,659.91h3.96v3.95h-3.96zM538.21,659.91h7.32v3.95h-7.32zM548.29,659.91h7.32v3.95h-7.32zM575.16,659.91h3.96v3.95h-3.96zM440.80,663.26h7.32v3.95h-7.32zM454.24,663.26h3.96v3.95h-3.96zM464.31,663.26h3.96v3.95h-3.96zM548.29,663.26h7.32v3.95h-7.32zM575.16,663.26h3.96v3.95h-3.96zM585.24,663.26h3.96v3.95h-3.96zM457.60,666.61h3.96v3.95h-3.96zM471.03,666.61h3.96v3.95h-3.96zM484.47,666.61h3.96v3.95h-3.96zM491.19,666.61h3.96v3.95h-3.96zM504.62,666.61h3.96v3.95h-3.96zM518.06,666.61h3.96v3.95h-3.96zM534.85,666.61h17.40v3.95h-17.40zM575.16,666.61h7.32v3.95h-7.32zM460.95,669.96h7.32v3.95h-7.32zM487.83,669.96h10.68v3.95h-10.68zM544.93,669.96h3.96v3.95h-3.96zM555.01,669.96h3.96v3.95h-3.96zM575.16,669.96h10.68v3.95h-10.68zM460.95,673.30h3.96v3.95h-3.96zM467.67,673.30h7.32v3.95h-7.32zM484.47,673.30h3.96v3.95h-3.96zM501.26,673.30h7.32v3.95h-7.32zM514.70,673.30h3.96v3.95h-3.96zM528.14,673.30h3.96v3.95h-3.96zM538.21,673.30h7.32v3.95h-7.32zM551.65,673.30h7.32v3.95h-7.32zM561.73,673.30h3.96v3.95h-3.96zM571.80,673.30h3.96v3.95h-3.96zM578.52,673.30h3.96v3.95h-3.96zM460.95,676.65h7.32v3.95h-7.32zM507.98,676.65h3.96v3.95h-3.96zM518.06,676.65h3.96v3.95h-3.96zM548.29,676.65h3.96v3.95h-3.96zM558.37,676.65h10.68v3.95h-10.68zM571.80,676.65h3.96v3.95h-3.96z" fill="rgb(207, 207, 207)" shape-rendering="crispEdges"/>
<path d="M518.06,532.70h3.96v3.95h-3.96zM568.45,536.05h3.96v3.95h-3.96zM474.39,539.40h3.96v3.95h-3.96zM555.01,539.40h3.96v3.95h-3.96zM471.03,549.44h3.96v3.95h-3.96zM484.47,549.44h3.96v3.95h-3.96zM555.01,549.44h3.96v3.95h-3.96zM504.62,552.79h3.96v3.95h-3.96zM457.60,559.48h3.96v3.95h-3.96zM491.19,559.48h3.96v3.95h-3.96zM514.70,569.53h7.32v3.95h-7.32zM524.78,569.53h10.68v3.95h-10.68zM511.34,572.87h7.32v3.95h-7.32zM541.57,572.87h3.96v3.95h-3.96zM561.73,572.87h3.96v3.95h-3.96zM454.24,576.22h3.96v3.95h-3.96zM477.75,576.22h3.96v3.95h-3.96zM497.90,576.22h3.96v3.95h-3.96zM544.93,576.22h3.96v3.95h-3.96zM578.52,576.22h3.96v3.95h-3.96zM501.26,579.57h3.96v3.95h-3.96zM544.93,579.57h3.96v3.95h-3.96zM565.09,579.57h3.96v3.95h-3.96zM457.60,582.92h3.96v3.95h-3.96zM548.29,582.92h3.96v3.95h-3.96zM497.90,589.61h3.96v3.95h-3.96zM551.65,589.61h3.96v3.95h-3.96zM484.47,592.96h3.96v3.95h-3.96zM450.88,596.31h3.96v3.95h-3.96zM551.65,596.31h3.96v3.95h-3.96zM460.95,599.65h3.96v3.95h-3.96zM497.90,599.65h3.96v3.95h-3.96zM497.90,603.00h3.96v3.95h-3.96zM565.09,606.35h3.96v3.95h-3.96zM471.03,609.70h3.96v3.95h-3.96zM504.62,613.05h3.96v3.95h-3.96zM544.93,613.05h3.96v3.95h-3.96zM507.98,619.74h3.96v3.95h-3.96zM538.21,619.74h7.32v3.95h-7.32zM551.65,619.74h3.96v3.95h-3.96zM440.80,623.09h3.96v3.95h-3.96zM568.45,623.09h3.96v3.95h-3.96zM481.11,626.44h3.96v3.95h-3.96zM491.19,626.44h3.96v3.95h-3.96zM555.01,626.44h3.96v3.95h-3.96zM464.31,629.78h3.96v3.95h-3.96zM471.03,629.78h3.96v3.95h-3.96zM534.85,629.78h3.96v3.95h-3.96zM481.11,633.13h3.96v3.95h-3.96zM538.21,633.13h3.96v3.95h-3.96zM534.85,636.48h3.96v3.95h-3.96zM544.93,636.48h7.32v3.95h-7.32zM471.03,639.83h3.96v3.95h-3.96zM585.24,643.17h3.96v3.95h-3.96zM444.16,646.52h3.96v3.95h-3.96zM521.42,646.52h3.96v3.95h-3.96zM528.14,649.87h3.96v3.95h-3.96zM558.37,649.87h3.96v3.95h-3.96zM555.01,653.22h7.32v3.95h-7.32zM571.80,653.22h3.96v3.95h-3.96zM571.80,656.57h3.96v3.95h-3.96zM578.52,656.57h3.96v3.95h-3.96zM491.19,659.91h3.96v3.95h-3.96zM578.52,659.91h3.96v3.95h-3.96zM447.52,663.26h3.96v3.95h-3.96zM497.90,663.26h3.96v3.95h-3.96zM528.14,663.26h3.96v3.95h-3.96zM474.39,666.61h3.96v3.95h-3.96zM507.98,669.96h3.96v3.95h-3.96zM558.37,669.96h3.96v3.95h-3.96zM531.50,673.30h3.96v3.95h-3.96zM558.37,673.30h3.96v3.95h-3.96zM568.45,673.30h3.96v3.95h-3.96zM514.70,676.65h3.96v3.95h-3.96zM585.24,676.65h3.96v3.95h-3.96z" fill="rgb(198, 198, 198)" shape-rendering="crispEdges"/>
<path d="M585.24,532.70h3.96v3.95h-3.96zM491.19,536.05h3.96v3.95h-3.96zM544.93,536.05h10.68v3.95h-10.68zM457.60,539.40h3.96v3.95h-3.96zM471.03,539.40h3.96v3.95h-3.96zM454.24,542.74h3.96v3.95h-3.96zM507.98,542.74h3.96v3.95h-3.96zM521.42,542.74h3.96v3.95h-3.96zM521.42,546.09h3.96v3.95h-3.96zM548.29,546.09h3.96v3.95h-3.96zM568.45,546.09h3.96v3.95h-3.96zM467.67,552.79h3.96v3.95h-3.96zM518.06,552.79h3.96v3.95h-3.96zM481.11,556.13h3.96v3.95h-3.96zM501.26,556.13h3.96v3.95h-3.96zM518.06,556.13h3.96v3.95h-3.96zM454.24,562.83h3.96v3.95h-3.96zM460.95,562.83h3.96v3.95h-3.96zM521.42,562.83h3.96v3.95h-3.96zM581.88,562.83h3.96v3.95h-3.96zM521.42,566.18h3.96v3.95h-3.96zM507.98,569.53h3.96v3.95h-3.96zM548.29,569.53h3.96v3.95h-3.96zM447.52,572.87h3.96v3.95h-3.96zM501.26,572.87h3.96v3.95h-3.96zM440.80,579.57h3.96v3.95h-3.96zM454.24,579.57h3.96v3.95h-3.96zM487.83,579.57h3.96v3.95h-3.96zM581.88,579.57h3.96v3.95h-3.96zM568.45,582.92h3.96v3.95h-3.96zM474.39,586.26h3.96v3.95h-3.96zM477.75,592.96h3.96v3.95h-3.96zM581.88,596.31h3.96v3.95h-3.96zM561.73,599.65h3.96v3.95h-3.96zM467.67,603.00h3.96v3.95h-3.96zM457.60,606.35h3.96v3.95h-3.96zM575.16,606.35h3.96v3.95h-3.96zM457.60,609.70h3.96v3.95h-3.96zM561.73,609.70h3.96v3.95h-3.96zM571.80,609.70h3.96v3.95h-3.96zM467.67,616.39h3.96v3.95h-3.96zM487.83,616.39h3.96v3.95h-3.96zM467.67,629.78h3.96v3.95h-3.96zM561.73,629.78h3.96v3.95h-3.96zM575.16,633.13h3.96v3.95h-3.96zM477.75,636.48h3.96v3.95h-3.96zM477.75,639.83h3.96v3.95h-3.96zM531.50,639.83h3.96v3.95h-3.96zM565.09,639.83h3.96v3.95h-3.96zM440.80,643.17h3.96v3.95h-3.96zM481.11,643.17h3.96v3.95h-3.96zM561.73,643.17h3.96v3.95h-3.96zM491.19,646.52h3.96v3.95h-3.96zM444.16,649.87h3.96v3.95h-3.96zM467.67,649.87h3.96v3.95h-3.96zM487.83,649.87h3.96v3.95h-3.96zM447.52,653.22h3.96v3.95h-3.96zM477.75,653.22h3.96v3.95h-3.96zM460.95,659.91h3.96v3.95h-3.96zM467.67,659.91h3.96v3.95h-3.96zM544.93,659.91h3.96v3.95h-3.96zM484.47,663.26h3.96v3.95h-3.96zM501.26,663.26h3.96v3.95h-3.96zM541.57,663.26h3.96v3.95h-3.96zM440.80,666.61h3.96v3.95h-3.96zM528.14,666.61h3.96v3.95h-3.96zM444.16,669.96h3.96v3.95h-3.96zM457.60,669.96h3.96v3.95h-3.96zM514.70,669.96h3.96v3.95h-3.96zM538.21,669.96h3.96v3.95h-3.96zM507.98,673.30h3.96v3.95h-3.96zM467.67,676.65h3.96v3.95h-3.96zM474.39,676.65h3.96v3.95h-3.96zM491.19,676.65h3.96v3.95h-3.96zM501.26,676.65h7.32v3.95h-7.32z" fill="rgb(236, 236, 236)" shape-rendering="crispEdges"/>
<path d="M511.34,542.74h3.96v3.95h-3.96zM511.34,562.83h3.96v3.95h-3.96zM440.80,572.87h3.96v3.95h-3.96z" fill="rgb(245, 245, 245)" shape-rendering="crispEdges"/>
<path d="M518.06,572.87h3.96v3.95h-3.96zM531.50,572.87h3.96v3.95h-3.96zM511.34,576.22h3.96v3.95h-3.96zM538.21,576.22h3.96v3.95h-3.96zM507.98,579.57h3.96v3.95h-3.96zM504.62,582.92h3.96v3.95h-3.96zM548.29,592.96h3.96v3.95h-3.96zM501.26,596.31h3.96v3.95h-3.96zM514.70,616.39h3.96v3.95h-3.96zM528.14,619.74h3.96v3.95h-3.96zM541.57,623.09h3.96v3.95h-3.96zM548.29,623.09h3.96v3.95h-3.96zM541.57,626.44h3.96v3.95h-3.96zM551.65,626.44h3.96v3.95h-3.96zM541.57,633.13h3.96v3.95h-3.96zM548.29,633.13h3.96v3.95h-3.96zM561.73,653.22h3.96v3.95h-3.96zM558.37,659.91h3.96v3.95h-3.96zM568.45,659.91h3.96v3.95h-3.96zM568.45,663.26h3.96v3.95h-3.96zM565.09,666.61h3.96v3.95h-3.96z" fill="rgb(170, 170, 170)" shape-rendering="crispEdges"/>
<path d="M521.42,572.87h3.96v3.95h-3.96zM541.57,579.57h3.96v3.95h-3.96zM544.93,586.26h3.96v3.95h-3.96zM548.29,589.61h3.96v3.95h-3.96zM548.29,596.31h3.96v3.95h-3.96zM544.93,606.35h3.96v3.95h-3.96zM534.85,616.39h3.96v3.95h-3.96zM544.93,623.09h3.96v3.95h-3.96zM541.57,629.78h3.96v3.95h-3.96zM548.29,629.78h3.96v3.95h-3.96zM561.73,656.57h3.96v3.95h-3.96zM561.73,659.91h7.32v3.95h-7.32zM558.37,663.26h3.96v3.95h-3.96zM561.73,666.61h3.96v3.95h-3.96z" fill="rgb(160, 160, 160)" shape-rendering="crispEdges"/>
<path d="M524.78,572.87h3.96v3.95h-3.96zM514.70,576.22h3.96v3.95h-3.96zM507.98,582.92h3.96v3.95h-3.96zM511.34,613.05h3.96v3.95h-3.96zM548.29,626.44h3.96v3.95h-3.96z" fill="rgb(141, 141, 141)" shape-rendering="crispEdges"/>
<path d="M528.14,572.87h3.96v3.95h-3.96zM534.85,576.22h3.96v3.95h-3.96zM504.62,586.26h3.96v3.95h-3.96zM504.62,606.35h3.96v3.95h-3.96zM507.98,609.70h3.96v3.95h-3.96zM538.21,613.05h3.96v3.95h-3.96zM518.06,616.39h3.96v3.95h-3.96zM531.50,616.39h3.96v3.95h-3.96zM544.93,626.44h3.96v3.95h-3.96zM544.93,629.78h3.96v3.95h-3.96zM561.73,663.26h7.32v3.95h-7.32z" fill="rgb(151, 151, 151)" shape-rendering="crispEdges"/>
<path d="M534.85,572.87h3.96v3.95h-3.96zM507.98,576.22h3.96v3.95h-3.96zM541.57,576.22h3.96v3.95h-3.96zM544.93,582.92h3.96v3.95h-3.96zM501.26,589.61h3.96v3.95h-3.96zM501.26,592.96h3.96v3.95h-3.96zM501.26,599.65h3.96v3.95h-3.96zM548.29,599.65h3.96v3.95h-3.96zM501.26,603.00h3.96v3.95h-3.96zM548.29,603.00h3.96v3.95h-3.96zM504.62,609.70h3.96v3.95h-3.96zM544.93,609.70h3.96v3.95h-3.96zM507.98,613.05h3.96v3.95h-3.96zM541.57,613.05h3.96v3.95h-3.96zM511.34,616.39h3.96v3.95h-3.96zM538.21,616.39h3.96v3.95h-3.96zM524.78,619.74h3.96v3.95h-3.96zM551.65,623.09h3.96v3.95h-3.96zM551.65,629.78h7.32v3.95h-7.32zM544.93,633.13h3.96v3.95h-3.96zM565.09,653.22h3.96v3.95h-3.96zM558.37,656.57h3.96v3.95h-3.96zM565.09,656.57h7.32v3.95h-7.32z" fill="rgb(179, 179, 179)" shape-rendering="crispEdges"/>
<path d="M518.06,576.22h3.96v3.95h-3.96zM511.34,579.57h3.96v3.95h-3.96zM544.93,589.61h3.96v3.95h-3.96zM504.62,592.96h3.96v3.95h-3.96zM544.93,599.65h3.96v3.95h-3.96zM524.78,616.39h3.96v3.95h-3.96z" fill="rgb(122, 122, 122)" shape-rendering="crispEdges"/>
<path d="M521.42,576.22h3.96v3.95h-3.96zM528.14,576.22h3.96v3.95h-3.96zM544.93,596.31h3.96v3.95h-3.96zM504.62,599.65h3.96v3.95h-3.96zM507.98,606.35h3.96v3.95h-3.96zM541.57,606.35h3.96v3.95h-3.96zM514.70,613.05h3.96v3.95h-3.96z" fill="rgb(103, 103, 103)" shape-rendering="crispEdges"/>
<path d="M524.78,576.22h3.96v3.95h-3.96zM511.34,609.70h3.96v3.95h-3.96zM538.21,609.70h3.96v3.95h-3.96z" fill="rgb(94, 94, 94)" shape-rendering="crispEdges"/>
<path d="M531.50,576.22h3.96v3.95h-3.96zM544.93,592.96h3.96v3.95h-3.96zM504.62,596.31h3.96v3.95h-3.96zM534.85,613.05h3.96v3.95h-3.96z" fill="rgb(113, 113, 113)" shape-rendering="crispEdges"/>
<path d="M504.62,579.57h3.96v3.95h-3.96zM501.26,586.26h3.96v3.95h-3.96zM548.29,586.26h3.96v3.95h-3.96zM501.26,606.35h3.96v3.95h-3.96zM507.98,616.39h3.96v3.95h-3.96zM541.57,616.39h7.32v3.95h-7.32zM518.06,619.74h7.32v3.95h-7.32zM531.50,619.74h7.32v3.95h-7.32zM548.29,619.74h3.96v3.95h-3.96zM521.42,623.09h3.96v3.95h-3.96zM538.21,626.44h3.96v3.95h-3.96zM551.65,633.13h3.96v3.95h-3.96zM568.45,653.22h3.96v3.95h-3.96zM555.01,656.57h3.96v3.95h-3.96zM555.01,659.91h3.96v3.95h-3.96zM571.80,659.91h3.96v3.95h-3.96zM555.01,663.26h3.96v3.95h-3.96zM571.80,663.26h3.96v3.95h-3.96zM555.01,666.61h7.32v3.95h-7.32zM568.45,666.61h7.32v3.95h-7.32zM561.73,669.96h14.04v3.95h-14.04z" fill="rgb(188, 188, 188)" shape-rendering="crispEdges"/>
<path d="M514.70,579.57h3.96v3.95h-3.96zM534.85,579.57h3.96v3.95h-3.96zM507.98,586.26h3.96v3.95h-3.96zM541.57,586.26h3.96v3.95h-3.96z" fill="rgb(85, 85, 85)" shape-rendering="crispEdges"/>
<path d="M518.06,579.57h3.96v3.95h-3.96zM531.50,579.57h3.96v3.95h-3.96zM507.98,599.65h3.96v3.95h-3.96zM541.57,599.65h3.96v3.95h-3.96zM511.34,606.35h3.96v3.95h-3.96zM514.70,609.70h3.96v3.95h-3.96zM534.85,609.70h3.96v3.95h-3.96zM524.78,613.05h3.96v3.95h-3.96z" fill="rgb(37, 37, 37)" shape-rendering="crispEdges"/>
<path d="M521.42,579.57h3.96v3.95h-3.96zM511.34,586.26h3.96v3.95h-3.96zM541.57,596.31h3.96v3.95h-3.96z" fill="rgb(18, 18, 18)" shape-rendering="crispEdges"/>
<path d="M524.78,579.57h3.96v3.95h-3.96zM518.06,582.92h17.40v3.95h-17.40zM514.70,586.26h24.11v3.95h-24.11zM511.34,589.61h30.83v3.95h-30.83zM511.34,592.96h30.83v3.95h-30.83zM511.34,596.31h30.83v3.95h-30.83zM511.34,599.65h30.83v3.95h-30.83zM511.34,603.00h30.83v3.95h-30.83zM514.70,606.35h24.11v3.95h-24.11zM518.06,609.70h17.40v3.95h-17.40z" fill="rgb(0, 0, 0)" shape-rendering="crispEdges"/>
<path d="M528.14,579.57h3.96v3.95h-3.96zM514.70,582.92h3.96v3.95h-3.96zM534.85,582.92h3.96v3.95h-3.96zM538.21,586.26h3.96v3.95h-3.96z" fill="rgb(9, 9, 9)" shape-rendering="crispEdges"/>
<path d="M538.21,579.57h3.96v3.95h-3.96zM541.57,582.92h3.96v3.95h-3.96zM504.62,589.61h3.96v3.95h-3.96zM504.62,603.00h3.96v3.95h-3.96zM544.93,603.00h3.96v3.95h-3.96zM541.57,609.70h3.96v3.95h-3.96zM521.42,616.39h3.96v3.95h-3.96zM528.14,616.39h3.96v3.95h-3.96z" fill="rgb(132, 132, 132)" shape-rendering="crispEdges"/>
<path d="M511.34,582.92h3.96v3.95h-3.96zM538.21,582.92h3.96v3.95h-3.96zM518.06,613.05h3.96v3.95h-3.96zM531.50,613.05h3.96v3.95h-3.96z" fill="rgb(75, 75, 75)" shape-rendering="crispEdges"/>
<path d="M507.98,589.61h3.96v3.95h-3.96z" fill="rgb(56, 56, 56)" shape-rendering="crispEdges"/>
<path d="M541.57,589.61h3.96v3.95h-3.96zM521.42,613.05h3.96v3.95h-3.96zM528.14,613.05h3.96v3.95h-3.96z" fill="rgb(47, 47, 47)" shape-rendering="crispEdges"/>
<path d="M507.98,592.96h3.96v3.95h-3.96zM541.57,592.96h3.96v3.95h-3.96zM507.98,596.31h3.96v3.95h-3.96zM538.21,606.35h3.96v3.95h-3.96z" fill="rgb(28, 28, 28)" shape-rendering="crispEdges"/>
<path d="M507.98,603.00h3.96v3.95h-3.96zM541.57,603.00h3.96v3.95h-3.96z" fill="rgb(66, 66, 66)" shape-rendering="crispEdges"/>
</g>
<rect x="440.8" y="532.7" width="147.8" height="147.3" fill="none" stroke="#222" stroke-width="1.1"/>
<rect x="465.3" y="557.5" width="98.1" height="98.1" fill="none" stroke="#ff0000" stroke-width="1.2"/>
<text x="514.40" y="546.50" font-size="11" font-family='"Liberation Sans", sans-serif' fill="#ff0000" text-anchor="middle" >N</text>
<text x="451.30" y="610.50" font-size="11" font-family='"Liberation Sans", sans-serif' fill="#ff0000" text-anchor="middle" >E</text>
<line x1="449.0" y1="680.0" x2="449.0" y2="683.5" stroke="#222" stroke-width="0.8"/>
<line x1="437.3" y1="671.9" x2="440.8" y2="671.9" stroke="#222" stroke-width="0.8"/>
<text x="449.00" y="695.70" font-size="10.6" font-family='"Liberation Sans", sans-serif' fill="#000" text-anchor="middle" textLength="13.6" lengthAdjust="spacingAndGlyphs" >−4</text>
<text x="434.80" y="675.70" font-size="10.6" font-family='"Liberation Sans", sans-serif' fill="#000" text-anchor="end" textLength="13.6" lengthAdjust="spacingAndGlyphs" >−4</text>
<line x1="481.7" y1="680.0" x2="481.7" y2="683.5" stroke="#222" stroke-width="0.8"/>
<line x1="437.3" y1="639.2" x2="440.8" y2="639.2" stroke="#222" stroke-width="0.8"/>
<text x="481.70" y="695.70" font-size="10.6" font-family='"Liberation Sans", sans-serif' fill="#000" text-anchor="middle" textLength="13.6" lengthAdjust="spacingAndGlyphs" >−2</text>
<text x="434.80" y="643.00" font-size="10.6" font-family='"Liberation Sans", sans-serif' fill="#000" text-anchor="end" textLength="13.6" lengthAdjust="spacingAndGlyphs" >−2</text>
<line x1="514.4" y1="680.0" x2="514.4" y2="683.5" stroke="#222" stroke-width="0.8"/>
<line x1="437.3" y1="606.5" x2="440.8" y2="606.5" stroke="#222" stroke-width="0.8"/>
<text x="514.40" y="695.70" font-size="10.6" font-family='"Liberation Sans", sans-serif' fill="#000" text-anchor="middle" >0</text>
<text x="434.80" y="610.30" font-size="10.6" font-family='"Liberation Sans", sans-serif' fill="#000" text-anchor="end" >0</text>
<line x1="547.1" y1="680.0" x2="547.1" y2="683.5" stroke="#222" stroke-width="0.8"/>
<line x1="437.3" y1="573.8" x2="440.8" y2="573.8" stroke="#222" stroke-width="0.8"/>
<text x="547.10" y="695.70" font-size="10.6" font-family='"Liberation Sans", sans-serif' fill="#000" text-anchor="middle" >2</text>
<text x="434.80" y="577.60" font-size="10.6" font-family='"Liberation Sans", sans-serif' fill="#000" text-anchor="end" >2</text>
<line x1="579.8" y1="680.0" x2="579.8" y2="683.5" stroke="#222" stroke-width="0.8"/>
<line x1="437.3" y1="541.1" x2="440.8" y2="541.1" stroke="#222" stroke-width="0.8"/>
<text x="579.80" y="695.70" font-size="10.6" font-family='"Liberation Sans", sans-serif' fill="#000" text-anchor="middle" >4</text>
<text x="434.80" y="544.90" font-size="10.6" font-family='"Liberation Sans", sans-serif' fill="#000" text-anchor="end" >4</text>
<text x="514.40" y="525.30" font-size="12.6" font-family='"Liberation Sans", sans-serif' fill="#000" text-anchor="middle" textLength="74.8" lengthAdjust="spacingAndGlyphs" >HSC(26.2) r</text>
<circle cx="121.0" cy="563.2" r="12.2" fill="none" stroke="#707070" stroke-width="0.9"/>
<circle cx="145.9" cy="563.2" r="12.2" fill="none" stroke="#707070" stroke-width="0.9"/>
<circle cx="170.7" cy="563.2" r="12.2" fill="none" stroke="#707070" stroke-width="0.9"/>
<circle cx="109.1" cy="582.8" r="12.2" fill="none" stroke="#707070" stroke-width="0.9"/>
<circle cx="134.0" cy="582.8" r="12.2" fill="none" stroke="#707070" stroke-width="0.9"/>
<circle cx="158.3" cy="582.8" r="12.2" fill="none" stroke="#707070" stroke-width="0.9"/>
<circle cx="183.0" cy="582.8" r="12.2" fill="none" stroke="#707070" stroke-width="0.9"/>
<circle cx="96.2" cy="606.5" r="12.2" fill="none" stroke="#707070" stroke-width="0.9"/>
<circle cx="167.3" cy="606.5" r="12.2" fill="none" stroke="#707070" stroke-width="0.9"/>
<circle cx="192.2" cy="606.5" r="12.2" fill="none" stroke="#707070" stroke-width="0.9"/>
<circle cx="108.1" cy="626.1" r="12.2" fill="none" stroke="#707070" stroke-width="0.9"/>
<circle cx="179.6" cy="626.1" r="12.2" fill="none" stroke="#707070" stroke-width="0.9"/>
<circle cx="117.6" cy="647.4" r="12.2" fill="none" stroke="#707070" stroke-width="0.9"/>
<circle cx="142.5" cy="647.4" r="12.2" fill="none" stroke="#707070" stroke-width="0.9"/>
<circle cx="166.8" cy="647.4" r="12.2" fill="none" stroke="#707070" stroke-width="0.9"/>
<circle cx="119.9" cy="605.7" r="12.2" fill="none" stroke="#ff0000" stroke-width="1.2"/>
<circle cx="143.6" cy="606.5" r="12.2" fill="none" stroke="#0000ff" stroke-width="1.2"/>
<circle cx="131.7" cy="626.1" r="12.2" fill="none" stroke="#00ff00" stroke-width="1.2"/>
<circle cx="154.9" cy="626.1" r="12.2" fill="none" stroke="#ffa500" stroke-width="1.2"/>
<path d="M139.6,606.5H147.6M143.6,602.5V610.5" stroke="#ff0000" stroke-width="1.3"/>
<text x="143.90" y="706.50" font-size="10.6" font-family='"Liberation Sans", sans-serif' fill="#000" text-anchor="middle" textLength="40.2" lengthAdjust="spacingAndGlyphs" >arcsecs</text>
<path d="M291.6,606.5H321.2M336.0,606.5H365.6M328.6,569.2V599.6M328.6,613.5V643.9" stroke="#ff0000" stroke-width="1.2"/>
<path d="M477.4,606.5H507.0M521.8,606.5H551.4M514.4,569.2V599.6M514.4,613.5V643.9" stroke="#ff0000" stroke-width="1.2"/>
<text x="328.50" y="706.50" font-size="10.6" font-family='"Liberation Sans", sans-serif' fill="#000" text-anchor="middle" textLength="100.4" lengthAdjust="spacingAndGlyphs" >s/b: 0.96 +/- 0.075</text>
<circle cx="526.3" cy="599.1" r="33.2" fill="none" stroke="#f0c419" stroke-width="1.2"/>
<rect x="519.0" y="591.5" width="13.4" height="13.1" fill="none" stroke="#0000ff" stroke-width="1.2"/>
<circle cx="565.1" cy="663.7" r="15.5" fill="none" stroke="#f0f0f0" stroke-width="0.8" opacity="0.45"/>
<text x="514.60" y="707.50" font-size="10.6" font-family='"Liberation Sans", sans-serif' fill="#000" text-anchor="middle" textLength="119.9" lengthAdjust="spacingAndGlyphs" xml:space="preserve">m:20.4  re:2.0"  s:0.9"</text>
<text x="516.00" y="718.60" font-size="10.6" font-family='"Liberation Sans", sans-serif' fill="#000" text-anchor="middle" textLength="105.5" lengthAdjust="spacingAndGlyphs" >EWr: 1, PLAE: 0.291</text>
<text x="70.30" y="786.10" font-size="12.95" font-family='"Liberation Mono", monospace' fill="#000" text-anchor="start" >Separation</text>
<text x="70.30" y="800.30" font-size="12.95" font-family='"Liberation Mono", monospace' fill="#000" text-anchor="start" >Match score</text>
<text x="70.30" y="815.30" font-size="12.95" font-family='"Liberation Mono", monospace' fill="#000" text-anchor="start" >RA, Dec</text>
<text x="70.30" y="829.60" font-size="12.95" font-family='"Liberation Mono", monospace' fill="#000" text-anchor="start" >Spec z</text>
<text x="70.30" y="844.60" font-size="12.95" font-family='"Liberation Mono", monospace' fill="#000" text-anchor="start" >Photo z</text>
<text x="70.30" y="859.00" font-size="12.95" font-family='"Liberation Mono", monospace' fill="#000" text-anchor="start" >Est LyA rest-EW</text>
<text x="70.30" y="873.60" font-size="12.95" font-family='"Liberation Mono", monospace' fill="#000" text-anchor="start" >mag</text>
<text x="70.30" y="888.10" font-size="12.95" font-family='"Liberation Mono", monospace' fill="#000" text-anchor="start" >P(LAE)/P(OII)</text>
<text y="854.30" font-size="12.95" font-family='"Liberation Mono", monospace' fill="#0000ff" xml:space="preserve"><tspan x="287.60">0.99(</tspan><tspan x="331.88" text-anchor="middle" font-family='"Liberation Sans", sans-serif' font-size="14.50">±</tspan><tspan x="337.27">0.64)</tspan><tspan x="376.17" font-style="italic">Å</tspan></text>
<text x="287.60" y="886.40" font-size="12.9" font-family='"Liberation Sans", sans-serif' fill="#0000ff" text-anchor="start" textLength="34.9" lengthAdjust="spacingAndGlyphs" >0.266</text>
<text x="287.60" y="779.70" font-size="12.95" font-family='"Liberation Mono", monospace' fill="#0000ff" text-anchor="start" >0.870267"</text>
<text x="287.60" y="793.90" font-size="12.95" font-family='"Liberation Mono", monospace' fill="#0000ff" text-anchor="start" >1.000</text>
<text x="287.60" y="808.20" font-size="12.95" font-family='"Liberation Mono", monospace' fill="#0000ff" text-anchor="start" >198.841181, 54.158405</text>
<text x="287.60" y="822.80" font-size="12.95" font-family='"Liberation Mono", monospace' fill="#0000ff" text-anchor="start" >N/A</text>
<text x="287.60" y="837.60" font-size="12.95" font-family='"Liberation Mono", monospace' fill="#0000ff" text-anchor="start" >N/A</text>
<text x="287.60" y="854.30" font-size="12.95" font-family='"Liberation Mono", monospace' fill="#0000ff" text-anchor="start" ></text>
<text x="287.60" y="869.30" font-size="12.95" font-family='"Liberation Mono", monospace' fill="#0000ff" text-anchor="start" >20.39(20.39,20.40)R</text>
<text x="287.60" y="886.40" font-size="12.95" font-family='"Liberation Mono", monospace' fill="#0000ff" text-anchor="start" ></text>
<text x="327.80" y="881.50" font-size="9.4" font-family='"Liberation Sans", sans-serif' fill="#0000ff" text-anchor="start" textLength="25.3" lengthAdjust="spacingAndGlyphs" >0.514</text>
<text x="327.80" y="889.60" font-size="9.4" font-family='"Liberation Sans", sans-serif' fill="#0000ff" text-anchor="start" textLength="25.3" lengthAdjust="spacingAndGlyphs" >0.164</text>
<text x="938.90" y="821.40" font-size="12.95" font-family='"Liberation Mono", monospace' fill="#000" text-anchor="start" >Phot z plot not available.</text>
</svg></body></html>
